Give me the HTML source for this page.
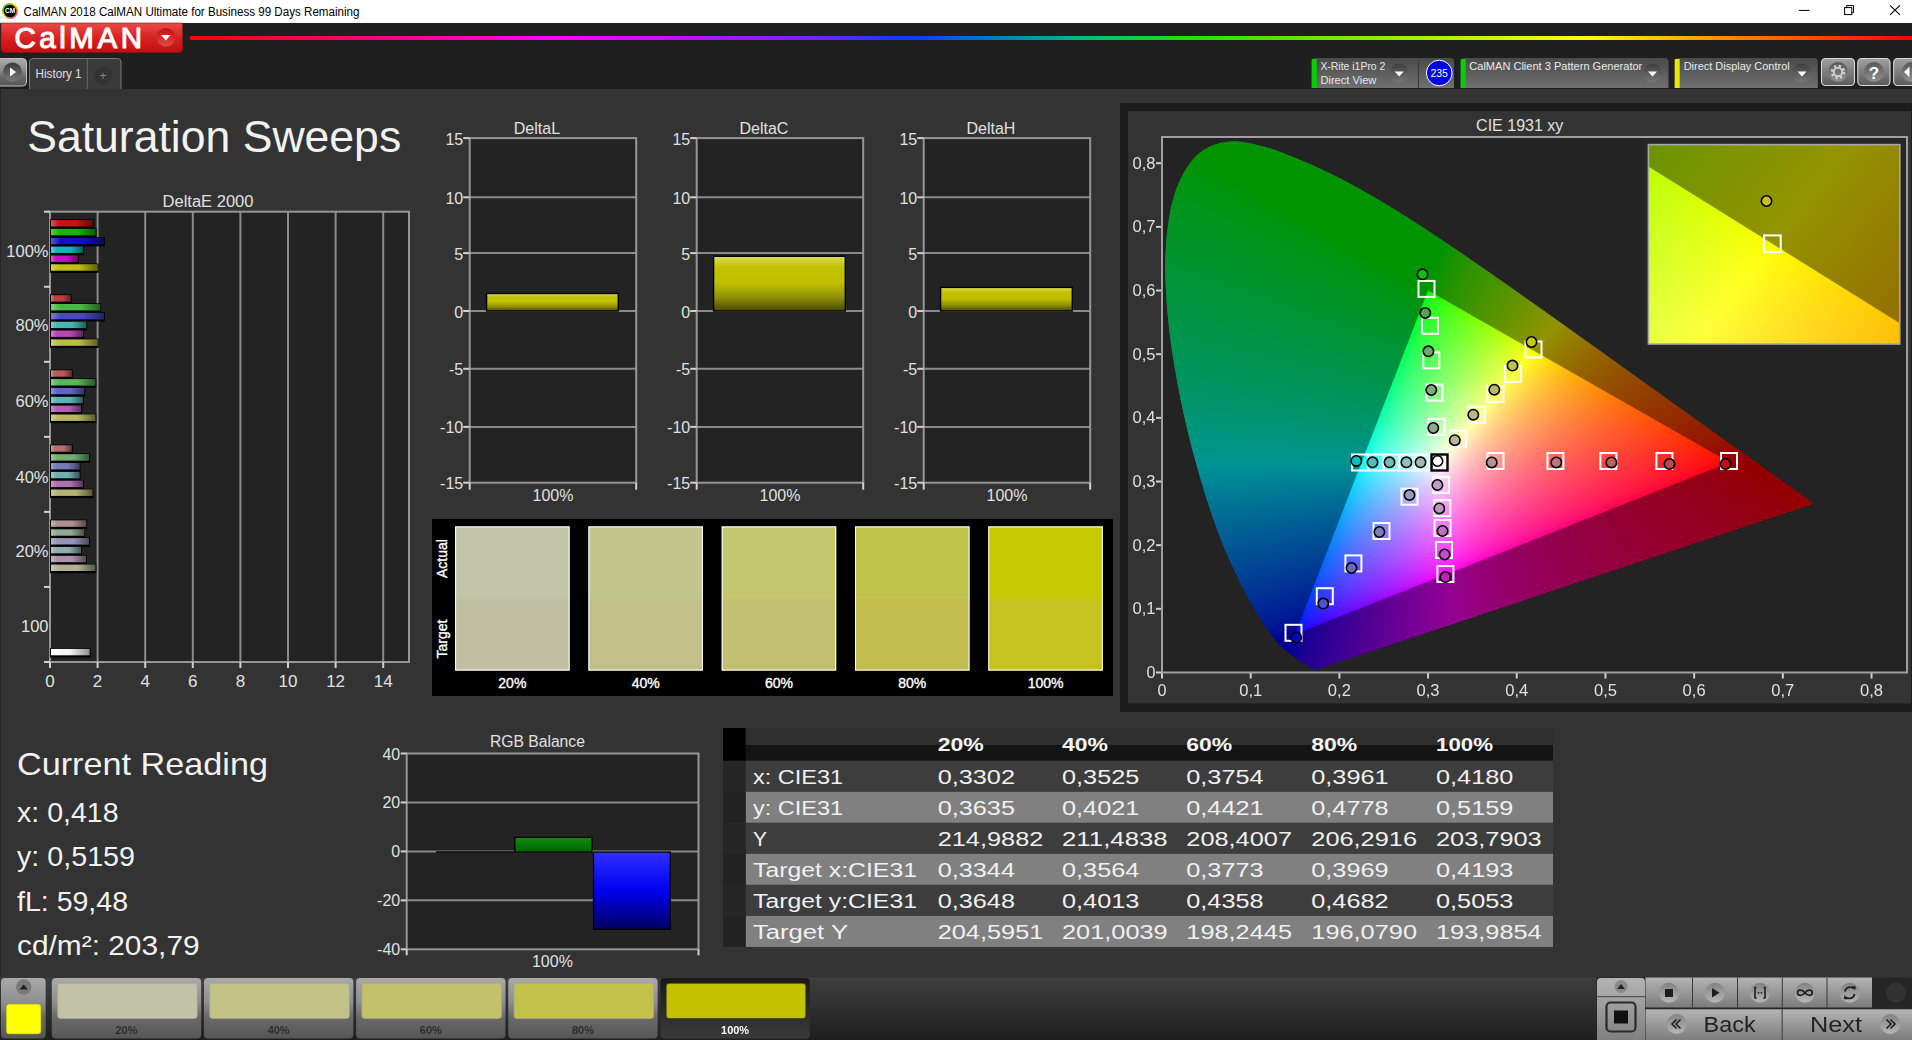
<!DOCTYPE html>
<html><head><meta charset="utf-8"><title>CalMAN</title>
<style>
html,body{margin:0;padding:0;width:1912px;height:1040px;overflow:hidden;background:#333;font-family:"Liberation Sans",sans-serif}
svg,canvas{position:absolute;display:block}
text{font-family:"Liberation Sans",sans-serif}
</style></head><body>
<svg width="1912" height="1040" style="left:0;top:0"><defs>
<linearGradient id="gLogo" x1="0" y1="0" x2="0" y2="1"><stop offset="0" stop-color="#e84a4a"/><stop offset="0.5" stop-color="#d82222"/><stop offset="1" stop-color="#c40c0c"/></linearGradient>
<linearGradient id="gLogoBtn" x1="0" y1="0" x2="0" y2="1"><stop offset="0" stop-color="#c01010"/><stop offset="1" stop-color="#e04848"/></linearGradient>
<linearGradient id="gRain" x1="0" y1="0" x2="1" y2="0">
 <stop offset="0" stop-color="#ff0000"/><stop offset="0.215" stop-color="#ff00ff"/><stop offset="0.36" stop-color="#7a20ff"/><stop offset="0.42" stop-color="#0040ff"/>
 <stop offset="0.52" stop-color="#00c080"/><stop offset="0.58" stop-color="#20e000"/><stop offset="0.81" stop-color="#ffff00"/><stop offset="0.9" stop-color="#ff8000"/><stop offset="1" stop-color="#ff0000"/></linearGradient>
<linearGradient id="gWid" x1="0" y1="0" x2="0" y2="1"><stop offset="0" stop-color="#4a4a4a"/><stop offset="1" stop-color="#707070"/></linearGradient>
<linearGradient id="gBtnLt" x1="0" y1="0" x2="0" y2="1"><stop offset="0" stop-color="#a0a0a0"/><stop offset="1" stop-color="#5a5a5a"/></linearGradient><linearGradient id="gCirc" x1="0" y1="0" x2="0" y2="1"><stop offset="0" stop-color="#585858"/><stop offset="1" stop-color="#909090"/></linearGradient><linearGradient id="gBtnDk" x1="0" y1="0" x2="0" y2="1"><stop offset="0" stop-color="#777"/><stop offset="1" stop-color="#444"/></linearGradient>
<linearGradient id="gDrop" x1="0" y1="0" x2="0" y2="1"><stop offset="0" stop-color="#3a3a3a"/><stop offset="1" stop-color="#7a7a7a"/></linearGradient>
<linearGradient id="gTile" x1="0" y1="0" x2="0" y2="1"><stop offset="0" stop-color="#aaaaaa"/><stop offset="0.4" stop-color="#8e8e8e"/><stop offset="0.65" stop-color="#6a6a6a"/><stop offset="1" stop-color="#565656"/></linearGradient>
<linearGradient id="gTileSel" x1="0" y1="0" x2="0" y2="1"><stop offset="0" stop-color="#1a1a1a"/><stop offset="1" stop-color="#3a3a3a"/></linearGradient>
<linearGradient id="gBar" x1="0" y1="0" x2="0" y2="1"><stop offset="0" stop-color="#3e3e3e"/><stop offset="1" stop-color="#1e1e1e"/></linearGradient>
<linearGradient id="gCtl" x1="0" y1="0" x2="0" y2="1"><stop offset="0" stop-color="#b4b4b4"/><stop offset="1" stop-color="#7c7c7c"/></linearGradient>
<linearGradient id="gCtlC" x1="0" y1="0" x2="0" y2="1"><stop offset="0" stop-color="#7a7a7a"/><stop offset="1" stop-color="#c0c0c0"/></linearGradient>
<linearGradient id="gYel" x1="0" y1="0" x2="0" y2="1"><stop offset="0" stop-color="#dcdc5a"/><stop offset="0.2" stop-color="#c2c200"/><stop offset="0.48" stop-color="#c0c000"/><stop offset="0.75" stop-color="#909008"/><stop offset="1" stop-color="#4a4800"/></linearGradient>
<linearGradient id="gGrn" x1="0" y1="0" x2="0" y2="1"><stop offset="0" stop-color="#109010"/><stop offset="1" stop-color="#006000"/></linearGradient>
<linearGradient id="gBlu" x1="0" y1="0" x2="0" y2="1"><stop offset="0" stop-color="#3030ff"/><stop offset="0.5" stop-color="#0000f0"/><stop offset="1" stop-color="#000060"/></linearGradient>
<linearGradient id="gIco" x1="0" y1="0" x2="1" y2="1"><stop offset="0" stop-color="#00d000"/><stop offset="0.5" stop-color="#ffd000"/><stop offset="1" stop-color="#d000d0"/></linearGradient><linearGradient id="hb" x1="0" y1="0" x2="1" y2="0"><stop offset="0" stop-color="#fff" stop-opacity="0.3"/><stop offset="0.18" stop-color="#fff" stop-opacity="0"/><stop offset="0.6" stop-color="#000" stop-opacity="0"/><stop offset="1" stop-color="#000" stop-opacity="0.5"/></linearGradient><linearGradient id="gWhite" x1="0" y1="0" x2="1" y2="0"><stop offset="0" stop-color="#ffffff"/><stop offset="0.5" stop-color="#f0f0f0"/><stop offset="1" stop-color="#909090"/></linearGradient><linearGradient id="fiU" x1="0" y1="0" x2="1" y2="1"><stop offset="0" stop-color="#609800"/><stop offset="0.5" stop-color="#9a9600"/><stop offset="1" stop-color="#9a7000"/></linearGradient><linearGradient id="fiL" x1="0" y1="0" x2="1" y2="1"><stop offset="0" stop-color="#b8ff00"/><stop offset="0.5" stop-color="#ffff10"/><stop offset="1" stop-color="#ffb400"/></linearGradient><clipPath id="cpH"><polygon points="1316.4,669.3 1316.4,669.3 1316.4,669.3 1316.4,669.3 1316.3,669.3 1316.3,669.3 1316.2,669.3 1316.2,669.4 1316.1,669.4 1316.1,669.4 1316.1,669.4 1316.0,669.4 1316.0,669.4 1315.9,669.4 1315.8,669.4 1315.8,669.4 1315.7,669.4 1315.6,669.4 1315.6,669.4 1315.5,669.4 1315.4,669.4 1315.4,669.4 1315.3,669.4 1315.2,669.4 1315.1,669.4 1315.0,669.4 1314.9,669.5 1314.8,669.5 1314.6,669.4 1314.5,669.4 1314.4,669.4 1314.2,669.3 1314.0,669.3 1313.8,669.2 1313.6,669.1 1313.3,668.9 1313.0,668.8 1312.8,668.7 1312.5,668.5 1312.2,668.3 1311.8,668.1 1311.4,667.9 1311.0,667.6 1310.5,667.3 1310.0,667.0 1309.5,666.7 1309.0,666.3 1308.4,666.0 1307.8,665.6 1307.1,665.1 1306.5,664.7 1305.7,664.2 1304.9,663.7 1304.0,663.2 1303.0,662.6 1302.0,661.9 1300.9,661.2 1299.7,660.5 1298.5,659.8 1297.3,659.0 1295.9,658.0 1294.5,657.1 1293.0,656.0 1291.4,654.9 1289.7,653.6 1288.0,652.2 1286.2,650.8 1284.3,649.1 1282.2,647.1 1279.9,644.8 1277.5,642.2 1274.8,639.2 1272.1,635.7 1269.1,631.8 1266.0,627.6 1262.7,622.8 1259.2,617.2 1255.5,611.0 1251.5,604.2 1247.4,596.6 1243.0,588.0 1238.2,578.6 1233.2,568.3 1228.1,557.1 1222.9,544.7 1217.8,531.3 1212.6,516.7 1207.4,501.2 1202.3,484.7 1197.2,467.1 1192.1,448.5 1187.3,429.2 1182.8,409.8 1178.8,390.0 1175.1,369.7 1171.8,349.5 1169.3,329.8 1167.3,310.5 1166.0,291.5 1165.3,273.1 1165.5,255.7 1166.5,239.0 1168.3,223.1 1170.9,208.3 1174.3,194.9 1178.7,183.0 1184.0,172.3 1190.0,163.1 1196.5,155.6 1203.6,149.9 1211.4,145.9 1219.6,143.3 1227.9,141.7 1236.5,141.4 1245.3,142.4 1254.3,144.3 1263.3,146.5 1272.3,149.1 1281.3,152.3 1290.4,155.9 1299.2,159.5 1307.8,163.1 1316.4,166.9 1324.8,170.9 1333.1,174.9 1341.3,179.1 1349.5,183.4 1357.6,187.8 1365.6,192.3 1373.7,196.9 1381.7,201.7 1389.7,206.5 1397.7,211.4 1405.7,216.4 1413.6,221.5 1421.6,226.6 1429.5,231.8 1437.4,237.0 1445.3,242.3 1453.2,247.7 1461.2,253.0 1469.1,258.5 1477.0,263.9 1485.0,269.4 1492.9,274.9 1500.8,280.5 1508.7,286.0 1516.6,291.6 1524.5,297.2 1532.4,302.7 1540.2,308.3 1548.1,313.8 1555.9,319.4 1563.6,324.9 1571.4,330.4 1579.0,335.9 1586.6,341.3 1594.2,346.7 1601.7,352.1 1609.2,357.5 1616.5,362.7 1623.8,367.9 1631.0,373.1 1638.2,378.2 1645.2,383.2 1652.1,388.2 1658.9,393.0 1665.6,397.8 1672.1,402.5 1678.5,407.0 1684.8,411.5 1690.9,415.9 1696.7,420.1 1702.3,424.1 1707.8,428.0 1713.0,431.7 1718.1,435.4 1723.0,438.9 1727.8,442.3 1732.5,445.6 1736.9,448.8 1741.1,451.8 1745.1,454.6 1748.9,457.3 1752.5,459.9 1755.9,462.3 1759.2,464.7 1762.3,466.9 1765.2,469.0 1767.9,471.0 1770.5,472.8 1773.0,474.6 1775.3,476.2 1777.5,477.8 1779.6,479.3 1781.5,480.6 1783.4,482.0 1785.1,483.2 1786.8,484.4 1788.3,485.5 1789.8,486.6 1791.3,487.7 1792.7,488.6 1794.0,489.6 1795.2,490.5 1796.4,491.4 1797.6,492.2 1798.7,492.9 1799.7,493.7 1800.7,494.4 1801.6,495.0 1802.4,495.6 1803.2,496.2 1804.0,496.7 1804.7,497.2 1805.3,497.6 1805.9,498.1 1806.5,498.5 1807.0,498.9 1807.5,499.2 1807.9,499.5 1808.4,499.8 1808.7,500.1 1809.1,500.4 1809.4,500.6 1809.7,500.8 1810.0,501.0 1810.2,501.2 1810.4,501.3 1810.6,501.5 1810.8,501.6 1811.0,501.7 1811.2,501.9 1811.5,502.1 1811.8,502.3 1812.2,502.6 1812.5,502.8 1812.7,503.0 1813.0,503.1 1813.2,503.3 1813.3,503.4 1813.5,503.5 1813.5,503.6 1813.6,503.6 1813.6,503.6"/></clipPath><clipPath id="cpT"><polygon points="1729.6,462.4 1428.1,290.5 1295.0,634.3"/></clipPath><filter id="fb" x="-5%" y="-5%" width="110%" height="110%"><feGaussianBlur stdDeviation="7"/></filter></defs>
<rect x="0" y="0" width="1912" height="23" fill="#ffffff"/>
<circle cx="10" cy="11" r="8" fill="url(#gIco)"/><circle cx="10" cy="11" r="6.3" fill="#000"/>
<text x="10" y="13.3" font-size="6.5" fill="#fff" text-anchor="middle" font-weight="bold">CM</text>
<text x="23.5" y="15.7" font-size="12" fill="#000" textLength="336" lengthAdjust="spacingAndGlyphs">CalMAN 2018 CalMAN Ultimate for Business 99 Days Remaining</text>
<line x1="1799" y1="10.4" x2="1809.5" y2="10.4" stroke="#000" stroke-width="1"/>
<rect x="1844.6" y="7.6" width="7.2" height="7" fill="none" stroke="#000" stroke-width="1"/><path d="M1846.6 7.6 V5.6 H1853.6 V12.6 H1851.8" fill="none" stroke="#000" stroke-width="1"/>
<path d="M1890 5.3 L1900 14.8 M1900 5.3 L1890 14.8" stroke="#000" stroke-width="1.1"/>
<rect x="0" y="23" width="1912" height="66" fill="#1f1f1f"/>
<path d="M1 23 H182.5 V48.6 Q182.5 52.6 178.5 52.6 H5 Q1 52.6 1 48.6 Z" fill="url(#gLogo)" stroke="#7a2020" stroke-width="0.6"/>
<text x="14.5" y="48" font-size="29.5" fill="#ffffff" textLength="127.5" lengthAdjust="spacing" stroke="#ffffff" stroke-width="1.1">CalMAN</text>
<circle cx="165.8" cy="37.3" r="9.4" fill="url(#gLogoBtn)"/><path d="M161 35 L170.6 35 L165.8 40.6 Z" fill="#fff"/>
<rect x="190" y="36" width="1722" height="4" fill="url(#gRain)"/>
<rect x="-3" y="58.5" width="29.5" height="27.5" rx="4" fill="url(#gTile)" stroke="#c0c0c0" stroke-width="1"/>
<circle cx="12.5" cy="72" r="9.5" fill="url(#gDrop)"/><path d="M10 67.5 L16 72 L10 76.5 Z" fill="#fff"/>
<path d="M29.5 89 V62 Q29.5 58.5 33 58.5 H117.5 Q121 58.5 121 62 V89" fill="#3a3a3a" stroke="#7a7a7a" stroke-width="1"/>
<line x1="87.3" y1="58.5" x2="87.3" y2="89" stroke="#6a6a6a" stroke-width="1"/>
<text x="35.6" y="77.5" font-size="12" fill="#e0e0e0" textLength="46" lengthAdjust="spacingAndGlyphs">History 1</text>
<circle cx="103" cy="75.5" r="9" fill="#333"/>
<text x="103" y="79.5" font-size="12" fill="#888" text-anchor="middle">+</text>
<path d="M1311.7 88 V62 Q1311.7 58 1315.7 58 H1450 Q1454 58 1454 62 V88 Z" fill="url(#gWid)"/>
<rect x="1311.7" y="59" width="5" height="29" fill="#00d200"/>
<text x="1320.4" y="69.7" font-size="11" fill="#e8e8e8" textLength="65" lengthAdjust="spacingAndGlyphs">X-Rite i1Pro 2</text>
<text x="1320.4" y="83.5" font-size="11" fill="#e8e8e8" textLength="56" lengthAdjust="spacingAndGlyphs">Direct View</text>
<circle cx="1399.2" cy="73" r="9.5" fill="url(#gDrop)" opacity="0.8"/><path d="M1394.7 71.5 L1403.7 71.5 L1399.2 76.5 Z" fill="#fff"/>
<line x1="1418.5" y1="61" x2="1418.5" y2="88" stroke="#3a3a3a" stroke-width="1.2"/>
<circle cx="1439.2" cy="73" r="12.8" fill="#0000f0" stroke="#ffffff" stroke-width="1"/>
<text x="1439.2" y="77" font-size="10.5" fill="#fff" text-anchor="middle">235</text>
<path d="M1460.7 88 V62 Q1460.7 58 1464.7 58 H1664.5 Q1668.5 58 1668.5 62 V88 Z" fill="url(#gWid)"/>
<rect x="1460.7" y="59" width="5" height="29" fill="#00d200"/>
<text x="1469.3" y="69.7" font-size="11" fill="#e8e8e8" textLength="173" lengthAdjust="spacingAndGlyphs">CalMAN Client 3 Pattern Generator</text>
<circle cx="1652.5" cy="73" r="9.5" fill="url(#gDrop)" opacity="0.8"/><path d="M1648.0 71.5 L1657.0 71.5 L1652.5 76.5 Z" fill="#fff"/>
<path d="M1674.7 88 V62 Q1674.7 58 1678.7 58 H1813.8 Q1817.8 58 1817.8 62 V88 Z" fill="url(#gWid)"/>
<rect x="1674.7" y="59" width="5" height="29" fill="#e6e600"/>
<text x="1683.7" y="69.7" font-size="11" fill="#e8e8e8" textLength="106" lengthAdjust="spacingAndGlyphs">Direct Display Control</text>
<circle cx="1802" cy="73" r="9.5" fill="url(#gDrop)" opacity="0.8"/><path d="M1797.5 71.5 L1806.5 71.5 L1802 76.5 Z" fill="#fff"/>
<rect x="1821.5" y="58.5" width="33" height="27" rx="4" fill="url(#gBtnLt)" stroke="#d8d8d8" stroke-width="1.1"/>
<circle cx="1838.0" cy="72" r="10" fill="url(#gCirc)"/>
<rect x="1857.8" y="58.5" width="32.200000000000045" height="27" rx="4" fill="url(#gBtnLt)" stroke="#d8d8d8" stroke-width="1.1"/>
<circle cx="1873.9" cy="72" r="10" fill="url(#gCirc)"/>
<rect x="1893.7" y="58.5" width="35.799999999999955" height="27" rx="4" fill="url(#gBtnLt)" stroke="#d8d8d8" stroke-width="1.1"/>
<circle cx="1911.6" cy="72" r="10" fill="url(#gCirc)"/>
<circle cx="1838" cy="72" r="6" fill="none" stroke="#cfcfcf" stroke-width="2.6" stroke-dasharray="2.4 2.3"/><circle cx="1838" cy="72" r="4.2" fill="none" stroke="#cfcfcf" stroke-width="2"/>
<text x="1873.9" y="78.5" font-size="17" fill="#ffffff" text-anchor="middle" font-weight="bold">?</text>
<path d="M1909.5 66.8 L1904 72 L1909.5 77.2 Z" fill="#fff"/>
<rect x="0" y="89" width="1912" height="888" fill="#333333"/>
<rect x="0" y="89" width="1" height="888" fill="#262626"/>
<text x="27.2" y="152.3" font-size="44" fill="#f2f2f2" textLength="374" lengthAdjust="spacingAndGlyphs">Saturation Sweeps</text>
<text x="208" y="206.8" font-size="16" fill="#e0e0e0" text-anchor="middle" textLength="91" lengthAdjust="spacingAndGlyphs">DeltaE 2000</text>
<rect x="50" y="211.7" width="359" height="450.3" fill="#232323"/>
<line x1="97.6" y1="211.7" x2="97.6" y2="662" stroke="#8a8a8a" stroke-width="2"/>
<line x1="145.2" y1="211.7" x2="145.2" y2="662" stroke="#8a8a8a" stroke-width="2"/>
<line x1="192.8" y1="211.7" x2="192.8" y2="662" stroke="#8a8a8a" stroke-width="2"/>
<line x1="240.4" y1="211.7" x2="240.4" y2="662" stroke="#8a8a8a" stroke-width="2"/>
<line x1="288.0" y1="211.7" x2="288.0" y2="662" stroke="#8a8a8a" stroke-width="2"/>
<line x1="335.6" y1="211.7" x2="335.6" y2="662" stroke="#8a8a8a" stroke-width="2"/>
<line x1="383.2" y1="211.7" x2="383.2" y2="662" stroke="#8a8a8a" stroke-width="2"/>
<rect x="50" y="211.7" width="359" height="450.3" fill="none" stroke="#969696" stroke-width="2"/>
<line x1="44" y1="211.7" x2="50" y2="211.7" stroke="#d0d0d0" stroke-width="2"/>
<line x1="44" y1="286.75" x2="50" y2="286.75" stroke="#d0d0d0" stroke-width="2"/>
<line x1="44" y1="361.79999999999995" x2="50" y2="361.79999999999995" stroke="#d0d0d0" stroke-width="2"/>
<line x1="44" y1="436.84999999999997" x2="50" y2="436.84999999999997" stroke="#d0d0d0" stroke-width="2"/>
<line x1="44" y1="511.9" x2="50" y2="511.9" stroke="#d0d0d0" stroke-width="2"/>
<line x1="44" y1="586.95" x2="50" y2="586.95" stroke="#d0d0d0" stroke-width="2"/>
<line x1="44" y1="662.0" x2="50" y2="662.0" stroke="#d0d0d0" stroke-width="2"/>
<line x1="50.0" y1="662" x2="50.0" y2="668" stroke="#d0d0d0" stroke-width="2"/>
<text x="50.0" y="687" font-size="17" fill="#e0e0e0" text-anchor="middle">0</text>
<line x1="97.6" y1="662" x2="97.6" y2="668" stroke="#d0d0d0" stroke-width="2"/>
<text x="97.6" y="687" font-size="17" fill="#e0e0e0" text-anchor="middle">2</text>
<line x1="145.2" y1="662" x2="145.2" y2="668" stroke="#d0d0d0" stroke-width="2"/>
<text x="145.2" y="687" font-size="17" fill="#e0e0e0" text-anchor="middle">4</text>
<line x1="192.8" y1="662" x2="192.8" y2="668" stroke="#d0d0d0" stroke-width="2"/>
<text x="192.8" y="687" font-size="17" fill="#e0e0e0" text-anchor="middle">6</text>
<line x1="240.4" y1="662" x2="240.4" y2="668" stroke="#d0d0d0" stroke-width="2"/>
<text x="240.4" y="687" font-size="17" fill="#e0e0e0" text-anchor="middle">8</text>
<line x1="288.0" y1="662" x2="288.0" y2="668" stroke="#d0d0d0" stroke-width="2"/>
<text x="288.0" y="687" font-size="17" fill="#e0e0e0" text-anchor="middle">10</text>
<line x1="335.6" y1="662" x2="335.6" y2="668" stroke="#d0d0d0" stroke-width="2"/>
<text x="335.6" y="687" font-size="17" fill="#e0e0e0" text-anchor="middle">12</text>
<line x1="383.2" y1="662" x2="383.2" y2="668" stroke="#d0d0d0" stroke-width="2"/>
<text x="383.2" y="687" font-size="17" fill="#e0e0e0" text-anchor="middle">14</text>
<text x="48.5" y="257" font-size="16.5" fill="#e0e0e0" text-anchor="end">100%</text>
<text x="48.5" y="331" font-size="16.5" fill="#e0e0e0" text-anchor="end">80%</text>
<text x="48.5" y="406.5" font-size="16.5" fill="#e0e0e0" text-anchor="end">60%</text>
<text x="48.5" y="483" font-size="16.5" fill="#e0e0e0" text-anchor="end">40%</text>
<text x="48.5" y="557" font-size="16.5" fill="#e0e0e0" text-anchor="end">20%</text>
<text x="48.5" y="632" font-size="16.5" fill="#e0e0e0" text-anchor="end">100</text>
<rect x="50" y="219.3" width="43.7" height="9.4" fill="#000"/>
<rect x="51" y="220.1" width="41.7" height="6.4" fill="#c81414"/>
<rect x="51" y="220.1" width="41.7" height="6.4" fill="url(#hb)"/>
<rect x="50" y="228.1" width="46.5" height="9.4" fill="#000"/>
<rect x="51" y="228.9" width="44.5" height="6.4" fill="#14b414"/>
<rect x="51" y="228.9" width="44.5" height="6.4" fill="url(#hb)"/>
<rect x="50" y="237.0" width="54.8" height="9.4" fill="#000"/>
<rect x="51" y="237.8" width="52.8" height="6.4" fill="#1010c0"/>
<rect x="51" y="237.8" width="52.8" height="6.4" fill="url(#hb)"/>
<rect x="50" y="245.8" width="34.0" height="9.4" fill="#000"/>
<rect x="51" y="246.6" width="32.0" height="6.4" fill="#14b4b4"/>
<rect x="51" y="246.6" width="32.0" height="6.4" fill="url(#hb)"/>
<rect x="50" y="254.7" width="28.9" height="9.4" fill="#000"/>
<rect x="51" y="255.5" width="26.9" height="6.4" fill="#c014c0"/>
<rect x="51" y="255.5" width="26.9" height="6.4" fill="url(#hb)"/>
<rect x="50" y="263.5" width="48.6" height="9.4" fill="#000"/>
<rect x="51" y="264.3" width="46.6" height="6.4" fill="#c0c014"/>
<rect x="51" y="264.3" width="46.6" height="6.4" fill="url(#hb)"/>
<rect x="50" y="294.4" width="21.6" height="9.4" fill="#000"/>
<rect x="51" y="295.2" width="19.6" height="6.4" fill="#c04040"/>
<rect x="51" y="295.2" width="19.6" height="6.4" fill="url(#hb)"/>
<rect x="50" y="303.2" width="51.2" height="9.4" fill="#000"/>
<rect x="51" y="304.0" width="49.2" height="6.4" fill="#48b848"/>
<rect x="51" y="304.0" width="49.2" height="6.4" fill="url(#hb)"/>
<rect x="50" y="312.1" width="54.8" height="9.4" fill="#000"/>
<rect x="51" y="312.9" width="52.8" height="6.4" fill="#4848c0"/>
<rect x="51" y="312.9" width="52.8" height="6.4" fill="url(#hb)"/>
<rect x="50" y="320.9" width="37.2" height="9.4" fill="#000"/>
<rect x="51" y="321.7" width="35.2" height="6.4" fill="#48b4b4"/>
<rect x="51" y="321.7" width="35.2" height="6.4" fill="url(#hb)"/>
<rect x="50" y="329.7" width="34.0" height="9.4" fill="#000"/>
<rect x="51" y="330.5" width="32.0" height="6.4" fill="#b848b8"/>
<rect x="51" y="330.5" width="32.0" height="6.4" fill="url(#hb)"/>
<rect x="50" y="338.6" width="48.6" height="9.4" fill="#000"/>
<rect x="51" y="339.4" width="46.6" height="6.4" fill="#bcbc48"/>
<rect x="51" y="339.4" width="46.6" height="6.4" fill="url(#hb)"/>
<rect x="50" y="369.5" width="22.7" height="9.4" fill="#000"/>
<rect x="51" y="370.3" width="20.7" height="6.4" fill="#bc5a5a"/>
<rect x="51" y="370.3" width="20.7" height="6.4" fill="url(#hb)"/>
<rect x="50" y="378.3" width="46.3" height="9.4" fill="#000"/>
<rect x="51" y="379.1" width="44.3" height="6.4" fill="#5ab45a"/>
<rect x="51" y="379.1" width="44.3" height="6.4" fill="url(#hb)"/>
<rect x="50" y="387.1" width="35.2" height="9.4" fill="#000"/>
<rect x="51" y="387.9" width="33.2" height="6.4" fill="#6464c4"/>
<rect x="51" y="387.9" width="33.2" height="6.4" fill="url(#hb)"/>
<rect x="50" y="396.0" width="33.8" height="9.4" fill="#000"/>
<rect x="51" y="396.8" width="31.8" height="6.4" fill="#5ab4b4"/>
<rect x="51" y="396.8" width="31.8" height="6.4" fill="url(#hb)"/>
<rect x="50" y="404.8" width="32.1" height="9.4" fill="#000"/>
<rect x="51" y="405.6" width="30.1" height="6.4" fill="#b85ab8"/>
<rect x="51" y="405.6" width="30.1" height="6.4" fill="url(#hb)"/>
<rect x="50" y="413.7" width="46.3" height="9.4" fill="#000"/>
<rect x="51" y="414.5" width="44.3" height="6.4" fill="#b8b85a"/>
<rect x="51" y="414.5" width="44.3" height="6.4" fill="url(#hb)"/>
<rect x="50" y="444.5" width="22.7" height="9.4" fill="#000"/>
<rect x="51" y="445.3" width="20.7" height="6.4" fill="#b47070"/>
<rect x="51" y="445.3" width="20.7" height="6.4" fill="url(#hb)"/>
<rect x="50" y="453.4" width="39.9" height="9.4" fill="#000"/>
<rect x="51" y="454.2" width="37.9" height="6.4" fill="#70ae70"/>
<rect x="51" y="454.2" width="37.9" height="6.4" fill="url(#hb)"/>
<rect x="50" y="462.2" width="30.5" height="9.4" fill="#000"/>
<rect x="51" y="463.0" width="28.5" height="6.4" fill="#7878bc"/>
<rect x="51" y="463.0" width="28.5" height="6.4" fill="url(#hb)"/>
<rect x="50" y="471.1" width="30.5" height="9.4" fill="#000"/>
<rect x="51" y="471.9" width="28.5" height="6.4" fill="#70b0b0"/>
<rect x="51" y="471.9" width="28.5" height="6.4" fill="url(#hb)"/>
<rect x="50" y="479.9" width="33.8" height="9.4" fill="#000"/>
<rect x="51" y="480.7" width="31.8" height="6.4" fill="#b070b0"/>
<rect x="51" y="480.7" width="31.8" height="6.4" fill="url(#hb)"/>
<rect x="50" y="488.7" width="43.3" height="9.4" fill="#000"/>
<rect x="51" y="489.5" width="41.3" height="6.4" fill="#b4b470"/>
<rect x="51" y="489.5" width="41.3" height="6.4" fill="url(#hb)"/>
<rect x="50" y="519.6" width="37.2" height="9.4" fill="#000"/>
<rect x="51" y="520.4" width="35.2" height="6.4" fill="#b09090"/>
<rect x="51" y="520.4" width="35.2" height="6.4" fill="url(#hb)"/>
<rect x="50" y="528.5" width="35.2" height="9.4" fill="#000"/>
<rect x="51" y="529.3" width="33.2" height="6.4" fill="#90aa90"/>
<rect x="51" y="529.3" width="33.2" height="6.4" fill="url(#hb)"/>
<rect x="50" y="537.3" width="39.9" height="9.4" fill="#000"/>
<rect x="51" y="538.1" width="37.9" height="6.4" fill="#9494b4"/>
<rect x="51" y="538.1" width="37.9" height="6.4" fill="url(#hb)"/>
<rect x="50" y="546.1" width="32.1" height="9.4" fill="#000"/>
<rect x="51" y="546.9" width="30.1" height="6.4" fill="#90acac"/>
<rect x="51" y="546.9" width="30.1" height="6.4" fill="url(#hb)"/>
<rect x="50" y="555.0" width="36.9" height="9.4" fill="#000"/>
<rect x="51" y="555.8" width="34.9" height="6.4" fill="#ac90ac"/>
<rect x="51" y="555.8" width="34.9" height="6.4" fill="url(#hb)"/>
<rect x="50" y="563.8" width="46.3" height="9.4" fill="#000"/>
<rect x="51" y="564.6" width="44.3" height="6.4" fill="#b0b090"/>
<rect x="51" y="564.6" width="44.3" height="6.4" fill="url(#hb)"/>
<rect x="50" y="648.1" width="40.6" height="9.4" fill="#000"/><rect x="51" y="648.9" width="38.6" height="6.4" fill="url(#gWhite)"/>
<rect x="469.7" y="138.1" width="166.50000000000006" height="344.6" fill="#232323"/>
<line x1="469.7" y1="197.3" x2="636.2" y2="197.3" stroke="#8a8a8a" stroke-width="2"/>
<line x1="469.7" y1="253.1" x2="636.2" y2="253.1" stroke="#8a8a8a" stroke-width="2"/>
<line x1="469.7" y1="311.0" x2="636.2" y2="311.0" stroke="#8a8a8a" stroke-width="2"/>
<line x1="469.7" y1="368.8" x2="636.2" y2="368.8" stroke="#8a8a8a" stroke-width="2"/>
<line x1="469.7" y1="426.9" x2="636.2" y2="426.9" stroke="#8a8a8a" stroke-width="2"/>
<rect x="469.7" y="138.1" width="166.50000000000006" height="344.6" fill="none" stroke="#969696" stroke-width="2"/>
<line x1="463.2" y1="138.1" x2="469.7" y2="138.1" stroke="#d0d0d0" stroke-width="2"/>
<text x="463.2" y="144.6" font-size="16" fill="#e0e0e0" text-anchor="end">15</text>
<line x1="463.2" y1="197.3" x2="469.7" y2="197.3" stroke="#d0d0d0" stroke-width="2"/>
<text x="463.2" y="203.8" font-size="16" fill="#e0e0e0" text-anchor="end">10</text>
<line x1="463.2" y1="253.1" x2="469.7" y2="253.1" stroke="#d0d0d0" stroke-width="2"/>
<text x="463.2" y="259.6" font-size="16" fill="#e0e0e0" text-anchor="end">5</text>
<line x1="463.2" y1="311.0" x2="469.7" y2="311.0" stroke="#d0d0d0" stroke-width="2"/>
<text x="463.2" y="317.5" font-size="16" fill="#e0e0e0" text-anchor="end">0</text>
<line x1="463.2" y1="368.8" x2="469.7" y2="368.8" stroke="#d0d0d0" stroke-width="2"/>
<text x="463.2" y="375.3" font-size="16" fill="#e0e0e0" text-anchor="end">-5</text>
<line x1="463.2" y1="426.9" x2="469.7" y2="426.9" stroke="#d0d0d0" stroke-width="2"/>
<text x="463.2" y="433.4" font-size="16" fill="#e0e0e0" text-anchor="end">-10</text>
<line x1="463.2" y1="482.7" x2="469.7" y2="482.7" stroke="#d0d0d0" stroke-width="2"/>
<text x="463.2" y="489.2" font-size="16" fill="#e0e0e0" text-anchor="end">-15</text>
<line x1="469.7" y1="482.7" x2="469.7" y2="489.7" stroke="#d0d0d0" stroke-width="2"/>
<line x1="636.2" y1="482.7" x2="636.2" y2="489.7" stroke="#d0d0d0" stroke-width="2"/>
<text x="536.95" y="134.3" font-size="16" fill="#e0e0e0" text-anchor="middle">DeltaL</text>
<text x="552.95" y="501" font-size="16" fill="#e0e0e0" text-anchor="middle">100%</text>
<rect x="486.59999999999997" y="293.5" width="131.7" height="17.5" fill="url(#gYel)" stroke="#000" stroke-width="1.4"/>
<rect x="696.7" y="138.1" width="166.5" height="344.6" fill="#232323"/>
<line x1="696.7" y1="197.3" x2="863.2" y2="197.3" stroke="#8a8a8a" stroke-width="2"/>
<line x1="696.7" y1="253.1" x2="863.2" y2="253.1" stroke="#8a8a8a" stroke-width="2"/>
<line x1="696.7" y1="311.0" x2="863.2" y2="311.0" stroke="#8a8a8a" stroke-width="2"/>
<line x1="696.7" y1="368.8" x2="863.2" y2="368.8" stroke="#8a8a8a" stroke-width="2"/>
<line x1="696.7" y1="426.9" x2="863.2" y2="426.9" stroke="#8a8a8a" stroke-width="2"/>
<rect x="696.7" y="138.1" width="166.5" height="344.6" fill="none" stroke="#969696" stroke-width="2"/>
<line x1="690.2" y1="138.1" x2="696.7" y2="138.1" stroke="#d0d0d0" stroke-width="2"/>
<text x="690.2" y="144.6" font-size="16" fill="#e0e0e0" text-anchor="end">15</text>
<line x1="690.2" y1="197.3" x2="696.7" y2="197.3" stroke="#d0d0d0" stroke-width="2"/>
<text x="690.2" y="203.8" font-size="16" fill="#e0e0e0" text-anchor="end">10</text>
<line x1="690.2" y1="253.1" x2="696.7" y2="253.1" stroke="#d0d0d0" stroke-width="2"/>
<text x="690.2" y="259.6" font-size="16" fill="#e0e0e0" text-anchor="end">5</text>
<line x1="690.2" y1="311.0" x2="696.7" y2="311.0" stroke="#d0d0d0" stroke-width="2"/>
<text x="690.2" y="317.5" font-size="16" fill="#e0e0e0" text-anchor="end">0</text>
<line x1="690.2" y1="368.8" x2="696.7" y2="368.8" stroke="#d0d0d0" stroke-width="2"/>
<text x="690.2" y="375.3" font-size="16" fill="#e0e0e0" text-anchor="end">-5</text>
<line x1="690.2" y1="426.9" x2="696.7" y2="426.9" stroke="#d0d0d0" stroke-width="2"/>
<text x="690.2" y="433.4" font-size="16" fill="#e0e0e0" text-anchor="end">-10</text>
<line x1="690.2" y1="482.7" x2="696.7" y2="482.7" stroke="#d0d0d0" stroke-width="2"/>
<text x="690.2" y="489.2" font-size="16" fill="#e0e0e0" text-anchor="end">-15</text>
<line x1="696.7" y1="482.7" x2="696.7" y2="489.7" stroke="#d0d0d0" stroke-width="2"/>
<line x1="863.2" y1="482.7" x2="863.2" y2="489.7" stroke="#d0d0d0" stroke-width="2"/>
<text x="763.95" y="134.3" font-size="16" fill="#e0e0e0" text-anchor="middle">DeltaC</text>
<text x="779.95" y="501" font-size="16" fill="#e0e0e0" text-anchor="middle">100%</text>
<rect x="713.6" y="256.3" width="131.7" height="54.69999999999999" fill="url(#gYel)" stroke="#000" stroke-width="1.4"/>
<rect x="923.7" y="138.1" width="166.5" height="344.6" fill="#232323"/>
<line x1="923.7" y1="197.3" x2="1090.2" y2="197.3" stroke="#8a8a8a" stroke-width="2"/>
<line x1="923.7" y1="253.1" x2="1090.2" y2="253.1" stroke="#8a8a8a" stroke-width="2"/>
<line x1="923.7" y1="311.0" x2="1090.2" y2="311.0" stroke="#8a8a8a" stroke-width="2"/>
<line x1="923.7" y1="368.8" x2="1090.2" y2="368.8" stroke="#8a8a8a" stroke-width="2"/>
<line x1="923.7" y1="426.9" x2="1090.2" y2="426.9" stroke="#8a8a8a" stroke-width="2"/>
<rect x="923.7" y="138.1" width="166.5" height="344.6" fill="none" stroke="#969696" stroke-width="2"/>
<line x1="917.2" y1="138.1" x2="923.7" y2="138.1" stroke="#d0d0d0" stroke-width="2"/>
<text x="917.2" y="144.6" font-size="16" fill="#e0e0e0" text-anchor="end">15</text>
<line x1="917.2" y1="197.3" x2="923.7" y2="197.3" stroke="#d0d0d0" stroke-width="2"/>
<text x="917.2" y="203.8" font-size="16" fill="#e0e0e0" text-anchor="end">10</text>
<line x1="917.2" y1="253.1" x2="923.7" y2="253.1" stroke="#d0d0d0" stroke-width="2"/>
<text x="917.2" y="259.6" font-size="16" fill="#e0e0e0" text-anchor="end">5</text>
<line x1="917.2" y1="311.0" x2="923.7" y2="311.0" stroke="#d0d0d0" stroke-width="2"/>
<text x="917.2" y="317.5" font-size="16" fill="#e0e0e0" text-anchor="end">0</text>
<line x1="917.2" y1="368.8" x2="923.7" y2="368.8" stroke="#d0d0d0" stroke-width="2"/>
<text x="917.2" y="375.3" font-size="16" fill="#e0e0e0" text-anchor="end">-5</text>
<line x1="917.2" y1="426.9" x2="923.7" y2="426.9" stroke="#d0d0d0" stroke-width="2"/>
<text x="917.2" y="433.4" font-size="16" fill="#e0e0e0" text-anchor="end">-10</text>
<line x1="917.2" y1="482.7" x2="923.7" y2="482.7" stroke="#d0d0d0" stroke-width="2"/>
<text x="917.2" y="489.2" font-size="16" fill="#e0e0e0" text-anchor="end">-15</text>
<line x1="923.7" y1="482.7" x2="923.7" y2="489.7" stroke="#d0d0d0" stroke-width="2"/>
<line x1="1090.2" y1="482.7" x2="1090.2" y2="489.7" stroke="#d0d0d0" stroke-width="2"/>
<text x="990.95" y="134.3" font-size="16" fill="#e0e0e0" text-anchor="middle">DeltaH</text>
<text x="1006.95" y="501" font-size="16" fill="#e0e0e0" text-anchor="middle">100%</text>
<rect x="940.6" y="287.4" width="131.7" height="23.600000000000023" fill="url(#gYel)" stroke="#000" stroke-width="1.4"/>
<rect x="432" y="519" width="681" height="177" fill="#000000"/>
<rect x="455.1" y="526.4" width="114.5" height="72.6" fill="#c2c4a8"/>
<rect x="455.1" y="599" width="114.5" height="71.6" fill="#c0bfa2"/>
<rect x="455.6" y="526.9" width="113.5" height="143.2" fill="none" stroke="#ffffff" stroke-width="1"/>
<text x="512.35" y="687.5" font-size="14" fill="#ffffff" text-anchor="middle" stroke="#fff" stroke-width="0.35">20%</text>
<rect x="588.4000000000001" y="526.4" width="114.5" height="72.6" fill="#c2c58c"/>
<rect x="588.4000000000001" y="599" width="114.5" height="71.6" fill="#c2c088"/>
<rect x="588.9000000000001" y="526.9" width="113.5" height="143.2" fill="none" stroke="#ffffff" stroke-width="1"/>
<text x="645.6500000000001" y="687.5" font-size="14" fill="#ffffff" text-anchor="middle" stroke="#fff" stroke-width="0.35">40%</text>
<rect x="721.7" y="526.4" width="114.5" height="72.6" fill="#c3c76e"/>
<rect x="721.7" y="599" width="114.5" height="71.6" fill="#c3c070"/>
<rect x="722.2" y="526.9" width="113.5" height="143.2" fill="none" stroke="#ffffff" stroke-width="1"/>
<text x="778.95" y="687.5" font-size="14" fill="#ffffff" text-anchor="middle" stroke="#fff" stroke-width="0.35">60%</text>
<rect x="855.0" y="526.4" width="114.5" height="72.6" fill="#c0c44a"/>
<rect x="855.0" y="599" width="114.5" height="71.6" fill="#c2bd4c"/>
<rect x="855.5" y="526.9" width="113.5" height="143.2" fill="none" stroke="#ffffff" stroke-width="1"/>
<text x="912.25" y="687.5" font-size="14" fill="#ffffff" text-anchor="middle" stroke="#fff" stroke-width="0.35">80%</text>
<rect x="988.3000000000001" y="526.4" width="114.5" height="72.6" fill="#c6c800"/>
<rect x="988.3000000000001" y="599" width="114.5" height="71.6" fill="#c6c220"/>
<rect x="988.8000000000001" y="526.9" width="113.5" height="143.2" fill="none" stroke="#ffffff" stroke-width="1"/>
<text x="1045.5500000000002" y="687.5" font-size="14" fill="#ffffff" text-anchor="middle" stroke="#fff" stroke-width="0.35">100%</text>
<text x="0" y="0" font-size="14" fill="#ffffff" text-anchor="middle" transform="translate(446.8 558.6) rotate(-90)" stroke="#fff" stroke-width="0.35">Actual</text>
<text x="0" y="0" font-size="14" fill="#ffffff" text-anchor="middle" transform="translate(446.8 639) rotate(-90)" stroke="#fff" stroke-width="0.35">Target</text>
<rect x="1120" y="103" width="792" height="609" fill="#1c1c1c"/>
<rect x="1128" y="111" width="783" height="592.5" fill="#333333"/>
<text x="1519.7" y="131" font-size="16" fill="#e0e0e0" text-anchor="middle">CIE 1931 xy</text>
<rect x="1162" y="137" width="745" height="535.5" fill="#232323"/>
<text x="17" y="775.3" font-size="32" fill="#f2f2f2" textLength="251" lengthAdjust="spacingAndGlyphs">Current Reading</text>
<text x="17" y="821.6" font-size="28" fill="#f2f2f2" textLength="101.6" lengthAdjust="spacingAndGlyphs">x: 0,418</text>
<text x="17" y="865.7" font-size="28" fill="#f2f2f2" textLength="118" lengthAdjust="spacingAndGlyphs">y: 0,5159</text>
<text x="17" y="910.9" font-size="28" fill="#f2f2f2" textLength="111" lengthAdjust="spacingAndGlyphs">fL: 59,48</text>
<text x="17" y="955" font-size="28" fill="#f2f2f2" textLength="182.6" lengthAdjust="spacingAndGlyphs">cd/m²: 203,79</text>
<text x="537.4" y="747" font-size="16" fill="#e0e0e0" text-anchor="middle" textLength="95" lengthAdjust="spacingAndGlyphs">RGB Balance</text>
<rect x="406.7" y="753.5" width="291.8" height="195.79999999999995" fill="#232323"/>
<line x1="406.7" y1="802.45" x2="698.5" y2="802.45" stroke="#8a8a8a" stroke-width="2"/>
<line x1="406.7" y1="851.4" x2="698.5" y2="851.4" stroke="#8a8a8a" stroke-width="2"/>
<line x1="406.7" y1="900.35" x2="698.5" y2="900.35" stroke="#8a8a8a" stroke-width="2"/>
<rect x="406.7" y="753.5" width="291.8" height="195.79999999999995" fill="none" stroke="#969696" stroke-width="2"/>
<line x1="400.7" y1="753.5" x2="406.7" y2="753.5" stroke="#d0d0d0" stroke-width="2"/>
<text x="400.2" y="759.5" font-size="16" fill="#e0e0e0" text-anchor="end">40</text>
<line x1="400.7" y1="802.45" x2="406.7" y2="802.45" stroke="#d0d0d0" stroke-width="2"/>
<text x="400.2" y="808.45" font-size="16" fill="#e0e0e0" text-anchor="end">20</text>
<line x1="400.7" y1="851.4" x2="406.7" y2="851.4" stroke="#d0d0d0" stroke-width="2"/>
<text x="400.2" y="857.4" font-size="16" fill="#e0e0e0" text-anchor="end">0</text>
<line x1="400.7" y1="900.35" x2="406.7" y2="900.35" stroke="#d0d0d0" stroke-width="2"/>
<text x="400.2" y="906.35" font-size="16" fill="#e0e0e0" text-anchor="end">-20</text>
<line x1="400.7" y1="949.3" x2="406.7" y2="949.3" stroke="#d0d0d0" stroke-width="2"/>
<text x="400.2" y="955.3" font-size="16" fill="#e0e0e0" text-anchor="end">-40</text>
<line x1="406.7" y1="949.3" x2="406.7" y2="955.3" stroke="#d0d0d0" stroke-width="2"/>
<line x1="698.5" y1="949.3" x2="698.5" y2="955.3" stroke="#d0d0d0" stroke-width="2"/>
<text x="552.4" y="967.4" font-size="16" fill="#e0e0e0" text-anchor="middle">100%</text>
<line x1="436" y1="852.1" x2="514" y2="852.1" stroke="#000" stroke-width="1.5"/>
<rect x="514.8" y="837.4" width="77.2" height="14.7" fill="url(#gGrn)" stroke="#000" stroke-width="1.3"/>
<rect x="593.5" y="852.1" width="76.8" height="77.2" fill="url(#gBlu)" stroke="#000" stroke-width="1.3"/>
<rect x="723" y="728" width="830" height="17" fill="#2f2f2f"/>
<rect x="723" y="745" width="830" height="15.8" fill="#141414"/>
<rect x="723" y="728" width="22.7" height="32.8" fill="#000000"/>
<text x="937.7" y="751" font-size="18" fill="#f4f4f4" font-weight="bold" textLength="46" lengthAdjust="spacingAndGlyphs">20%</text>
<text x="1062" y="751" font-size="18" fill="#f4f4f4" font-weight="bold" textLength="46" lengthAdjust="spacingAndGlyphs">40%</text>
<text x="1186.3" y="751" font-size="18" fill="#f4f4f4" font-weight="bold" textLength="46" lengthAdjust="spacingAndGlyphs">60%</text>
<text x="1311.3" y="751" font-size="18" fill="#f4f4f4" font-weight="bold" textLength="46" lengthAdjust="spacingAndGlyphs">80%</text>
<text x="1436" y="751" font-size="18" fill="#f4f4f4" font-weight="bold" textLength="57" lengthAdjust="spacingAndGlyphs">100%</text>
<rect x="745.7" y="760.8" width="807.3" height="31.02" fill="#3d3d3d"/>
<rect x="723" y="760.8" width="22.7" height="31.02" fill="#262626"/>
<text x="753" y="783.5" font-size="20" fill="#f0f0f0" textLength="90" lengthAdjust="spacingAndGlyphs">x: CIE31</text>
<text x="937.7" y="783.5" font-size="20" fill="#f0f0f0" textLength="77.3" lengthAdjust="spacingAndGlyphs">0,3302</text>
<text x="1062" y="783.5" font-size="20" fill="#f0f0f0" textLength="77.3" lengthAdjust="spacingAndGlyphs">0,3525</text>
<text x="1186.3" y="783.5" font-size="20" fill="#f0f0f0" textLength="77.3" lengthAdjust="spacingAndGlyphs">0,3754</text>
<text x="1311.3" y="783.5" font-size="20" fill="#f0f0f0" textLength="77.3" lengthAdjust="spacingAndGlyphs">0,3961</text>
<text x="1436" y="783.5" font-size="20" fill="#f0f0f0" textLength="77.3" lengthAdjust="spacingAndGlyphs">0,4180</text>
<rect x="745.7" y="791.8199999999999" width="807.3" height="31.02" fill="#808080"/>
<rect x="723" y="791.8199999999999" width="22.7" height="31.02" fill="#222222"/>
<text x="753" y="814.52" font-size="20" fill="#f0f0f0" textLength="90" lengthAdjust="spacingAndGlyphs">y: CIE31</text>
<text x="937.7" y="814.52" font-size="20" fill="#f0f0f0" textLength="77.3" lengthAdjust="spacingAndGlyphs">0,3635</text>
<text x="1062" y="814.52" font-size="20" fill="#f0f0f0" textLength="77.3" lengthAdjust="spacingAndGlyphs">0,4021</text>
<text x="1186.3" y="814.52" font-size="20" fill="#f0f0f0" textLength="77.3" lengthAdjust="spacingAndGlyphs">0,4421</text>
<text x="1311.3" y="814.52" font-size="20" fill="#f0f0f0" textLength="77.3" lengthAdjust="spacingAndGlyphs">0,4778</text>
<text x="1436" y="814.52" font-size="20" fill="#f0f0f0" textLength="77.3" lengthAdjust="spacingAndGlyphs">0,5159</text>
<rect x="745.7" y="822.8399999999999" width="807.3" height="31.02" fill="#3d3d3d"/>
<rect x="723" y="822.8399999999999" width="22.7" height="31.02" fill="#262626"/>
<text x="753" y="845.54" font-size="20" fill="#f0f0f0" textLength="14" lengthAdjust="spacingAndGlyphs">Y</text>
<text x="937.7" y="845.54" font-size="20" fill="#f0f0f0" textLength="105.7" lengthAdjust="spacingAndGlyphs">214,9882</text>
<text x="1062" y="845.54" font-size="20" fill="#f0f0f0" textLength="105.7" lengthAdjust="spacingAndGlyphs">211,4838</text>
<text x="1186.3" y="845.54" font-size="20" fill="#f0f0f0" textLength="105.7" lengthAdjust="spacingAndGlyphs">208,4007</text>
<text x="1311.3" y="845.54" font-size="20" fill="#f0f0f0" textLength="105.7" lengthAdjust="spacingAndGlyphs">206,2916</text>
<text x="1436" y="845.54" font-size="20" fill="#f0f0f0" textLength="105.7" lengthAdjust="spacingAndGlyphs">203,7903</text>
<rect x="745.7" y="853.8599999999999" width="807.3" height="31.02" fill="#808080"/>
<rect x="723" y="853.8599999999999" width="22.7" height="31.02" fill="#222222"/>
<text x="753" y="876.56" font-size="20" fill="#f0f0f0" textLength="164" lengthAdjust="spacingAndGlyphs">Target x:CIE31</text>
<text x="937.7" y="876.56" font-size="20" fill="#f0f0f0" textLength="77.3" lengthAdjust="spacingAndGlyphs">0,3344</text>
<text x="1062" y="876.56" font-size="20" fill="#f0f0f0" textLength="77.3" lengthAdjust="spacingAndGlyphs">0,3564</text>
<text x="1186.3" y="876.56" font-size="20" fill="#f0f0f0" textLength="77.3" lengthAdjust="spacingAndGlyphs">0,3773</text>
<text x="1311.3" y="876.56" font-size="20" fill="#f0f0f0" textLength="77.3" lengthAdjust="spacingAndGlyphs">0,3969</text>
<text x="1436" y="876.56" font-size="20" fill="#f0f0f0" textLength="77.3" lengthAdjust="spacingAndGlyphs">0,4193</text>
<rect x="745.7" y="884.88" width="807.3" height="31.02" fill="#3d3d3d"/>
<rect x="723" y="884.88" width="22.7" height="31.02" fill="#262626"/>
<text x="753" y="907.58" font-size="20" fill="#f0f0f0" textLength="164" lengthAdjust="spacingAndGlyphs">Target y:CIE31</text>
<text x="937.7" y="907.58" font-size="20" fill="#f0f0f0" textLength="77.3" lengthAdjust="spacingAndGlyphs">0,3648</text>
<text x="1062" y="907.58" font-size="20" fill="#f0f0f0" textLength="77.3" lengthAdjust="spacingAndGlyphs">0,4013</text>
<text x="1186.3" y="907.58" font-size="20" fill="#f0f0f0" textLength="77.3" lengthAdjust="spacingAndGlyphs">0,4358</text>
<text x="1311.3" y="907.58" font-size="20" fill="#f0f0f0" textLength="77.3" lengthAdjust="spacingAndGlyphs">0,4682</text>
<text x="1436" y="907.58" font-size="20" fill="#f0f0f0" textLength="77.3" lengthAdjust="spacingAndGlyphs">0,5053</text>
<rect x="745.7" y="915.9" width="807.3" height="31.02" fill="#808080"/>
<rect x="723" y="915.9" width="22.7" height="31.02" fill="#222222"/>
<text x="753" y="938.6" font-size="20" fill="#f0f0f0" textLength="95" lengthAdjust="spacingAndGlyphs">Target Y</text>
<text x="937.7" y="938.6" font-size="20" fill="#f0f0f0" textLength="105.7" lengthAdjust="spacingAndGlyphs">204,5951</text>
<text x="1062" y="938.6" font-size="20" fill="#f0f0f0" textLength="105.7" lengthAdjust="spacingAndGlyphs">201,0039</text>
<text x="1186.3" y="938.6" font-size="20" fill="#f0f0f0" textLength="105.7" lengthAdjust="spacingAndGlyphs">198,2445</text>
<text x="1311.3" y="938.6" font-size="20" fill="#f0f0f0" textLength="105.7" lengthAdjust="spacingAndGlyphs">196,0790</text>
<text x="1436" y="938.6" font-size="20" fill="#f0f0f0" textLength="105.7" lengthAdjust="spacingAndGlyphs">193,9854</text>
<rect x="1649" y="145" width="251" height="199" fill="url(#fiU)"/><polygon points="1649,165.4 1900,322.4 1900,344 1649,344" fill="url(#fiL)"/>
<g clip-path="url(#cpH)"><g filter="url(#fb)"><rect x="1150" y="130" width="15" height="15" fill="#009301"/><rect x="1164" y="130" width="15" height="15" fill="#009300"/><rect x="1178" y="130" width="15" height="15" fill="#009300"/><rect x="1192" y="130" width="15" height="15" fill="#009300"/><rect x="1206" y="130" width="15" height="15" fill="#009300"/><rect x="1220" y="130" width="15" height="15" fill="#009300"/><rect x="1234" y="130" width="15" height="15" fill="#009300"/><rect x="1248" y="130" width="15" height="15" fill="#009300"/><rect x="1262" y="130" width="15" height="15" fill="#009300"/><rect x="1276" y="130" width="15" height="15" fill="#009300"/><rect x="1290" y="130" width="15" height="15" fill="#009300"/><rect x="1304" y="130" width="15" height="15" fill="#009300"/><rect x="1318" y="130" width="15" height="15" fill="#009300"/><rect x="1332" y="130" width="15" height="15" fill="#009300"/><rect x="1346" y="130" width="15" height="15" fill="#009300"/><rect x="1360" y="130" width="15" height="15" fill="#009300"/><rect x="1374" y="130" width="15" height="15" fill="#009300"/><rect x="1388" y="130" width="15" height="15" fill="#009300"/><rect x="1402" y="130" width="15" height="15" fill="#009300"/><rect x="1416" y="130" width="15" height="15" fill="#009300"/><rect x="1430" y="130" width="15" height="15" fill="#009300"/><rect x="1444" y="130" width="15" height="15" fill="#009300"/><rect x="1458" y="130" width="15" height="15" fill="#009300"/><rect x="1472" y="130" width="15" height="15" fill="#009300"/><rect x="1486" y="130" width="15" height="15" fill="#0a9300"/><rect x="1500" y="130" width="15" height="15" fill="#189300"/><rect x="1514" y="130" width="15" height="15" fill="#249300"/><rect x="1528" y="130" width="15" height="15" fill="#2d9300"/><rect x="1542" y="130" width="15" height="15" fill="#379300"/><rect x="1556" y="130" width="15" height="15" fill="#3f9300"/><rect x="1570" y="130" width="15" height="15" fill="#479300"/><rect x="1584" y="130" width="15" height="15" fill="#509300"/><rect x="1598" y="130" width="15" height="15" fill="#579300"/><rect x="1612" y="130" width="15" height="15" fill="#5f9300"/><rect x="1626" y="130" width="15" height="15" fill="#679300"/><rect x="1640" y="130" width="15" height="15" fill="#6f9300"/><rect x="1654" y="130" width="15" height="15" fill="#769300"/><rect x="1668" y="130" width="15" height="15" fill="#7e9300"/><rect x="1682" y="130" width="15" height="15" fill="#869300"/><rect x="1696" y="130" width="15" height="15" fill="#8d9300"/><rect x="1710" y="130" width="15" height="15" fill="#939200"/><rect x="1724" y="130" width="15" height="15" fill="#938b00"/><rect x="1738" y="130" width="15" height="15" fill="#938400"/><rect x="1752" y="130" width="15" height="15" fill="#937e00"/><rect x="1766" y="130" width="15" height="15" fill="#937800"/><rect x="1780" y="130" width="15" height="15" fill="#937300"/><rect x="1794" y="130" width="15" height="15" fill="#936e00"/><rect x="1808" y="130" width="15" height="15" fill="#936a00"/><rect x="1822" y="130" width="15" height="15" fill="#936500"/><rect x="1150" y="144" width="15" height="15" fill="#00930a"/><rect x="1164" y="144" width="15" height="15" fill="#009306"/><rect x="1178" y="144" width="15" height="15" fill="#009300"/><rect x="1192" y="144" width="15" height="15" fill="#009300"/><rect x="1206" y="144" width="15" height="15" fill="#009300"/><rect x="1220" y="144" width="15" height="15" fill="#009300"/><rect x="1234" y="144" width="15" height="15" fill="#009300"/><rect x="1248" y="144" width="15" height="15" fill="#009300"/><rect x="1262" y="144" width="15" height="15" fill="#009300"/><rect x="1276" y="144" width="15" height="15" fill="#009300"/><rect x="1290" y="144" width="15" height="15" fill="#009300"/><rect x="1304" y="144" width="15" height="15" fill="#009300"/><rect x="1318" y="144" width="15" height="15" fill="#009300"/><rect x="1332" y="144" width="15" height="15" fill="#009300"/><rect x="1346" y="144" width="15" height="15" fill="#009300"/><rect x="1360" y="144" width="15" height="15" fill="#009300"/><rect x="1374" y="144" width="15" height="15" fill="#009300"/><rect x="1388" y="144" width="15" height="15" fill="#009300"/><rect x="1402" y="144" width="15" height="15" fill="#009300"/><rect x="1416" y="144" width="15" height="15" fill="#009300"/><rect x="1430" y="144" width="15" height="15" fill="#009300"/><rect x="1444" y="144" width="15" height="15" fill="#009300"/><rect x="1458" y="144" width="15" height="15" fill="#009300"/><rect x="1472" y="144" width="15" height="15" fill="#009300"/><rect x="1486" y="144" width="15" height="15" fill="#119300"/><rect x="1500" y="144" width="15" height="15" fill="#1d9300"/><rect x="1514" y="144" width="15" height="15" fill="#289300"/><rect x="1528" y="144" width="15" height="15" fill="#329300"/><rect x="1542" y="144" width="15" height="15" fill="#3b9300"/><rect x="1556" y="144" width="15" height="15" fill="#449300"/><rect x="1570" y="144" width="15" height="15" fill="#4c9300"/><rect x="1584" y="144" width="15" height="15" fill="#549300"/><rect x="1598" y="144" width="15" height="15" fill="#5c9300"/><rect x="1612" y="144" width="15" height="15" fill="#649300"/><rect x="1626" y="144" width="15" height="15" fill="#6c9300"/><rect x="1640" y="144" width="15" height="15" fill="#749300"/><rect x="1654" y="144" width="15" height="15" fill="#7c9300"/><rect x="1668" y="144" width="15" height="15" fill="#849300"/><rect x="1682" y="144" width="15" height="15" fill="#8c9300"/><rect x="1696" y="144" width="15" height="15" fill="#939300"/><rect x="1710" y="144" width="15" height="15" fill="#938b00"/><rect x="1724" y="144" width="15" height="15" fill="#938500"/><rect x="1738" y="144" width="15" height="15" fill="#937e00"/><rect x="1752" y="144" width="15" height="15" fill="#937900"/><rect x="1766" y="144" width="15" height="15" fill="#937300"/><rect x="1780" y="144" width="15" height="15" fill="#936e00"/><rect x="1794" y="144" width="15" height="15" fill="#936a00"/><rect x="1808" y="144" width="15" height="15" fill="#936500"/><rect x="1822" y="144" width="15" height="15" fill="#936100"/><rect x="1150" y="158" width="15" height="15" fill="#009310"/><rect x="1164" y="158" width="15" height="15" fill="#00930d"/><rect x="1178" y="158" width="15" height="15" fill="#009309"/><rect x="1192" y="158" width="15" height="15" fill="#009305"/><rect x="1206" y="158" width="15" height="15" fill="#009300"/><rect x="1220" y="158" width="15" height="15" fill="#009300"/><rect x="1234" y="158" width="15" height="15" fill="#009300"/><rect x="1248" y="158" width="15" height="15" fill="#009300"/><rect x="1262" y="158" width="15" height="15" fill="#009300"/><rect x="1276" y="158" width="15" height="15" fill="#009300"/><rect x="1290" y="158" width="15" height="15" fill="#009300"/><rect x="1304" y="158" width="15" height="15" fill="#009300"/><rect x="1318" y="158" width="15" height="15" fill="#009300"/><rect x="1332" y="158" width="15" height="15" fill="#009300"/><rect x="1346" y="158" width="15" height="15" fill="#009300"/><rect x="1360" y="158" width="15" height="15" fill="#009300"/><rect x="1374" y="158" width="15" height="15" fill="#009300"/><rect x="1388" y="158" width="15" height="15" fill="#009300"/><rect x="1402" y="158" width="15" height="15" fill="#009300"/><rect x="1416" y="158" width="15" height="15" fill="#009300"/><rect x="1430" y="158" width="15" height="15" fill="#009300"/><rect x="1444" y="158" width="15" height="15" fill="#009300"/><rect x="1458" y="158" width="15" height="15" fill="#009300"/><rect x="1472" y="158" width="15" height="15" fill="#069300"/><rect x="1486" y="158" width="15" height="15" fill="#169300"/><rect x="1500" y="158" width="15" height="15" fill="#239300"/><rect x="1514" y="158" width="15" height="15" fill="#2d9300"/><rect x="1528" y="158" width="15" height="15" fill="#379300"/><rect x="1542" y="158" width="15" height="15" fill="#409300"/><rect x="1556" y="158" width="15" height="15" fill="#499300"/><rect x="1570" y="158" width="15" height="15" fill="#519300"/><rect x="1584" y="158" width="15" height="15" fill="#5a9300"/><rect x="1598" y="158" width="15" height="15" fill="#629300"/><rect x="1612" y="158" width="15" height="15" fill="#6a9300"/><rect x="1626" y="158" width="15" height="15" fill="#729300"/><rect x="1640" y="158" width="15" height="15" fill="#7a9300"/><rect x="1654" y="158" width="15" height="15" fill="#829300"/><rect x="1668" y="158" width="15" height="15" fill="#8a9300"/><rect x="1682" y="158" width="15" height="15" fill="#939300"/><rect x="1696" y="158" width="15" height="15" fill="#938c00"/><rect x="1710" y="158" width="15" height="15" fill="#938500"/><rect x="1724" y="158" width="15" height="15" fill="#937f00"/><rect x="1738" y="158" width="15" height="15" fill="#937900"/><rect x="1752" y="158" width="15" height="15" fill="#937300"/><rect x="1766" y="158" width="15" height="15" fill="#936e00"/><rect x="1780" y="158" width="15" height="15" fill="#936900"/><rect x="1794" y="158" width="15" height="15" fill="#936500"/><rect x="1808" y="158" width="15" height="15" fill="#936100"/><rect x="1822" y="158" width="15" height="15" fill="#935d00"/><rect x="1150" y="172" width="15" height="15" fill="#009316"/><rect x="1164" y="172" width="15" height="15" fill="#009313"/><rect x="1178" y="172" width="15" height="15" fill="#009310"/><rect x="1192" y="172" width="15" height="15" fill="#00930d"/><rect x="1206" y="172" width="15" height="15" fill="#009309"/><rect x="1220" y="172" width="15" height="15" fill="#009303"/><rect x="1234" y="172" width="15" height="15" fill="#009300"/><rect x="1248" y="172" width="15" height="15" fill="#009300"/><rect x="1262" y="172" width="15" height="15" fill="#009300"/><rect x="1276" y="172" width="15" height="15" fill="#009300"/><rect x="1290" y="172" width="15" height="15" fill="#009300"/><rect x="1304" y="172" width="15" height="15" fill="#009300"/><rect x="1318" y="172" width="15" height="15" fill="#009300"/><rect x="1332" y="172" width="15" height="15" fill="#009300"/><rect x="1346" y="172" width="15" height="15" fill="#009300"/><rect x="1360" y="172" width="15" height="15" fill="#009300"/><rect x="1374" y="172" width="15" height="15" fill="#009300"/><rect x="1388" y="172" width="15" height="15" fill="#009300"/><rect x="1402" y="172" width="15" height="15" fill="#009300"/><rect x="1416" y="172" width="15" height="15" fill="#009300"/><rect x="1430" y="172" width="15" height="15" fill="#009300"/><rect x="1444" y="172" width="15" height="15" fill="#009300"/><rect x="1458" y="172" width="15" height="15" fill="#009300"/><rect x="1472" y="172" width="15" height="15" fill="#0e9300"/><rect x="1486" y="172" width="15" height="15" fill="#1c9300"/><rect x="1500" y="172" width="15" height="15" fill="#289300"/><rect x="1514" y="172" width="15" height="15" fill="#329300"/><rect x="1528" y="172" width="15" height="15" fill="#3c9300"/><rect x="1542" y="172" width="15" height="15" fill="#459300"/><rect x="1556" y="172" width="15" height="15" fill="#4e9300"/><rect x="1570" y="172" width="15" height="15" fill="#569300"/><rect x="1584" y="172" width="15" height="15" fill="#5f9300"/><rect x="1598" y="172" width="15" height="15" fill="#679300"/><rect x="1612" y="172" width="15" height="15" fill="#709300"/><rect x="1626" y="172" width="15" height="15" fill="#789300"/><rect x="1640" y="172" width="15" height="15" fill="#809300"/><rect x="1654" y="172" width="15" height="15" fill="#899300"/><rect x="1668" y="172" width="15" height="15" fill="#919300"/><rect x="1682" y="172" width="15" height="15" fill="#938d00"/><rect x="1696" y="172" width="15" height="15" fill="#938600"/><rect x="1710" y="172" width="15" height="15" fill="#937f00"/><rect x="1724" y="172" width="15" height="15" fill="#937900"/><rect x="1738" y="172" width="15" height="15" fill="#937300"/><rect x="1752" y="172" width="15" height="15" fill="#936e00"/><rect x="1766" y="172" width="15" height="15" fill="#936900"/><rect x="1780" y="172" width="15" height="15" fill="#936500"/><rect x="1794" y="172" width="15" height="15" fill="#936000"/><rect x="1808" y="172" width="15" height="15" fill="#935c00"/><rect x="1822" y="172" width="15" height="15" fill="#935800"/><rect x="1150" y="186" width="15" height="15" fill="#00931b"/><rect x="1164" y="186" width="15" height="15" fill="#009318"/><rect x="1178" y="186" width="15" height="15" fill="#009316"/><rect x="1192" y="186" width="15" height="15" fill="#009313"/><rect x="1206" y="186" width="15" height="15" fill="#009310"/><rect x="1220" y="186" width="15" height="15" fill="#00930c"/><rect x="1234" y="186" width="15" height="15" fill="#009308"/><rect x="1248" y="186" width="15" height="15" fill="#009302"/><rect x="1262" y="186" width="15" height="15" fill="#009300"/><rect x="1276" y="186" width="15" height="15" fill="#009300"/><rect x="1290" y="186" width="15" height="15" fill="#009300"/><rect x="1304" y="186" width="15" height="15" fill="#009300"/><rect x="1318" y="186" width="15" height="15" fill="#009300"/><rect x="1332" y="186" width="15" height="15" fill="#009300"/><rect x="1346" y="186" width="15" height="15" fill="#009300"/><rect x="1360" y="186" width="15" height="15" fill="#009300"/><rect x="1374" y="186" width="15" height="15" fill="#009300"/><rect x="1388" y="186" width="15" height="15" fill="#009300"/><rect x="1402" y="186" width="15" height="15" fill="#009300"/><rect x="1416" y="186" width="15" height="15" fill="#009300"/><rect x="1430" y="186" width="15" height="15" fill="#009300"/><rect x="1444" y="186" width="15" height="15" fill="#009300"/><rect x="1458" y="186" width="15" height="15" fill="#009300"/><rect x="1472" y="186" width="15" height="15" fill="#149300"/><rect x="1486" y="186" width="15" height="15" fill="#219300"/><rect x="1500" y="186" width="15" height="15" fill="#2d9300"/><rect x="1514" y="186" width="15" height="15" fill="#379300"/><rect x="1528" y="186" width="15" height="15" fill="#419300"/><rect x="1542" y="186" width="15" height="15" fill="#4a9300"/><rect x="1556" y="186" width="15" height="15" fill="#539300"/><rect x="1570" y="186" width="15" height="15" fill="#5c9300"/><rect x="1584" y="186" width="15" height="15" fill="#659300"/><rect x="1598" y="186" width="15" height="15" fill="#6d9300"/><rect x="1612" y="186" width="15" height="15" fill="#769300"/><rect x="1626" y="186" width="15" height="15" fill="#7e9300"/><rect x="1640" y="186" width="15" height="15" fill="#879300"/><rect x="1654" y="186" width="15" height="15" fill="#909300"/><rect x="1668" y="186" width="15" height="15" fill="#938f00"/><rect x="1682" y="186" width="15" height="15" fill="#938700"/><rect x="1696" y="186" width="15" height="15" fill="#938000"/><rect x="1710" y="186" width="15" height="15" fill="#937900"/><rect x="1724" y="186" width="15" height="15" fill="#937300"/><rect x="1738" y="186" width="15" height="15" fill="#936e00"/><rect x="1752" y="186" width="15" height="15" fill="#936900"/><rect x="1766" y="186" width="15" height="15" fill="#936400"/><rect x="1780" y="186" width="15" height="15" fill="#936000"/><rect x="1794" y="186" width="15" height="15" fill="#935c00"/><rect x="1808" y="186" width="15" height="15" fill="#935800"/><rect x="1822" y="186" width="15" height="15" fill="#935400"/><rect x="1150" y="200" width="15" height="15" fill="#009320"/><rect x="1164" y="200" width="15" height="15" fill="#00931d"/><rect x="1178" y="200" width="15" height="15" fill="#00931b"/><rect x="1192" y="200" width="15" height="15" fill="#009318"/><rect x="1206" y="200" width="15" height="15" fill="#009316"/><rect x="1220" y="200" width="15" height="15" fill="#009313"/><rect x="1234" y="200" width="15" height="15" fill="#00930f"/><rect x="1248" y="200" width="15" height="15" fill="#00930c"/><rect x="1262" y="200" width="15" height="15" fill="#009307"/><rect x="1276" y="200" width="15" height="15" fill="#009300"/><rect x="1290" y="200" width="15" height="15" fill="#009300"/><rect x="1304" y="200" width="15" height="15" fill="#009300"/><rect x="1318" y="200" width="15" height="15" fill="#009300"/><rect x="1332" y="200" width="15" height="15" fill="#009300"/><rect x="1346" y="200" width="15" height="15" fill="#009300"/><rect x="1360" y="200" width="15" height="15" fill="#009300"/><rect x="1374" y="200" width="15" height="15" fill="#009300"/><rect x="1388" y="200" width="15" height="15" fill="#009300"/><rect x="1402" y="200" width="15" height="15" fill="#009300"/><rect x="1416" y="200" width="15" height="15" fill="#009300"/><rect x="1430" y="200" width="15" height="15" fill="#009300"/><rect x="1444" y="200" width="15" height="15" fill="#009300"/><rect x="1458" y="200" width="15" height="15" fill="#0a9300"/><rect x="1472" y="200" width="15" height="15" fill="#1a9300"/><rect x="1486" y="200" width="15" height="15" fill="#279300"/><rect x="1500" y="200" width="15" height="15" fill="#329300"/><rect x="1514" y="200" width="15" height="15" fill="#3c9300"/><rect x="1528" y="200" width="15" height="15" fill="#469300"/><rect x="1542" y="200" width="15" height="15" fill="#4f9300"/><rect x="1556" y="200" width="15" height="15" fill="#599300"/><rect x="1570" y="200" width="15" height="15" fill="#629300"/><rect x="1584" y="200" width="15" height="15" fill="#6b9300"/><rect x="1598" y="200" width="15" height="15" fill="#739300"/><rect x="1612" y="200" width="15" height="15" fill="#7c9300"/><rect x="1626" y="200" width="15" height="15" fill="#859300"/><rect x="1640" y="200" width="15" height="15" fill="#8e9300"/><rect x="1654" y="200" width="15" height="15" fill="#939000"/><rect x="1668" y="200" width="15" height="15" fill="#938800"/><rect x="1682" y="200" width="15" height="15" fill="#938000"/><rect x="1696" y="200" width="15" height="15" fill="#937a00"/><rect x="1710" y="200" width="15" height="15" fill="#937300"/><rect x="1724" y="200" width="15" height="15" fill="#936e00"/><rect x="1738" y="200" width="15" height="15" fill="#936900"/><rect x="1752" y="200" width="15" height="15" fill="#936400"/><rect x="1766" y="200" width="15" height="15" fill="#935f00"/><rect x="1780" y="200" width="15" height="15" fill="#935b00"/><rect x="1794" y="200" width="15" height="15" fill="#935700"/><rect x="1808" y="200" width="15" height="15" fill="#935300"/><rect x="1822" y="200" width="15" height="15" fill="#935000"/><rect x="1150" y="214" width="15" height="15" fill="#009324"/><rect x="1164" y="214" width="15" height="15" fill="#009322"/><rect x="1178" y="214" width="15" height="15" fill="#009320"/><rect x="1192" y="214" width="15" height="15" fill="#00931e"/><rect x="1206" y="214" width="15" height="15" fill="#00931b"/><rect x="1220" y="214" width="15" height="15" fill="#009319"/><rect x="1234" y="214" width="15" height="15" fill="#009316"/><rect x="1248" y="214" width="15" height="15" fill="#009313"/><rect x="1262" y="214" width="15" height="15" fill="#00930f"/><rect x="1276" y="214" width="15" height="15" fill="#00930b"/><rect x="1290" y="214" width="15" height="15" fill="#009306"/><rect x="1304" y="214" width="15" height="15" fill="#009300"/><rect x="1318" y="214" width="15" height="15" fill="#009300"/><rect x="1332" y="214" width="15" height="15" fill="#009300"/><rect x="1346" y="214" width="15" height="15" fill="#009300"/><rect x="1360" y="214" width="15" height="15" fill="#009300"/><rect x="1374" y="214" width="15" height="15" fill="#009300"/><rect x="1388" y="214" width="15" height="15" fill="#009300"/><rect x="1402" y="214" width="15" height="15" fill="#009300"/><rect x="1416" y="214" width="15" height="15" fill="#009300"/><rect x="1430" y="214" width="15" height="15" fill="#009300"/><rect x="1444" y="214" width="15" height="15" fill="#009300"/><rect x="1458" y="214" width="15" height="15" fill="#119300"/><rect x="1472" y="214" width="15" height="15" fill="#209300"/><rect x="1486" y="214" width="15" height="15" fill="#2c9300"/><rect x="1500" y="214" width="15" height="15" fill="#379300"/><rect x="1514" y="214" width="15" height="15" fill="#429300"/><rect x="1528" y="214" width="15" height="15" fill="#4b9300"/><rect x="1542" y="214" width="15" height="15" fill="#559300"/><rect x="1556" y="214" width="15" height="15" fill="#5e9300"/><rect x="1570" y="214" width="15" height="15" fill="#689300"/><rect x="1584" y="214" width="15" height="15" fill="#719300"/><rect x="1598" y="214" width="15" height="15" fill="#7a9300"/><rect x="1612" y="214" width="15" height="15" fill="#839300"/><rect x="1626" y="214" width="15" height="15" fill="#8d9300"/><rect x="1640" y="214" width="15" height="15" fill="#939100"/><rect x="1654" y="214" width="15" height="15" fill="#938800"/><rect x="1668" y="214" width="15" height="15" fill="#938100"/><rect x="1682" y="214" width="15" height="15" fill="#937a00"/><rect x="1696" y="214" width="15" height="15" fill="#937300"/><rect x="1710" y="214" width="15" height="15" fill="#936e00"/><rect x="1724" y="214" width="15" height="15" fill="#936800"/><rect x="1738" y="214" width="15" height="15" fill="#936300"/><rect x="1752" y="214" width="15" height="15" fill="#935f00"/><rect x="1766" y="214" width="15" height="15" fill="#935a00"/><rect x="1780" y="214" width="15" height="15" fill="#935600"/><rect x="1794" y="214" width="15" height="15" fill="#935300"/><rect x="1808" y="214" width="15" height="15" fill="#934f00"/><rect x="1822" y="214" width="15" height="15" fill="#934c00"/><rect x="1150" y="228" width="15" height="15" fill="#009329"/><rect x="1164" y="228" width="15" height="15" fill="#009327"/><rect x="1178" y="228" width="15" height="15" fill="#009325"/><rect x="1192" y="228" width="15" height="15" fill="#009323"/><rect x="1206" y="228" width="15" height="15" fill="#009321"/><rect x="1220" y="228" width="15" height="15" fill="#00931e"/><rect x="1234" y="228" width="15" height="15" fill="#00931c"/><rect x="1248" y="228" width="15" height="15" fill="#009319"/><rect x="1262" y="228" width="15" height="15" fill="#009316"/><rect x="1276" y="228" width="15" height="15" fill="#009313"/><rect x="1290" y="228" width="15" height="15" fill="#00930f"/><rect x="1304" y="228" width="15" height="15" fill="#00930a"/><rect x="1318" y="228" width="15" height="15" fill="#009304"/><rect x="1332" y="228" width="15" height="15" fill="#009300"/><rect x="1346" y="228" width="15" height="15" fill="#009300"/><rect x="1360" y="228" width="15" height="15" fill="#009300"/><rect x="1374" y="228" width="15" height="15" fill="#009300"/><rect x="1388" y="228" width="15" height="15" fill="#009300"/><rect x="1402" y="228" width="15" height="15" fill="#009300"/><rect x="1416" y="228" width="15" height="15" fill="#009300"/><rect x="1430" y="228" width="15" height="15" fill="#009300"/><rect x="1444" y="228" width="15" height="15" fill="#059300"/><rect x="1458" y="228" width="15" height="15" fill="#189300"/><rect x="1472" y="228" width="15" height="15" fill="#269300"/><rect x="1486" y="228" width="15" height="15" fill="#329300"/><rect x="1500" y="228" width="15" height="15" fill="#3d9300"/><rect x="1514" y="228" width="15" height="15" fill="#479300"/><rect x="1528" y="228" width="15" height="15" fill="#519300"/><rect x="1542" y="228" width="15" height="15" fill="#5b9300"/><rect x="1556" y="228" width="15" height="15" fill="#659300"/><rect x="1570" y="228" width="15" height="15" fill="#6e9300"/><rect x="1584" y="228" width="15" height="15" fill="#789300"/><rect x="1598" y="228" width="15" height="15" fill="#819300"/><rect x="1612" y="228" width="15" height="15" fill="#8b9300"/><rect x="1626" y="228" width="15" height="15" fill="#939200"/><rect x="1640" y="228" width="15" height="15" fill="#938900"/><rect x="1654" y="228" width="15" height="15" fill="#938100"/><rect x="1668" y="228" width="15" height="15" fill="#937a00"/><rect x="1682" y="228" width="15" height="15" fill="#937400"/><rect x="1696" y="228" width="15" height="15" fill="#936e00"/><rect x="1710" y="228" width="15" height="15" fill="#936800"/><rect x="1724" y="228" width="15" height="15" fill="#936300"/><rect x="1738" y="228" width="15" height="15" fill="#935e00"/><rect x="1752" y="228" width="15" height="15" fill="#935a00"/><rect x="1766" y="228" width="15" height="15" fill="#935600"/><rect x="1780" y="228" width="15" height="15" fill="#935200"/><rect x="1794" y="228" width="15" height="15" fill="#934e00"/><rect x="1808" y="228" width="15" height="15" fill="#934b00"/><rect x="1822" y="228" width="15" height="15" fill="#934700"/><rect x="1150" y="242" width="15" height="15" fill="#00932e"/><rect x="1164" y="242" width="15" height="15" fill="#00932c"/><rect x="1178" y="242" width="15" height="15" fill="#00932a"/><rect x="1192" y="242" width="15" height="15" fill="#009328"/><rect x="1206" y="242" width="15" height="15" fill="#009326"/><rect x="1220" y="242" width="15" height="15" fill="#009324"/><rect x="1234" y="242" width="15" height="15" fill="#009321"/><rect x="1248" y="242" width="15" height="15" fill="#00931f"/><rect x="1262" y="242" width="15" height="15" fill="#00931c"/><rect x="1276" y="242" width="15" height="15" fill="#009319"/><rect x="1290" y="242" width="15" height="15" fill="#009316"/><rect x="1304" y="242" width="15" height="15" fill="#009312"/><rect x="1318" y="242" width="15" height="15" fill="#00930e"/><rect x="1332" y="242" width="15" height="15" fill="#009309"/><rect x="1346" y="242" width="15" height="15" fill="#009302"/><rect x="1360" y="242" width="15" height="15" fill="#009300"/><rect x="1374" y="242" width="15" height="15" fill="#009300"/><rect x="1388" y="242" width="15" height="15" fill="#009300"/><rect x="1402" y="242" width="15" height="15" fill="#009300"/><rect x="1416" y="242" width="15" height="15" fill="#009300"/><rect x="1430" y="242" width="15" height="15" fill="#009300"/><rect x="1444" y="242" width="15" height="15" fill="#0e9300"/><rect x="1458" y="242" width="15" height="15" fill="#1e9300"/><rect x="1472" y="242" width="15" height="15" fill="#2c9300"/><rect x="1486" y="242" width="15" height="15" fill="#379300"/><rect x="1500" y="242" width="15" height="15" fill="#439300"/><rect x="1514" y="242" width="15" height="15" fill="#4d9300"/><rect x="1528" y="242" width="15" height="15" fill="#579300"/><rect x="1542" y="242" width="15" height="15" fill="#619300"/><rect x="1556" y="242" width="15" height="15" fill="#6b9300"/><rect x="1570" y="242" width="15" height="15" fill="#759300"/><rect x="1584" y="242" width="15" height="15" fill="#7f9300"/><rect x="1598" y="242" width="15" height="15" fill="#899300"/><rect x="1612" y="242" width="15" height="15" fill="#939300"/><rect x="1626" y="242" width="15" height="15" fill="#938a00"/><rect x="1640" y="242" width="15" height="15" fill="#938200"/><rect x="1654" y="242" width="15" height="15" fill="#937a00"/><rect x="1668" y="242" width="15" height="15" fill="#937400"/><rect x="1682" y="242" width="15" height="15" fill="#936d00"/><rect x="1696" y="242" width="15" height="15" fill="#936800"/><rect x="1710" y="242" width="15" height="15" fill="#936200"/><rect x="1724" y="242" width="15" height="15" fill="#935e00"/><rect x="1738" y="242" width="15" height="15" fill="#935900"/><rect x="1752" y="242" width="15" height="15" fill="#935500"/><rect x="1766" y="242" width="15" height="15" fill="#935100"/><rect x="1780" y="242" width="15" height="15" fill="#934d00"/><rect x="1794" y="242" width="15" height="15" fill="#934a00"/><rect x="1808" y="242" width="15" height="15" fill="#934600"/><rect x="1822" y="242" width="15" height="15" fill="#934300"/><rect x="1150" y="256" width="15" height="15" fill="#009333"/><rect x="1164" y="256" width="15" height="15" fill="#009331"/><rect x="1178" y="256" width="15" height="15" fill="#00932f"/><rect x="1192" y="256" width="15" height="15" fill="#00932d"/><rect x="1206" y="256" width="15" height="15" fill="#00932b"/><rect x="1220" y="256" width="15" height="15" fill="#009329"/><rect x="1234" y="256" width="15" height="15" fill="#009327"/><rect x="1248" y="256" width="15" height="15" fill="#009325"/><rect x="1262" y="256" width="15" height="15" fill="#009322"/><rect x="1276" y="256" width="15" height="15" fill="#009320"/><rect x="1290" y="256" width="15" height="15" fill="#00931d"/><rect x="1304" y="256" width="15" height="15" fill="#00931a"/><rect x="1318" y="256" width="15" height="15" fill="#009316"/><rect x="1332" y="256" width="15" height="15" fill="#009312"/><rect x="1346" y="256" width="15" height="15" fill="#00930e"/><rect x="1360" y="256" width="15" height="15" fill="#009308"/><rect x="1374" y="256" width="15" height="15" fill="#009300"/><rect x="1388" y="256" width="15" height="15" fill="#009300"/><rect x="1402" y="256" width="15" height="15" fill="#009300"/><rect x="1416" y="256" width="15" height="15" fill="#009300"/><rect x="1430" y="256" width="15" height="15" fill="#009300"/><rect x="1444" y="256" width="15" height="15" fill="#169300"/><rect x="1458" y="256" width="15" height="15" fill="#259300"/><rect x="1472" y="256" width="15" height="15" fill="#329300"/><rect x="1486" y="256" width="15" height="15" fill="#3d9300"/><rect x="1500" y="256" width="15" height="15" fill="#499300"/><rect x="1514" y="256" width="15" height="15" fill="#539300"/><rect x="1528" y="256" width="15" height="15" fill="#5e9300"/><rect x="1542" y="256" width="15" height="15" fill="#689300"/><rect x="1556" y="256" width="15" height="15" fill="#729300"/><rect x="1570" y="256" width="15" height="15" fill="#7d9300"/><rect x="1584" y="256" width="15" height="15" fill="#879300"/><rect x="1598" y="256" width="15" height="15" fill="#919300"/><rect x="1612" y="256" width="15" height="15" fill="#938c00"/><rect x="1626" y="256" width="15" height="15" fill="#938300"/><rect x="1640" y="256" width="15" height="15" fill="#937b00"/><rect x="1654" y="256" width="15" height="15" fill="#937400"/><rect x="1668" y="256" width="15" height="15" fill="#936d00"/><rect x="1682" y="256" width="15" height="15" fill="#936700"/><rect x="1696" y="256" width="15" height="15" fill="#936200"/><rect x="1710" y="256" width="15" height="15" fill="#935d00"/><rect x="1724" y="256" width="15" height="15" fill="#935800"/><rect x="1738" y="256" width="15" height="15" fill="#935400"/><rect x="1752" y="256" width="15" height="15" fill="#935000"/><rect x="1766" y="256" width="15" height="15" fill="#934c00"/><rect x="1780" y="256" width="15" height="15" fill="#934900"/><rect x="1794" y="256" width="15" height="15" fill="#934500"/><rect x="1808" y="256" width="15" height="15" fill="#934200"/><rect x="1822" y="256" width="15" height="15" fill="#933f00"/><rect x="1150" y="270" width="15" height="15" fill="#009338"/><rect x="1164" y="270" width="15" height="15" fill="#009336"/><rect x="1178" y="270" width="15" height="15" fill="#009334"/><rect x="1192" y="270" width="15" height="15" fill="#009333"/><rect x="1206" y="270" width="15" height="15" fill="#009331"/><rect x="1220" y="270" width="15" height="15" fill="#00932f"/><rect x="1234" y="270" width="15" height="15" fill="#00932d"/><rect x="1248" y="270" width="15" height="15" fill="#00932b"/><rect x="1262" y="270" width="15" height="15" fill="#009328"/><rect x="1276" y="270" width="15" height="15" fill="#009326"/><rect x="1290" y="270" width="15" height="15" fill="#009323"/><rect x="1304" y="270" width="15" height="15" fill="#009320"/><rect x="1318" y="270" width="15" height="15" fill="#00931d"/><rect x="1332" y="270" width="15" height="15" fill="#00931a"/><rect x="1346" y="270" width="15" height="15" fill="#009316"/><rect x="1360" y="270" width="15" height="15" fill="#009312"/><rect x="1374" y="270" width="15" height="15" fill="#00930d"/><rect x="1388" y="270" width="15" height="15" fill="#009307"/><rect x="1402" y="270" width="15" height="15" fill="#009300"/><rect x="1416" y="270" width="15" height="15" fill="#009300"/><rect x="1430" y="270" width="15" height="15" fill="#0a9300"/><rect x="1444" y="270" width="15" height="15" fill="#1d9300"/><rect x="1458" y="270" width="15" height="15" fill="#2b9300"/><rect x="1472" y="270" width="15" height="15" fill="#389300"/><rect x="1486" y="270" width="15" height="15" fill="#449300"/><rect x="1500" y="270" width="15" height="15" fill="#4f9300"/><rect x="1514" y="270" width="15" height="15" fill="#5a9300"/><rect x="1528" y="270" width="15" height="15" fill="#659300"/><rect x="1542" y="270" width="15" height="15" fill="#6f9300"/><rect x="1556" y="270" width="15" height="15" fill="#7a9300"/><rect x="1570" y="270" width="15" height="15" fill="#859300"/><rect x="1584" y="270" width="15" height="15" fill="#8f9300"/><rect x="1598" y="270" width="15" height="15" fill="#938d00"/><rect x="1612" y="270" width="15" height="15" fill="#938400"/><rect x="1626" y="270" width="15" height="15" fill="#937b00"/><rect x="1640" y="270" width="15" height="15" fill="#937400"/><rect x="1654" y="270" width="15" height="15" fill="#936d00"/><rect x="1668" y="270" width="15" height="15" fill="#936700"/><rect x="1682" y="270" width="15" height="15" fill="#936100"/><rect x="1696" y="270" width="15" height="15" fill="#935c00"/><rect x="1710" y="270" width="15" height="15" fill="#935700"/><rect x="1724" y="270" width="15" height="15" fill="#935300"/><rect x="1738" y="270" width="15" height="15" fill="#934f00"/><rect x="1752" y="270" width="15" height="15" fill="#934b00"/><rect x="1766" y="270" width="15" height="15" fill="#934700"/><rect x="1780" y="270" width="15" height="15" fill="#934400"/><rect x="1794" y="270" width="15" height="15" fill="#934100"/><rect x="1808" y="270" width="15" height="15" fill="#933e00"/><rect x="1822" y="270" width="15" height="15" fill="#933b00"/><rect x="1150" y="284" width="15" height="15" fill="#00933d"/><rect x="1164" y="284" width="15" height="15" fill="#00933b"/><rect x="1178" y="284" width="15" height="15" fill="#00933a"/><rect x="1192" y="284" width="15" height="15" fill="#009338"/><rect x="1206" y="284" width="15" height="15" fill="#009336"/><rect x="1220" y="284" width="15" height="15" fill="#009334"/><rect x="1234" y="284" width="15" height="15" fill="#009332"/><rect x="1248" y="284" width="15" height="15" fill="#009330"/><rect x="1262" y="284" width="15" height="15" fill="#00932e"/><rect x="1276" y="284" width="15" height="15" fill="#00932c"/><rect x="1290" y="284" width="15" height="15" fill="#009329"/><rect x="1304" y="284" width="15" height="15" fill="#009327"/><rect x="1318" y="284" width="15" height="15" fill="#009324"/><rect x="1332" y="284" width="15" height="15" fill="#009321"/><rect x="1346" y="284" width="15" height="15" fill="#00931e"/><rect x="1360" y="284" width="15" height="15" fill="#00931a"/><rect x="1374" y="284" width="15" height="15" fill="#009316"/><rect x="1388" y="284" width="15" height="15" fill="#009312"/><rect x="1402" y="284" width="15" height="15" fill="#00930d"/><rect x="1416" y="284" width="15" height="15" fill="#009305"/><rect x="1430" y="284" width="15" height="15" fill="#139300"/><rect x="1444" y="284" width="15" height="15" fill="#239300"/><rect x="1458" y="284" width="15" height="15" fill="#329300"/><rect x="1472" y="284" width="15" height="15" fill="#3e9300"/><rect x="1486" y="284" width="15" height="15" fill="#4a9300"/><rect x="1500" y="284" width="15" height="15" fill="#569300"/><rect x="1514" y="284" width="15" height="15" fill="#619300"/><rect x="1528" y="284" width="15" height="15" fill="#6c9300"/><rect x="1542" y="284" width="15" height="15" fill="#779300"/><rect x="1556" y="284" width="15" height="15" fill="#829300"/><rect x="1570" y="284" width="15" height="15" fill="#8e9300"/><rect x="1584" y="284" width="15" height="15" fill="#938e00"/><rect x="1598" y="284" width="15" height="15" fill="#938400"/><rect x="1612" y="284" width="15" height="15" fill="#937c00"/><rect x="1626" y="284" width="15" height="15" fill="#937400"/><rect x="1640" y="284" width="15" height="15" fill="#936d00"/><rect x="1654" y="284" width="15" height="15" fill="#936700"/><rect x="1668" y="284" width="15" height="15" fill="#936100"/><rect x="1682" y="284" width="15" height="15" fill="#935c00"/><rect x="1696" y="284" width="15" height="15" fill="#935700"/><rect x="1710" y="284" width="15" height="15" fill="#935200"/><rect x="1724" y="284" width="15" height="15" fill="#934e00"/><rect x="1738" y="284" width="15" height="15" fill="#934a00"/><rect x="1752" y="284" width="15" height="15" fill="#934600"/><rect x="1766" y="284" width="15" height="15" fill="#934300"/><rect x="1780" y="284" width="15" height="15" fill="#933f00"/><rect x="1794" y="284" width="15" height="15" fill="#933c00"/><rect x="1808" y="284" width="15" height="15" fill="#933900"/><rect x="1822" y="284" width="15" height="15" fill="#933600"/><rect x="1150" y="298" width="15" height="15" fill="#009342"/><rect x="1164" y="298" width="15" height="15" fill="#009341"/><rect x="1178" y="298" width="15" height="15" fill="#00933f"/><rect x="1192" y="298" width="15" height="15" fill="#00933e"/><rect x="1206" y="298" width="15" height="15" fill="#00933c"/><rect x="1220" y="298" width="15" height="15" fill="#00933a"/><rect x="1234" y="298" width="15" height="15" fill="#009338"/><rect x="1248" y="298" width="15" height="15" fill="#009336"/><rect x="1262" y="298" width="15" height="15" fill="#009334"/><rect x="1276" y="298" width="15" height="15" fill="#009332"/><rect x="1290" y="298" width="15" height="15" fill="#009330"/><rect x="1304" y="298" width="15" height="15" fill="#00932d"/><rect x="1318" y="298" width="15" height="15" fill="#00932b"/><rect x="1332" y="298" width="15" height="15" fill="#009328"/><rect x="1346" y="298" width="15" height="15" fill="#009325"/><rect x="1360" y="298" width="15" height="15" fill="#009322"/><rect x="1374" y="298" width="15" height="15" fill="#00931f"/><rect x="1388" y="298" width="15" height="15" fill="#00931b"/><rect x="1402" y="298" width="15" height="15" fill="#009316"/><rect x="1416" y="298" width="15" height="15" fill="#029312"/><rect x="1430" y="298" width="15" height="15" fill="#1a930c"/><rect x="1444" y="298" width="15" height="15" fill="#2a9303"/><rect x="1458" y="298" width="15" height="15" fill="#389300"/><rect x="1472" y="298" width="15" height="15" fill="#459300"/><rect x="1486" y="298" width="15" height="15" fill="#519300"/><rect x="1500" y="298" width="15" height="15" fill="#5d9300"/><rect x="1514" y="298" width="15" height="15" fill="#699300"/><rect x="1528" y="298" width="15" height="15" fill="#749300"/><rect x="1542" y="298" width="15" height="15" fill="#809300"/><rect x="1556" y="298" width="15" height="15" fill="#8b9300"/><rect x="1570" y="298" width="15" height="15" fill="#939000"/><rect x="1584" y="298" width="15" height="15" fill="#938500"/><rect x="1598" y="298" width="15" height="15" fill="#937c00"/><rect x="1612" y="298" width="15" height="15" fill="#937400"/><rect x="1626" y="298" width="15" height="15" fill="#936d00"/><rect x="1640" y="298" width="15" height="15" fill="#936600"/><rect x="1654" y="298" width="15" height="15" fill="#936000"/><rect x="1668" y="298" width="15" height="15" fill="#935b00"/><rect x="1682" y="298" width="15" height="15" fill="#935600"/><rect x="1696" y="298" width="15" height="15" fill="#935100"/><rect x="1710" y="298" width="15" height="15" fill="#934d00"/><rect x="1724" y="298" width="15" height="15" fill="#934900"/><rect x="1738" y="298" width="15" height="15" fill="#934500"/><rect x="1752" y="298" width="15" height="15" fill="#934100"/><rect x="1766" y="298" width="15" height="15" fill="#933e00"/><rect x="1780" y="298" width="15" height="15" fill="#933b00"/><rect x="1794" y="298" width="15" height="15" fill="#933800"/><rect x="1808" y="298" width="15" height="15" fill="#933500"/><rect x="1822" y="298" width="15" height="15" fill="#933200"/><rect x="1150" y="312" width="15" height="15" fill="#009348"/><rect x="1164" y="312" width="15" height="15" fill="#009346"/><rect x="1178" y="312" width="15" height="15" fill="#009345"/><rect x="1192" y="312" width="15" height="15" fill="#009343"/><rect x="1206" y="312" width="15" height="15" fill="#009342"/><rect x="1220" y="312" width="15" height="15" fill="#009340"/><rect x="1234" y="312" width="15" height="15" fill="#00933e"/><rect x="1248" y="312" width="15" height="15" fill="#00933c"/><rect x="1262" y="312" width="15" height="15" fill="#00933a"/><rect x="1276" y="312" width="15" height="15" fill="#009338"/><rect x="1290" y="312" width="15" height="15" fill="#009336"/><rect x="1304" y="312" width="15" height="15" fill="#009334"/><rect x="1318" y="312" width="15" height="15" fill="#009332"/><rect x="1332" y="312" width="15" height="15" fill="#00932f"/><rect x="1346" y="312" width="15" height="15" fill="#00932c"/><rect x="1360" y="312" width="15" height="15" fill="#00932a"/><rect x="1374" y="312" width="15" height="15" fill="#009326"/><rect x="1388" y="312" width="15" height="15" fill="#009323"/><rect x="1402" y="312" width="15" height="15" fill="#00931f"/><rect x="1416" y="312" width="15" height="15" fill="#0f931b"/><rect x="1430" y="312" width="15" height="15" fill="#229317"/><rect x="1444" y="312" width="15" height="15" fill="#319311"/><rect x="1458" y="312" width="15" height="15" fill="#3f930b"/><rect x="1472" y="312" width="15" height="15" fill="#4c9300"/><rect x="1486" y="312" width="15" height="15" fill="#599300"/><rect x="1500" y="312" width="15" height="15" fill="#659300"/><rect x="1514" y="312" width="15" height="15" fill="#719300"/><rect x="1528" y="312" width="15" height="15" fill="#7d9300"/><rect x="1542" y="312" width="15" height="15" fill="#899300"/><rect x="1556" y="312" width="15" height="15" fill="#939100"/><rect x="1570" y="312" width="15" height="15" fill="#938600"/><rect x="1584" y="312" width="15" height="15" fill="#937d00"/><rect x="1598" y="312" width="15" height="15" fill="#937400"/><rect x="1612" y="312" width="15" height="15" fill="#936d00"/><rect x="1626" y="312" width="15" height="15" fill="#936600"/><rect x="1640" y="312" width="15" height="15" fill="#936000"/><rect x="1654" y="312" width="15" height="15" fill="#935a00"/><rect x="1668" y="312" width="15" height="15" fill="#935500"/><rect x="1682" y="312" width="15" height="15" fill="#935000"/><rect x="1696" y="312" width="15" height="15" fill="#934b00"/><rect x="1710" y="312" width="15" height="15" fill="#934700"/><rect x="1724" y="312" width="15" height="15" fill="#934300"/><rect x="1738" y="312" width="15" height="15" fill="#934000"/><rect x="1752" y="312" width="15" height="15" fill="#933c00"/><rect x="1766" y="312" width="15" height="15" fill="#933900"/><rect x="1780" y="312" width="15" height="15" fill="#933600"/><rect x="1794" y="312" width="15" height="15" fill="#933300"/><rect x="1808" y="312" width="15" height="15" fill="#933000"/><rect x="1822" y="312" width="15" height="15" fill="#932d00"/><rect x="1150" y="326" width="15" height="15" fill="#00934d"/><rect x="1164" y="326" width="15" height="15" fill="#00934c"/><rect x="1178" y="326" width="15" height="15" fill="#00934a"/><rect x="1192" y="326" width="15" height="15" fill="#009349"/><rect x="1206" y="326" width="15" height="15" fill="#009348"/><rect x="1220" y="326" width="15" height="15" fill="#009346"/><rect x="1234" y="326" width="15" height="15" fill="#009344"/><rect x="1248" y="326" width="15" height="15" fill="#009343"/><rect x="1262" y="326" width="15" height="15" fill="#009341"/><rect x="1276" y="326" width="15" height="15" fill="#00933f"/><rect x="1290" y="326" width="15" height="15" fill="#00933d"/><rect x="1304" y="326" width="15" height="15" fill="#00933b"/><rect x="1318" y="326" width="15" height="15" fill="#009339"/><rect x="1332" y="326" width="15" height="15" fill="#009336"/><rect x="1346" y="326" width="15" height="15" fill="#009334"/><rect x="1360" y="326" width="15" height="15" fill="#009331"/><rect x="1374" y="326" width="15" height="15" fill="#00932e"/><rect x="1388" y="326" width="15" height="15" fill="#00932b"/><rect x="1402" y="326" width="15" height="15" fill="#009328"/><rect x="1416" y="326" width="15" height="15" fill="#189324"/><rect x="1430" y="326" width="15" height="15" fill="#2a9320"/><rect x="1444" y="326" width="15" height="15" fill="#39931c"/><rect x="1458" y="326" width="15" height="15" fill="#479317"/><rect x="1472" y="326" width="15" height="15" fill="#549311"/><rect x="1486" y="326" width="15" height="15" fill="#619309"/><rect x="1500" y="326" width="15" height="15" fill="#6e9300"/><rect x="1514" y="326" width="15" height="15" fill="#7a9300"/><rect x="1528" y="326" width="15" height="15" fill="#879300"/><rect x="1542" y="326" width="15" height="15" fill="#939300"/><rect x="1556" y="326" width="15" height="15" fill="#938800"/><rect x="1570" y="326" width="15" height="15" fill="#937d00"/><rect x="1584" y="326" width="15" height="15" fill="#937400"/><rect x="1598" y="326" width="15" height="15" fill="#936c00"/><rect x="1612" y="326" width="15" height="15" fill="#936500"/><rect x="1626" y="326" width="15" height="15" fill="#935f00"/><rect x="1640" y="326" width="15" height="15" fill="#935900"/><rect x="1654" y="326" width="15" height="15" fill="#935400"/><rect x="1668" y="326" width="15" height="15" fill="#934f00"/><rect x="1682" y="326" width="15" height="15" fill="#934a00"/><rect x="1696" y="326" width="15" height="15" fill="#934600"/><rect x="1710" y="326" width="15" height="15" fill="#934200"/><rect x="1724" y="326" width="15" height="15" fill="#933e00"/><rect x="1738" y="326" width="15" height="15" fill="#933b00"/><rect x="1752" y="326" width="15" height="15" fill="#933700"/><rect x="1766" y="326" width="15" height="15" fill="#933400"/><rect x="1780" y="326" width="15" height="15" fill="#933100"/><rect x="1794" y="326" width="15" height="15" fill="#932e00"/><rect x="1808" y="326" width="15" height="15" fill="#932b00"/><rect x="1822" y="326" width="15" height="15" fill="#932900"/><rect x="1150" y="340" width="15" height="15" fill="#009353"/><rect x="1164" y="340" width="15" height="15" fill="#009352"/><rect x="1178" y="340" width="15" height="15" fill="#009350"/><rect x="1192" y="340" width="15" height="15" fill="#00934f"/><rect x="1206" y="340" width="15" height="15" fill="#00934e"/><rect x="1220" y="340" width="15" height="15" fill="#00934c"/><rect x="1234" y="340" width="15" height="15" fill="#00934b"/><rect x="1248" y="340" width="15" height="15" fill="#009349"/><rect x="1262" y="340" width="15" height="15" fill="#009348"/><rect x="1276" y="340" width="15" height="15" fill="#009346"/><rect x="1290" y="340" width="15" height="15" fill="#009344"/><rect x="1304" y="340" width="15" height="15" fill="#009342"/><rect x="1318" y="340" width="15" height="15" fill="#009340"/><rect x="1332" y="340" width="15" height="15" fill="#00933e"/><rect x="1346" y="340" width="15" height="15" fill="#00933b"/><rect x="1360" y="340" width="15" height="15" fill="#009339"/><rect x="1374" y="340" width="15" height="15" fill="#009336"/><rect x="1388" y="340" width="15" height="15" fill="#009334"/><rect x="1402" y="340" width="15" height="15" fill="#099331"/><rect x="1416" y="340" width="15" height="15" fill="#20932d"/><rect x="1430" y="340" width="15" height="15" fill="#31932a"/><rect x="1444" y="340" width="15" height="15" fill="#409326"/><rect x="1458" y="340" width="15" height="15" fill="#4f9322"/><rect x="1472" y="340" width="15" height="15" fill="#5c931d"/><rect x="1486" y="340" width="15" height="15" fill="#6a9317"/><rect x="1500" y="340" width="15" height="15" fill="#779310"/><rect x="1514" y="340" width="15" height="15" fill="#849307"/><rect x="1528" y="340" width="15" height="15" fill="#919300"/><rect x="1542" y="340" width="15" height="15" fill="#938900"/><rect x="1556" y="340" width="15" height="15" fill="#937e00"/><rect x="1570" y="340" width="15" height="15" fill="#937500"/><rect x="1584" y="340" width="15" height="15" fill="#936c00"/><rect x="1598" y="340" width="15" height="15" fill="#936500"/><rect x="1612" y="340" width="15" height="15" fill="#935e00"/><rect x="1626" y="340" width="15" height="15" fill="#935800"/><rect x="1640" y="340" width="15" height="15" fill="#935300"/><rect x="1654" y="340" width="15" height="15" fill="#934d00"/><rect x="1668" y="340" width="15" height="15" fill="#934900"/><rect x="1682" y="340" width="15" height="15" fill="#934400"/><rect x="1696" y="340" width="15" height="15" fill="#934000"/><rect x="1710" y="340" width="15" height="15" fill="#933d00"/><rect x="1724" y="340" width="15" height="15" fill="#933900"/><rect x="1738" y="340" width="15" height="15" fill="#933600"/><rect x="1752" y="340" width="15" height="15" fill="#933200"/><rect x="1766" y="340" width="15" height="15" fill="#932f00"/><rect x="1780" y="340" width="15" height="15" fill="#932c00"/><rect x="1794" y="340" width="15" height="15" fill="#932900"/><rect x="1808" y="340" width="15" height="15" fill="#932700"/><rect x="1822" y="340" width="15" height="15" fill="#932400"/><rect x="1150" y="354" width="15" height="15" fill="#009359"/><rect x="1164" y="354" width="15" height="15" fill="#009358"/><rect x="1178" y="354" width="15" height="15" fill="#009357"/><rect x="1192" y="354" width="15" height="15" fill="#009356"/><rect x="1206" y="354" width="15" height="15" fill="#009354"/><rect x="1220" y="354" width="15" height="15" fill="#009353"/><rect x="1234" y="354" width="15" height="15" fill="#009352"/><rect x="1248" y="354" width="15" height="15" fill="#009350"/><rect x="1262" y="354" width="15" height="15" fill="#00934f"/><rect x="1276" y="354" width="15" height="15" fill="#00934d"/><rect x="1290" y="354" width="15" height="15" fill="#00934b"/><rect x="1304" y="354" width="15" height="15" fill="#009349"/><rect x="1318" y="354" width="15" height="15" fill="#009348"/><rect x="1332" y="354" width="15" height="15" fill="#009346"/><rect x="1346" y="354" width="15" height="15" fill="#009343"/><rect x="1360" y="354" width="15" height="15" fill="#009341"/><rect x="1374" y="354" width="15" height="15" fill="#00933f"/><rect x="1388" y="354" width="15" height="15" fill="#00933c"/><rect x="1402" y="354" width="15" height="15" fill="#149339"/><rect x="1416" y="354" width="15" height="15" fill="#289336"/><rect x="1430" y="354" width="15" height="15" fill="#399333"/><rect x="1444" y="354" width="15" height="15" fill="#499330"/><rect x="1458" y="354" width="15" height="15" fill="#57932c"/><rect x="1472" y="354" width="15" height="15" fill="#659328"/><rect x="1486" y="354" width="15" height="15" fill="#739323"/><rect x="1500" y="354" width="15" height="15" fill="#81931e"/><rect x="1514" y="354" width="15" height="15" fill="#8f9318"/><rect x="1528" y="354" width="15" height="15" fill="#938a0f"/><rect x="1542" y="354" width="15" height="15" fill="#937f04"/><rect x="1556" y="354" width="15" height="15" fill="#937500"/><rect x="1570" y="354" width="15" height="15" fill="#936c00"/><rect x="1584" y="354" width="15" height="15" fill="#936400"/><rect x="1598" y="354" width="15" height="15" fill="#935d00"/><rect x="1612" y="354" width="15" height="15" fill="#935700"/><rect x="1626" y="354" width="15" height="15" fill="#935100"/><rect x="1640" y="354" width="15" height="15" fill="#934c00"/><rect x="1654" y="354" width="15" height="15" fill="#934700"/><rect x="1668" y="354" width="15" height="15" fill="#934300"/><rect x="1682" y="354" width="15" height="15" fill="#933f00"/><rect x="1696" y="354" width="15" height="15" fill="#933b00"/><rect x="1710" y="354" width="15" height="15" fill="#933700"/><rect x="1724" y="354" width="15" height="15" fill="#933400"/><rect x="1738" y="354" width="15" height="15" fill="#933000"/><rect x="1752" y="354" width="15" height="15" fill="#932d00"/><rect x="1766" y="354" width="15" height="15" fill="#932a00"/><rect x="1780" y="354" width="15" height="15" fill="#932700"/><rect x="1794" y="354" width="15" height="15" fill="#932400"/><rect x="1808" y="354" width="15" height="15" fill="#932200"/><rect x="1822" y="354" width="15" height="15" fill="#931f00"/><rect x="1150" y="368" width="15" height="15" fill="#009360"/><rect x="1164" y="368" width="15" height="15" fill="#00935f"/><rect x="1178" y="368" width="15" height="15" fill="#00935d"/><rect x="1192" y="368" width="15" height="15" fill="#00935c"/><rect x="1206" y="368" width="15" height="15" fill="#00935b"/><rect x="1220" y="368" width="15" height="15" fill="#00935a"/><rect x="1234" y="368" width="15" height="15" fill="#009359"/><rect x="1248" y="368" width="15" height="15" fill="#009357"/><rect x="1262" y="368" width="15" height="15" fill="#009356"/><rect x="1276" y="368" width="15" height="15" fill="#009354"/><rect x="1290" y="368" width="15" height="15" fill="#009353"/><rect x="1304" y="368" width="15" height="15" fill="#009351"/><rect x="1318" y="368" width="15" height="15" fill="#009350"/><rect x="1332" y="368" width="15" height="15" fill="#00934e"/><rect x="1346" y="368" width="15" height="15" fill="#00934c"/><rect x="1360" y="368" width="15" height="15" fill="#00934a"/><rect x="1374" y="368" width="15" height="15" fill="#009347"/><rect x="1388" y="368" width="15" height="15" fill="#009345"/><rect x="1402" y="368" width="15" height="15" fill="#1e9343"/><rect x="1416" y="368" width="15" height="15" fill="#319340"/><rect x="1430" y="368" width="15" height="15" fill="#42933d"/><rect x="1444" y="368" width="15" height="15" fill="#51933a"/><rect x="1458" y="368" width="15" height="15" fill="#609337"/><rect x="1472" y="368" width="15" height="15" fill="#6f9333"/><rect x="1486" y="368" width="15" height="15" fill="#7e932f"/><rect x="1500" y="368" width="15" height="15" fill="#8c932a"/><rect x="1514" y="368" width="15" height="15" fill="#938c23"/><rect x="1528" y="368" width="15" height="15" fill="#937f1b"/><rect x="1542" y="368" width="15" height="15" fill="#937513"/><rect x="1556" y="368" width="15" height="15" fill="#936c0b"/><rect x="1570" y="368" width="15" height="15" fill="#936400"/><rect x="1584" y="368" width="15" height="15" fill="#935c00"/><rect x="1598" y="368" width="15" height="15" fill="#935600"/><rect x="1612" y="368" width="15" height="15" fill="#935000"/><rect x="1626" y="368" width="15" height="15" fill="#934b00"/><rect x="1640" y="368" width="15" height="15" fill="#934600"/><rect x="1654" y="368" width="15" height="15" fill="#934100"/><rect x="1668" y="368" width="15" height="15" fill="#933d00"/><rect x="1682" y="368" width="15" height="15" fill="#933900"/><rect x="1696" y="368" width="15" height="15" fill="#933500"/><rect x="1710" y="368" width="15" height="15" fill="#933100"/><rect x="1724" y="368" width="15" height="15" fill="#932e00"/><rect x="1738" y="368" width="15" height="15" fill="#932b00"/><rect x="1752" y="368" width="15" height="15" fill="#932800"/><rect x="1766" y="368" width="15" height="15" fill="#932500"/><rect x="1780" y="368" width="15" height="15" fill="#932200"/><rect x="1794" y="368" width="15" height="15" fill="#931f00"/><rect x="1808" y="368" width="15" height="15" fill="#931d00"/><rect x="1822" y="368" width="15" height="15" fill="#931a00"/><rect x="1150" y="382" width="15" height="15" fill="#009366"/><rect x="1164" y="382" width="15" height="15" fill="#009365"/><rect x="1178" y="382" width="15" height="15" fill="#009364"/><rect x="1192" y="382" width="15" height="15" fill="#009363"/><rect x="1206" y="382" width="15" height="15" fill="#009362"/><rect x="1220" y="382" width="15" height="15" fill="#009361"/><rect x="1234" y="382" width="15" height="15" fill="#009360"/><rect x="1248" y="382" width="15" height="15" fill="#00935f"/><rect x="1262" y="382" width="15" height="15" fill="#00935e"/><rect x="1276" y="382" width="15" height="15" fill="#00935c"/><rect x="1290" y="382" width="15" height="15" fill="#00935b"/><rect x="1304" y="382" width="15" height="15" fill="#00935a"/><rect x="1318" y="382" width="15" height="15" fill="#009358"/><rect x="1332" y="382" width="15" height="15" fill="#009356"/><rect x="1346" y="382" width="15" height="15" fill="#009355"/><rect x="1360" y="382" width="15" height="15" fill="#009353"/><rect x="1374" y="382" width="15" height="15" fill="#009351"/><rect x="1388" y="382" width="15" height="15" fill="#10934f"/><rect x="1402" y="382" width="15" height="15" fill="#27934c"/><rect x="1416" y="382" width="15" height="15" fill="#3a934a"/><rect x="1430" y="382" width="15" height="15" fill="#4b9347"/><rect x="1444" y="382" width="15" height="15" fill="#5b9345"/><rect x="1458" y="382" width="15" height="15" fill="#6b9342"/><rect x="1472" y="382" width="15" height="15" fill="#7a933e"/><rect x="1486" y="382" width="15" height="15" fill="#8a933b"/><rect x="1500" y="382" width="15" height="15" fill="#938e35"/><rect x="1514" y="382" width="15" height="15" fill="#93802c"/><rect x="1528" y="382" width="15" height="15" fill="#937524"/><rect x="1542" y="382" width="15" height="15" fill="#936b1d"/><rect x="1556" y="382" width="15" height="15" fill="#936316"/><rect x="1570" y="382" width="15" height="15" fill="#935b0f"/><rect x="1584" y="382" width="15" height="15" fill="#935508"/><rect x="1598" y="382" width="15" height="15" fill="#934e00"/><rect x="1612" y="382" width="15" height="15" fill="#934900"/><rect x="1626" y="382" width="15" height="15" fill="#934400"/><rect x="1640" y="382" width="15" height="15" fill="#933f00"/><rect x="1654" y="382" width="15" height="15" fill="#933b00"/><rect x="1668" y="382" width="15" height="15" fill="#933700"/><rect x="1682" y="382" width="15" height="15" fill="#933300"/><rect x="1696" y="382" width="15" height="15" fill="#932f00"/><rect x="1710" y="382" width="15" height="15" fill="#932c00"/><rect x="1724" y="382" width="15" height="15" fill="#932900"/><rect x="1738" y="382" width="15" height="15" fill="#932500"/><rect x="1752" y="382" width="15" height="15" fill="#932200"/><rect x="1766" y="382" width="15" height="15" fill="#931f00"/><rect x="1780" y="382" width="15" height="15" fill="#931d00"/><rect x="1794" y="382" width="15" height="15" fill="#931a00"/><rect x="1808" y="382" width="15" height="15" fill="#931700"/><rect x="1822" y="382" width="15" height="15" fill="#931400"/><rect x="1150" y="396" width="15" height="15" fill="#00936e"/><rect x="1164" y="396" width="15" height="15" fill="#00936d"/><rect x="1178" y="396" width="15" height="15" fill="#00936c"/><rect x="1192" y="396" width="15" height="15" fill="#00936b"/><rect x="1206" y="396" width="15" height="15" fill="#00936a"/><rect x="1220" y="396" width="15" height="15" fill="#009369"/><rect x="1234" y="396" width="15" height="15" fill="#009368"/><rect x="1248" y="396" width="15" height="15" fill="#009367"/><rect x="1262" y="396" width="15" height="15" fill="#009366"/><rect x="1276" y="396" width="15" height="15" fill="#009365"/><rect x="1290" y="396" width="15" height="15" fill="#009364"/><rect x="1304" y="396" width="15" height="15" fill="#009362"/><rect x="1318" y="396" width="15" height="15" fill="#009361"/><rect x="1332" y="396" width="15" height="15" fill="#009360"/><rect x="1346" y="396" width="15" height="15" fill="#00935e"/><rect x="1360" y="396" width="15" height="15" fill="#00935d"/><rect x="1374" y="396" width="15" height="15" fill="#00935b"/><rect x="1388" y="396" width="15" height="15" fill="#1b9359"/><rect x="1402" y="396" width="15" height="15" fill="#319357"/><rect x="1416" y="396" width="15" height="15" fill="#439355"/><rect x="1430" y="396" width="15" height="15" fill="#559353"/><rect x="1444" y="396" width="15" height="15" fill="#669350"/><rect x="1458" y="396" width="15" height="15" fill="#76934d"/><rect x="1472" y="396" width="15" height="15" fill="#86934b"/><rect x="1486" y="396" width="15" height="15" fill="#939046"/><rect x="1500" y="396" width="15" height="15" fill="#93813c"/><rect x="1514" y="396" width="15" height="15" fill="#937533"/><rect x="1528" y="396" width="15" height="15" fill="#936b2b"/><rect x="1542" y="396" width="15" height="15" fill="#936224"/><rect x="1556" y="396" width="15" height="15" fill="#935a1e"/><rect x="1570" y="396" width="15" height="15" fill="#935318"/><rect x="1584" y="396" width="15" height="15" fill="#934d12"/><rect x="1598" y="396" width="15" height="15" fill="#93470c"/><rect x="1612" y="396" width="15" height="15" fill="#934205"/><rect x="1626" y="396" width="15" height="15" fill="#933d00"/><rect x="1640" y="396" width="15" height="15" fill="#933900"/><rect x="1654" y="396" width="15" height="15" fill="#933400"/><rect x="1668" y="396" width="15" height="15" fill="#933100"/><rect x="1682" y="396" width="15" height="15" fill="#932d00"/><rect x="1696" y="396" width="15" height="15" fill="#932900"/><rect x="1710" y="396" width="15" height="15" fill="#932600"/><rect x="1724" y="396" width="15" height="15" fill="#932300"/><rect x="1738" y="396" width="15" height="15" fill="#932000"/><rect x="1752" y="396" width="15" height="15" fill="#931d00"/><rect x="1766" y="396" width="15" height="15" fill="#931a00"/><rect x="1780" y="396" width="15" height="15" fill="#931700"/><rect x="1794" y="396" width="15" height="15" fill="#931400"/><rect x="1808" y="396" width="15" height="15" fill="#931100"/><rect x="1822" y="396" width="15" height="15" fill="#930e00"/><rect x="1150" y="410" width="15" height="15" fill="#009375"/><rect x="1164" y="410" width="15" height="15" fill="#009375"/><rect x="1178" y="410" width="15" height="15" fill="#009374"/><rect x="1192" y="410" width="15" height="15" fill="#009373"/><rect x="1206" y="410" width="15" height="15" fill="#009372"/><rect x="1220" y="410" width="15" height="15" fill="#009372"/><rect x="1234" y="410" width="15" height="15" fill="#009371"/><rect x="1248" y="410" width="15" height="15" fill="#009370"/><rect x="1262" y="410" width="15" height="15" fill="#00936f"/><rect x="1276" y="410" width="15" height="15" fill="#00936e"/><rect x="1290" y="410" width="15" height="15" fill="#00936d"/><rect x="1304" y="410" width="15" height="15" fill="#00936c"/><rect x="1318" y="410" width="15" height="15" fill="#00936b"/><rect x="1332" y="410" width="15" height="15" fill="#00936a"/><rect x="1346" y="410" width="15" height="15" fill="#009369"/><rect x="1360" y="410" width="15" height="15" fill="#009367"/><rect x="1374" y="410" width="15" height="15" fill="#089366"/><rect x="1388" y="410" width="15" height="15" fill="#269364"/><rect x="1402" y="410" width="15" height="15" fill="#3b9363"/><rect x="1416" y="410" width="15" height="15" fill="#4e9361"/><rect x="1430" y="410" width="15" height="15" fill="#60935f"/><rect x="1444" y="410" width="15" height="15" fill="#71935d"/><rect x="1458" y="410" width="15" height="15" fill="#83935b"/><rect x="1472" y="410" width="15" height="15" fill="#939257"/><rect x="1486" y="410" width="15" height="15" fill="#93834c"/><rect x="1500" y="410" width="15" height="15" fill="#937642"/><rect x="1514" y="410" width="15" height="15" fill="#936b39"/><rect x="1528" y="410" width="15" height="15" fill="#936132"/><rect x="1542" y="410" width="15" height="15" fill="#93592b"/><rect x="1556" y="410" width="15" height="15" fill="#935225"/><rect x="1570" y="410" width="15" height="15" fill="#934b1f"/><rect x="1584" y="410" width="15" height="15" fill="#93451a"/><rect x="1598" y="410" width="15" height="15" fill="#934014"/><rect x="1612" y="410" width="15" height="15" fill="#933b0f"/><rect x="1626" y="410" width="15" height="15" fill="#93360a"/><rect x="1640" y="410" width="15" height="15" fill="#933203"/><rect x="1654" y="410" width="15" height="15" fill="#932e00"/><rect x="1668" y="410" width="15" height="15" fill="#932a00"/><rect x="1682" y="410" width="15" height="15" fill="#932700"/><rect x="1696" y="410" width="15" height="15" fill="#932300"/><rect x="1710" y="410" width="15" height="15" fill="#932000"/><rect x="1724" y="410" width="15" height="15" fill="#931d00"/><rect x="1738" y="410" width="15" height="15" fill="#931900"/><rect x="1752" y="410" width="15" height="15" fill="#931600"/><rect x="1766" y="410" width="15" height="15" fill="#931300"/><rect x="1780" y="410" width="15" height="15" fill="#931000"/><rect x="1794" y="410" width="15" height="15" fill="#930d00"/><rect x="1808" y="410" width="15" height="15" fill="#930a00"/><rect x="1822" y="410" width="15" height="15" fill="#930600"/><rect x="1150" y="424" width="15" height="15" fill="#00937d"/><rect x="1164" y="424" width="15" height="15" fill="#00937d"/><rect x="1178" y="424" width="15" height="15" fill="#00937d"/><rect x="1192" y="424" width="15" height="15" fill="#00937c"/><rect x="1206" y="424" width="15" height="15" fill="#00937b"/><rect x="1220" y="424" width="15" height="15" fill="#00937b"/><rect x="1234" y="424" width="15" height="15" fill="#00937a"/><rect x="1248" y="424" width="15" height="15" fill="#00937a"/><rect x="1262" y="424" width="15" height="15" fill="#009379"/><rect x="1276" y="424" width="15" height="15" fill="#009378"/><rect x="1290" y="424" width="15" height="15" fill="#009377"/><rect x="1304" y="424" width="15" height="15" fill="#009377"/><rect x="1318" y="424" width="15" height="15" fill="#009376"/><rect x="1332" y="424" width="15" height="15" fill="#009375"/><rect x="1346" y="424" width="15" height="15" fill="#009374"/><rect x="1360" y="424" width="15" height="15" fill="#009373"/><rect x="1374" y="424" width="15" height="15" fill="#179372"/><rect x="1388" y="424" width="15" height="15" fill="#309371"/><rect x="1402" y="424" width="15" height="15" fill="#46936f"/><rect x="1416" y="424" width="15" height="15" fill="#59936e"/><rect x="1430" y="424" width="15" height="15" fill="#6c936c"/><rect x="1444" y="424" width="15" height="15" fill="#7f936b"/><rect x="1458" y="424" width="15" height="15" fill="#929369"/><rect x="1472" y="424" width="15" height="15" fill="#93845c"/><rect x="1486" y="424" width="15" height="15" fill="#937651"/><rect x="1500" y="424" width="15" height="15" fill="#936a47"/><rect x="1514" y="424" width="15" height="15" fill="#93603f"/><rect x="1528" y="424" width="15" height="15" fill="#935837"/><rect x="1542" y="424" width="15" height="15" fill="#935031"/><rect x="1556" y="424" width="15" height="15" fill="#93492b"/><rect x="1570" y="424" width="15" height="15" fill="#934325"/><rect x="1584" y="424" width="15" height="15" fill="#933d20"/><rect x="1598" y="424" width="15" height="15" fill="#93381b"/><rect x="1612" y="424" width="15" height="15" fill="#933416"/><rect x="1626" y="424" width="15" height="15" fill="#932f12"/><rect x="1640" y="424" width="15" height="15" fill="#932b0d"/><rect x="1654" y="424" width="15" height="15" fill="#932708"/><rect x="1668" y="424" width="15" height="15" fill="#932400"/><rect x="1682" y="424" width="15" height="15" fill="#932000"/><rect x="1696" y="424" width="15" height="15" fill="#931d00"/><rect x="1710" y="424" width="15" height="15" fill="#931900"/><rect x="1724" y="424" width="15" height="15" fill="#931600"/><rect x="1738" y="424" width="15" height="15" fill="#931300"/><rect x="1752" y="424" width="15" height="15" fill="#930f00"/><rect x="1766" y="424" width="15" height="15" fill="#930c00"/><rect x="1780" y="424" width="15" height="15" fill="#930800"/><rect x="1794" y="424" width="15" height="15" fill="#930400"/><rect x="1808" y="424" width="15" height="15" fill="#930000"/><rect x="1822" y="424" width="15" height="15" fill="#930000"/><rect x="1150" y="438" width="15" height="15" fill="#009386"/><rect x="1164" y="438" width="15" height="15" fill="#009386"/><rect x="1178" y="438" width="15" height="15" fill="#009386"/><rect x="1192" y="438" width="15" height="15" fill="#009385"/><rect x="1206" y="438" width="15" height="15" fill="#009385"/><rect x="1220" y="438" width="15" height="15" fill="#009385"/><rect x="1234" y="438" width="15" height="15" fill="#009384"/><rect x="1248" y="438" width="15" height="15" fill="#009384"/><rect x="1262" y="438" width="15" height="15" fill="#009384"/><rect x="1276" y="438" width="15" height="15" fill="#009383"/><rect x="1290" y="438" width="15" height="15" fill="#009383"/><rect x="1304" y="438" width="15" height="15" fill="#009382"/><rect x="1318" y="438" width="15" height="15" fill="#009382"/><rect x="1332" y="438" width="15" height="15" fill="#009381"/><rect x="1346" y="438" width="15" height="15" fill="#009381"/><rect x="1360" y="438" width="15" height="15" fill="#009380"/><rect x="1374" y="438" width="15" height="15" fill="#23937f"/><rect x="1388" y="438" width="15" height="15" fill="#3c937e"/><rect x="1402" y="438" width="15" height="15" fill="#52937e"/><rect x="1416" y="438" width="15" height="15" fill="#66937d"/><rect x="1430" y="438" width="15" height="15" fill="#7a937c"/><rect x="1444" y="438" width="15" height="15" fill="#8e937b"/><rect x="1458" y="438" width="15" height="15" fill="#93866e"/><rect x="1472" y="438" width="15" height="15" fill="#937661"/><rect x="1486" y="438" width="15" height="15" fill="#936a55"/><rect x="1500" y="438" width="15" height="15" fill="#935f4c"/><rect x="1514" y="438" width="15" height="15" fill="#935644"/><rect x="1528" y="438" width="15" height="15" fill="#934e3c"/><rect x="1542" y="438" width="15" height="15" fill="#934736"/><rect x="1556" y="438" width="15" height="15" fill="#934130"/><rect x="1570" y="438" width="15" height="15" fill="#933b2a"/><rect x="1584" y="438" width="15" height="15" fill="#933625"/><rect x="1598" y="438" width="15" height="15" fill="#933121"/><rect x="1612" y="438" width="15" height="15" fill="#932c1c"/><rect x="1626" y="438" width="15" height="15" fill="#932818"/><rect x="1640" y="438" width="15" height="15" fill="#932414"/><rect x="1654" y="438" width="15" height="15" fill="#93200f"/><rect x="1668" y="438" width="15" height="15" fill="#931d0b"/><rect x="1682" y="438" width="15" height="15" fill="#931906"/><rect x="1696" y="438" width="15" height="15" fill="#931500"/><rect x="1710" y="438" width="15" height="15" fill="#931200"/><rect x="1724" y="438" width="15" height="15" fill="#930e00"/><rect x="1738" y="438" width="15" height="15" fill="#930b00"/><rect x="1752" y="438" width="15" height="15" fill="#930600"/><rect x="1766" y="438" width="15" height="15" fill="#930000"/><rect x="1780" y="438" width="15" height="15" fill="#930000"/><rect x="1794" y="438" width="15" height="15" fill="#930000"/><rect x="1808" y="438" width="15" height="15" fill="#930000"/><rect x="1822" y="438" width="15" height="15" fill="#930000"/><rect x="1150" y="452" width="15" height="15" fill="#009390"/><rect x="1164" y="452" width="15" height="15" fill="#009390"/><rect x="1178" y="452" width="15" height="15" fill="#009390"/><rect x="1192" y="452" width="15" height="15" fill="#009390"/><rect x="1206" y="452" width="15" height="15" fill="#009390"/><rect x="1220" y="452" width="15" height="15" fill="#009390"/><rect x="1234" y="452" width="15" height="15" fill="#009390"/><rect x="1248" y="452" width="15" height="15" fill="#009390"/><rect x="1262" y="452" width="15" height="15" fill="#00938f"/><rect x="1276" y="452" width="15" height="15" fill="#00938f"/><rect x="1290" y="452" width="15" height="15" fill="#00938f"/><rect x="1304" y="452" width="15" height="15" fill="#00938f"/><rect x="1318" y="452" width="15" height="15" fill="#00938f"/><rect x="1332" y="452" width="15" height="15" fill="#00938f"/><rect x="1346" y="452" width="15" height="15" fill="#00938f"/><rect x="1360" y="452" width="15" height="15" fill="#11938f"/><rect x="1374" y="452" width="15" height="15" fill="#30938e"/><rect x="1388" y="452" width="15" height="15" fill="#48938e"/><rect x="1402" y="452" width="15" height="15" fill="#5f938e"/><rect x="1416" y="452" width="15" height="15" fill="#75938e"/><rect x="1430" y="452" width="15" height="15" fill="#8a938e"/><rect x="1444" y="452" width="15" height="15" fill="#938782"/><rect x="1458" y="452" width="15" height="15" fill="#937772"/><rect x="1472" y="452" width="15" height="15" fill="#936964"/><rect x="1486" y="452" width="15" height="15" fill="#935e59"/><rect x="1500" y="452" width="15" height="15" fill="#935450"/><rect x="1514" y="452" width="15" height="15" fill="#934c48"/><rect x="1528" y="452" width="15" height="15" fill="#934541"/><rect x="1542" y="452" width="15" height="15" fill="#933e3a"/><rect x="1556" y="452" width="15" height="15" fill="#933835"/><rect x="1570" y="452" width="15" height="15" fill="#93332f"/><rect x="1584" y="452" width="15" height="15" fill="#932e2a"/><rect x="1598" y="452" width="15" height="15" fill="#932926"/><rect x="1612" y="452" width="15" height="15" fill="#932521"/><rect x="1626" y="452" width="15" height="15" fill="#93211d"/><rect x="1640" y="452" width="15" height="15" fill="#931d19"/><rect x="1654" y="452" width="15" height="15" fill="#931915"/><rect x="1668" y="452" width="15" height="15" fill="#931511"/><rect x="1682" y="452" width="15" height="15" fill="#93110d"/><rect x="1696" y="452" width="15" height="15" fill="#930d09"/><rect x="1710" y="452" width="15" height="15" fill="#930904"/><rect x="1724" y="452" width="15" height="15" fill="#930400"/><rect x="1738" y="452" width="15" height="15" fill="#930000"/><rect x="1752" y="452" width="15" height="15" fill="#930000"/><rect x="1766" y="452" width="15" height="15" fill="#930000"/><rect x="1780" y="452" width="15" height="15" fill="#930000"/><rect x="1794" y="452" width="15" height="15" fill="#930000"/><rect x="1808" y="452" width="15" height="15" fill="#930000"/><rect x="1822" y="452" width="15" height="15" fill="#930000"/><rect x="1150" y="466" width="15" height="15" fill="#008d93"/><rect x="1164" y="466" width="15" height="15" fill="#008c93"/><rect x="1178" y="466" width="15" height="15" fill="#008c93"/><rect x="1192" y="466" width="15" height="15" fill="#008c93"/><rect x="1206" y="466" width="15" height="15" fill="#008c93"/><rect x="1220" y="466" width="15" height="15" fill="#008c93"/><rect x="1234" y="466" width="15" height="15" fill="#008b93"/><rect x="1248" y="466" width="15" height="15" fill="#008b93"/><rect x="1262" y="466" width="15" height="15" fill="#008b93"/><rect x="1276" y="466" width="15" height="15" fill="#008a93"/><rect x="1290" y="466" width="15" height="15" fill="#008a93"/><rect x="1304" y="466" width="15" height="15" fill="#008a93"/><rect x="1318" y="466" width="15" height="15" fill="#008a93"/><rect x="1332" y="466" width="15" height="15" fill="#008993"/><rect x="1346" y="466" width="15" height="15" fill="#008993"/><rect x="1360" y="466" width="15" height="15" fill="#1e8893"/><rect x="1374" y="466" width="15" height="15" fill="#398893"/><rect x="1388" y="466" width="15" height="15" fill="#4f8793"/><rect x="1402" y="466" width="15" height="15" fill="#658793"/><rect x="1416" y="466" width="15" height="15" fill="#7a8693"/><rect x="1430" y="466" width="15" height="15" fill="#8f8693"/><rect x="1444" y="466" width="15" height="15" fill="#937784"/><rect x="1458" y="466" width="15" height="15" fill="#936875"/><rect x="1472" y="466" width="15" height="15" fill="#935c68"/><rect x="1486" y="466" width="15" height="15" fill="#93525d"/><rect x="1500" y="466" width="15" height="15" fill="#934a54"/><rect x="1514" y="466" width="15" height="15" fill="#93424c"/><rect x="1528" y="466" width="15" height="15" fill="#933b45"/><rect x="1542" y="466" width="15" height="15" fill="#93353f"/><rect x="1556" y="466" width="15" height="15" fill="#932f39"/><rect x="1570" y="466" width="15" height="15" fill="#932a34"/><rect x="1584" y="466" width="15" height="15" fill="#93252f"/><rect x="1598" y="466" width="15" height="15" fill="#93212a"/><rect x="1612" y="466" width="15" height="15" fill="#931c26"/><rect x="1626" y="466" width="15" height="15" fill="#931822"/><rect x="1640" y="466" width="15" height="15" fill="#93141e"/><rect x="1654" y="466" width="15" height="15" fill="#93101a"/><rect x="1668" y="466" width="15" height="15" fill="#930c17"/><rect x="1682" y="466" width="15" height="15" fill="#930713"/><rect x="1696" y="466" width="15" height="15" fill="#93000f"/><rect x="1710" y="466" width="15" height="15" fill="#93000c"/><rect x="1724" y="466" width="15" height="15" fill="#930007"/><rect x="1738" y="466" width="15" height="15" fill="#930002"/><rect x="1752" y="466" width="15" height="15" fill="#930000"/><rect x="1766" y="466" width="15" height="15" fill="#930000"/><rect x="1780" y="466" width="15" height="15" fill="#930000"/><rect x="1794" y="466" width="15" height="15" fill="#930000"/><rect x="1808" y="466" width="15" height="15" fill="#930000"/><rect x="1822" y="466" width="15" height="15" fill="#930000"/><rect x="1150" y="480" width="15" height="15" fill="#008393"/><rect x="1164" y="480" width="15" height="15" fill="#008293"/><rect x="1178" y="480" width="15" height="15" fill="#008293"/><rect x="1192" y="480" width="15" height="15" fill="#008293"/><rect x="1206" y="480" width="15" height="15" fill="#008193"/><rect x="1220" y="480" width="15" height="15" fill="#008193"/><rect x="1234" y="480" width="15" height="15" fill="#008093"/><rect x="1248" y="480" width="15" height="15" fill="#007f93"/><rect x="1262" y="480" width="15" height="15" fill="#007f93"/><rect x="1276" y="480" width="15" height="15" fill="#007e93"/><rect x="1290" y="480" width="15" height="15" fill="#007d93"/><rect x="1304" y="480" width="15" height="15" fill="#007d93"/><rect x="1318" y="480" width="15" height="15" fill="#007c93"/><rect x="1332" y="480" width="15" height="15" fill="#007b93"/><rect x="1346" y="480" width="15" height="15" fill="#067a93"/><rect x="1360" y="480" width="15" height="15" fill="#277993"/><rect x="1374" y="480" width="15" height="15" fill="#3e7893"/><rect x="1388" y="480" width="15" height="15" fill="#537793"/><rect x="1402" y="480" width="15" height="15" fill="#677693"/><rect x="1416" y="480" width="15" height="15" fill="#7a7593"/><rect x="1430" y="480" width="15" height="15" fill="#8e7393"/><rect x="1444" y="480" width="15" height="15" fill="#936886"/><rect x="1458" y="480" width="15" height="15" fill="#935b77"/><rect x="1472" y="480" width="15" height="15" fill="#93506b"/><rect x="1486" y="480" width="15" height="15" fill="#934761"/><rect x="1500" y="480" width="15" height="15" fill="#933f58"/><rect x="1514" y="480" width="15" height="15" fill="#933850"/><rect x="1528" y="480" width="15" height="15" fill="#933149"/><rect x="1542" y="480" width="15" height="15" fill="#932c42"/><rect x="1556" y="480" width="15" height="15" fill="#93263d"/><rect x="1570" y="480" width="15" height="15" fill="#932138"/><rect x="1584" y="480" width="15" height="15" fill="#931c33"/><rect x="1598" y="480" width="15" height="15" fill="#93182e"/><rect x="1612" y="480" width="15" height="15" fill="#93132a"/><rect x="1626" y="480" width="15" height="15" fill="#930f26"/><rect x="1640" y="480" width="15" height="15" fill="#930a22"/><rect x="1654" y="480" width="15" height="15" fill="#93041f"/><rect x="1668" y="480" width="15" height="15" fill="#93001b"/><rect x="1682" y="480" width="15" height="15" fill="#930018"/><rect x="1696" y="480" width="15" height="15" fill="#930014"/><rect x="1710" y="480" width="15" height="15" fill="#930011"/><rect x="1724" y="480" width="15" height="15" fill="#93000e"/><rect x="1738" y="480" width="15" height="15" fill="#93000a"/><rect x="1752" y="480" width="15" height="15" fill="#930006"/><rect x="1766" y="480" width="15" height="15" fill="#930000"/><rect x="1780" y="480" width="15" height="15" fill="#930000"/><rect x="1794" y="480" width="15" height="15" fill="#930000"/><rect x="1808" y="480" width="15" height="15" fill="#930000"/><rect x="1822" y="480" width="15" height="15" fill="#930000"/><rect x="1150" y="494" width="15" height="15" fill="#007993"/><rect x="1164" y="494" width="15" height="15" fill="#007993"/><rect x="1178" y="494" width="15" height="15" fill="#007893"/><rect x="1192" y="494" width="15" height="15" fill="#007793"/><rect x="1206" y="494" width="15" height="15" fill="#007793"/><rect x="1220" y="494" width="15" height="15" fill="#007693"/><rect x="1234" y="494" width="15" height="15" fill="#007593"/><rect x="1248" y="494" width="15" height="15" fill="#007493"/><rect x="1262" y="494" width="15" height="15" fill="#007393"/><rect x="1276" y="494" width="15" height="15" fill="#007293"/><rect x="1290" y="494" width="15" height="15" fill="#007193"/><rect x="1304" y="494" width="15" height="15" fill="#007093"/><rect x="1318" y="494" width="15" height="15" fill="#006f93"/><rect x="1332" y="494" width="15" height="15" fill="#006e93"/><rect x="1346" y="494" width="15" height="15" fill="#156d93"/><rect x="1360" y="494" width="15" height="15" fill="#2e6b93"/><rect x="1374" y="494" width="15" height="15" fill="#436a93"/><rect x="1388" y="494" width="15" height="15" fill="#566893"/><rect x="1402" y="494" width="15" height="15" fill="#696693"/><rect x="1416" y="494" width="15" height="15" fill="#7b6493"/><rect x="1430" y="494" width="15" height="15" fill="#8d6293"/><rect x="1444" y="494" width="15" height="15" fill="#935988"/><rect x="1458" y="494" width="15" height="15" fill="#934d7a"/><rect x="1472" y="494" width="15" height="15" fill="#93446e"/><rect x="1486" y="494" width="15" height="15" fill="#933b64"/><rect x="1500" y="494" width="15" height="15" fill="#93345b"/><rect x="1514" y="494" width="15" height="15" fill="#932d53"/><rect x="1528" y="494" width="15" height="15" fill="#93274c"/><rect x="1542" y="494" width="15" height="15" fill="#932246"/><rect x="1556" y="494" width="15" height="15" fill="#931c40"/><rect x="1570" y="494" width="15" height="15" fill="#93173b"/><rect x="1584" y="494" width="15" height="15" fill="#931236"/><rect x="1598" y="494" width="15" height="15" fill="#930d32"/><rect x="1612" y="494" width="15" height="15" fill="#93082e"/><rect x="1626" y="494" width="15" height="15" fill="#93002a"/><rect x="1640" y="494" width="15" height="15" fill="#930026"/><rect x="1654" y="494" width="15" height="15" fill="#930023"/><rect x="1668" y="494" width="15" height="15" fill="#93001f"/><rect x="1682" y="494" width="15" height="15" fill="#93001c"/><rect x="1696" y="494" width="15" height="15" fill="#930019"/><rect x="1710" y="494" width="15" height="15" fill="#930016"/><rect x="1724" y="494" width="15" height="15" fill="#930013"/><rect x="1738" y="494" width="15" height="15" fill="#93000f"/><rect x="1752" y="494" width="15" height="15" fill="#93000c"/><rect x="1766" y="494" width="15" height="15" fill="#930009"/><rect x="1780" y="494" width="15" height="15" fill="#930005"/><rect x="1794" y="494" width="15" height="15" fill="#930000"/><rect x="1808" y="494" width="15" height="15" fill="#930000"/><rect x="1822" y="494" width="15" height="15" fill="#930000"/><rect x="1150" y="508" width="15" height="15" fill="#007093"/><rect x="1164" y="508" width="15" height="15" fill="#007093"/><rect x="1178" y="508" width="15" height="15" fill="#006f93"/><rect x="1192" y="508" width="15" height="15" fill="#006e93"/><rect x="1206" y="508" width="15" height="15" fill="#006d93"/><rect x="1220" y="508" width="15" height="15" fill="#006c93"/><rect x="1234" y="508" width="15" height="15" fill="#006b93"/><rect x="1248" y="508" width="15" height="15" fill="#006a93"/><rect x="1262" y="508" width="15" height="15" fill="#006993"/><rect x="1276" y="508" width="15" height="15" fill="#006793"/><rect x="1290" y="508" width="15" height="15" fill="#006693"/><rect x="1304" y="508" width="15" height="15" fill="#006593"/><rect x="1318" y="508" width="15" height="15" fill="#006393"/><rect x="1332" y="508" width="15" height="15" fill="#006193"/><rect x="1346" y="508" width="15" height="15" fill="#1e6093"/><rect x="1360" y="508" width="15" height="15" fill="#345e93"/><rect x="1374" y="508" width="15" height="15" fill="#475c93"/><rect x="1388" y="508" width="15" height="15" fill="#595a93"/><rect x="1402" y="508" width="15" height="15" fill="#6a5793"/><rect x="1416" y="508" width="15" height="15" fill="#7b5593"/><rect x="1430" y="508" width="15" height="15" fill="#8c5293"/><rect x="1444" y="508" width="15" height="15" fill="#934a8a"/><rect x="1458" y="508" width="15" height="15" fill="#93407c"/><rect x="1472" y="508" width="15" height="15" fill="#933770"/><rect x="1486" y="508" width="15" height="15" fill="#932f66"/><rect x="1500" y="508" width="15" height="15" fill="#93295e"/><rect x="1514" y="508" width="15" height="15" fill="#932256"/><rect x="1528" y="508" width="15" height="15" fill="#931c4f"/><rect x="1542" y="508" width="15" height="15" fill="#931749"/><rect x="1556" y="508" width="15" height="15" fill="#931144"/><rect x="1570" y="508" width="15" height="15" fill="#930b3f"/><rect x="1584" y="508" width="15" height="15" fill="#93053a"/><rect x="1598" y="508" width="15" height="15" fill="#930035"/><rect x="1612" y="508" width="15" height="15" fill="#930031"/><rect x="1626" y="508" width="15" height="15" fill="#93002d"/><rect x="1640" y="508" width="15" height="15" fill="#93002a"/><rect x="1654" y="508" width="15" height="15" fill="#930026"/><rect x="1668" y="508" width="15" height="15" fill="#930023"/><rect x="1682" y="508" width="15" height="15" fill="#930020"/><rect x="1696" y="508" width="15" height="15" fill="#93001d"/><rect x="1710" y="508" width="15" height="15" fill="#93001a"/><rect x="1724" y="508" width="15" height="15" fill="#930017"/><rect x="1738" y="508" width="15" height="15" fill="#930014"/><rect x="1752" y="508" width="15" height="15" fill="#930011"/><rect x="1766" y="508" width="15" height="15" fill="#93000e"/><rect x="1780" y="508" width="15" height="15" fill="#93000b"/><rect x="1794" y="508" width="15" height="15" fill="#930007"/><rect x="1808" y="508" width="15" height="15" fill="#930003"/><rect x="1822" y="508" width="15" height="15" fill="#930000"/><rect x="1150" y="522" width="15" height="15" fill="#006893"/><rect x="1164" y="522" width="15" height="15" fill="#006793"/><rect x="1178" y="522" width="15" height="15" fill="#006693"/><rect x="1192" y="522" width="15" height="15" fill="#006593"/><rect x="1206" y="522" width="15" height="15" fill="#006393"/><rect x="1220" y="522" width="15" height="15" fill="#006293"/><rect x="1234" y="522" width="15" height="15" fill="#006193"/><rect x="1248" y="522" width="15" height="15" fill="#005f93"/><rect x="1262" y="522" width="15" height="15" fill="#005e93"/><rect x="1276" y="522" width="15" height="15" fill="#005c93"/><rect x="1290" y="522" width="15" height="15" fill="#005b93"/><rect x="1304" y="522" width="15" height="15" fill="#005993"/><rect x="1318" y="522" width="15" height="15" fill="#005793"/><rect x="1332" y="522" width="15" height="15" fill="#0c5593"/><rect x="1346" y="522" width="15" height="15" fill="#255393"/><rect x="1360" y="522" width="15" height="15" fill="#395193"/><rect x="1374" y="522" width="15" height="15" fill="#4b4f93"/><rect x="1388" y="522" width="15" height="15" fill="#5b4c93"/><rect x="1402" y="522" width="15" height="15" fill="#6c4993"/><rect x="1416" y="522" width="15" height="15" fill="#7c4693"/><rect x="1430" y="522" width="15" height="15" fill="#8c4393"/><rect x="1444" y="522" width="15" height="15" fill="#933c8b"/><rect x="1458" y="522" width="15" height="15" fill="#93327e"/><rect x="1472" y="522" width="15" height="15" fill="#932a73"/><rect x="1486" y="522" width="15" height="15" fill="#932369"/><rect x="1500" y="522" width="15" height="15" fill="#931c60"/><rect x="1514" y="522" width="15" height="15" fill="#931659"/><rect x="1528" y="522" width="15" height="15" fill="#931052"/><rect x="1542" y="522" width="15" height="15" fill="#93094c"/><rect x="1556" y="522" width="15" height="15" fill="#930047"/><rect x="1570" y="522" width="15" height="15" fill="#930042"/><rect x="1584" y="522" width="15" height="15" fill="#93003d"/><rect x="1598" y="522" width="15" height="15" fill="#930039"/><rect x="1612" y="522" width="15" height="15" fill="#930035"/><rect x="1626" y="522" width="15" height="15" fill="#930031"/><rect x="1640" y="522" width="15" height="15" fill="#93002d"/><rect x="1654" y="522" width="15" height="15" fill="#93002a"/><rect x="1668" y="522" width="15" height="15" fill="#930026"/><rect x="1682" y="522" width="15" height="15" fill="#930023"/><rect x="1696" y="522" width="15" height="15" fill="#930020"/><rect x="1710" y="522" width="15" height="15" fill="#93001d"/><rect x="1724" y="522" width="15" height="15" fill="#93001b"/><rect x="1738" y="522" width="15" height="15" fill="#930018"/><rect x="1752" y="522" width="15" height="15" fill="#930015"/><rect x="1766" y="522" width="15" height="15" fill="#930012"/><rect x="1780" y="522" width="15" height="15" fill="#93000f"/><rect x="1794" y="522" width="15" height="15" fill="#93000d"/><rect x="1808" y="522" width="15" height="15" fill="#93000a"/><rect x="1822" y="522" width="15" height="15" fill="#930006"/><rect x="1150" y="536" width="15" height="15" fill="#005f93"/><rect x="1164" y="536" width="15" height="15" fill="#005e93"/><rect x="1178" y="536" width="15" height="15" fill="#005d93"/><rect x="1192" y="536" width="15" height="15" fill="#005c93"/><rect x="1206" y="536" width="15" height="15" fill="#005a93"/><rect x="1220" y="536" width="15" height="15" fill="#005993"/><rect x="1234" y="536" width="15" height="15" fill="#005793"/><rect x="1248" y="536" width="15" height="15" fill="#005693"/><rect x="1262" y="536" width="15" height="15" fill="#005493"/><rect x="1276" y="536" width="15" height="15" fill="#005293"/><rect x="1290" y="536" width="15" height="15" fill="#005093"/><rect x="1304" y="536" width="15" height="15" fill="#004e93"/><rect x="1318" y="536" width="15" height="15" fill="#004c93"/><rect x="1332" y="536" width="15" height="15" fill="#164a93"/><rect x="1346" y="536" width="15" height="15" fill="#2c4793"/><rect x="1360" y="536" width="15" height="15" fill="#3d4493"/><rect x="1374" y="536" width="15" height="15" fill="#4e4293"/><rect x="1388" y="536" width="15" height="15" fill="#5e3e93"/><rect x="1402" y="536" width="15" height="15" fill="#6d3b93"/><rect x="1416" y="536" width="15" height="15" fill="#7c3793"/><rect x="1430" y="536" width="15" height="15" fill="#8b3393"/><rect x="1444" y="536" width="15" height="15" fill="#932d8d"/><rect x="1458" y="536" width="15" height="15" fill="#932480"/><rect x="1472" y="536" width="15" height="15" fill="#931c75"/><rect x="1486" y="536" width="15" height="15" fill="#93156b"/><rect x="1500" y="536" width="15" height="15" fill="#930d63"/><rect x="1514" y="536" width="15" height="15" fill="#93055c"/><rect x="1528" y="536" width="15" height="15" fill="#930055"/><rect x="1542" y="536" width="15" height="15" fill="#93004f"/><rect x="1556" y="536" width="15" height="15" fill="#93004a"/><rect x="1570" y="536" width="15" height="15" fill="#930045"/><rect x="1584" y="536" width="15" height="15" fill="#930040"/><rect x="1598" y="536" width="15" height="15" fill="#93003c"/><rect x="1612" y="536" width="15" height="15" fill="#930038"/><rect x="1626" y="536" width="15" height="15" fill="#930034"/><rect x="1640" y="536" width="15" height="15" fill="#930030"/><rect x="1654" y="536" width="15" height="15" fill="#93002d"/><rect x="1668" y="536" width="15" height="15" fill="#93002a"/><rect x="1682" y="536" width="15" height="15" fill="#930027"/><rect x="1696" y="536" width="15" height="15" fill="#930024"/><rect x="1710" y="536" width="15" height="15" fill="#930021"/><rect x="1724" y="536" width="15" height="15" fill="#93001e"/><rect x="1738" y="536" width="15" height="15" fill="#93001b"/><rect x="1752" y="536" width="15" height="15" fill="#930019"/><rect x="1766" y="536" width="15" height="15" fill="#930016"/><rect x="1780" y="536" width="15" height="15" fill="#930013"/><rect x="1794" y="536" width="15" height="15" fill="#930011"/><rect x="1808" y="536" width="15" height="15" fill="#93000e"/><rect x="1822" y="536" width="15" height="15" fill="#93000b"/><rect x="1150" y="550" width="15" height="15" fill="#005793"/><rect x="1164" y="550" width="15" height="15" fill="#005693"/><rect x="1178" y="550" width="15" height="15" fill="#005493"/><rect x="1192" y="550" width="15" height="15" fill="#005393"/><rect x="1206" y="550" width="15" height="15" fill="#005193"/><rect x="1220" y="550" width="15" height="15" fill="#004f93"/><rect x="1234" y="550" width="15" height="15" fill="#004e93"/><rect x="1248" y="550" width="15" height="15" fill="#004c93"/><rect x="1262" y="550" width="15" height="15" fill="#004a93"/><rect x="1276" y="550" width="15" height="15" fill="#004893"/><rect x="1290" y="550" width="15" height="15" fill="#004693"/><rect x="1304" y="550" width="15" height="15" fill="#004393"/><rect x="1318" y="550" width="15" height="15" fill="#004193"/><rect x="1332" y="550" width="15" height="15" fill="#1e3e93"/><rect x="1346" y="550" width="15" height="15" fill="#313b93"/><rect x="1360" y="550" width="15" height="15" fill="#413893"/><rect x="1374" y="550" width="15" height="15" fill="#513593"/><rect x="1388" y="550" width="15" height="15" fill="#5f3193"/><rect x="1402" y="550" width="15" height="15" fill="#6e2d93"/><rect x="1416" y="550" width="15" height="15" fill="#7c2893"/><rect x="1430" y="550" width="15" height="15" fill="#8b2393"/><rect x="1444" y="550" width="15" height="15" fill="#931c8e"/><rect x="1458" y="550" width="15" height="15" fill="#931381"/><rect x="1472" y="550" width="15" height="15" fill="#930a77"/><rect x="1486" y="550" width="15" height="15" fill="#93006e"/><rect x="1500" y="550" width="15" height="15" fill="#930065"/><rect x="1514" y="550" width="15" height="15" fill="#93005e"/><rect x="1528" y="550" width="15" height="15" fill="#930058"/><rect x="1542" y="550" width="15" height="15" fill="#930052"/><rect x="1556" y="550" width="15" height="15" fill="#93004c"/><rect x="1570" y="550" width="15" height="15" fill="#930047"/><rect x="1584" y="550" width="15" height="15" fill="#930043"/><rect x="1598" y="550" width="15" height="15" fill="#93003e"/><rect x="1612" y="550" width="15" height="15" fill="#93003a"/><rect x="1626" y="550" width="15" height="15" fill="#930037"/><rect x="1640" y="550" width="15" height="15" fill="#930033"/><rect x="1654" y="550" width="15" height="15" fill="#930030"/><rect x="1668" y="550" width="15" height="15" fill="#93002d"/><rect x="1682" y="550" width="15" height="15" fill="#93002a"/><rect x="1696" y="550" width="15" height="15" fill="#930027"/><rect x="1710" y="550" width="15" height="15" fill="#930024"/><rect x="1724" y="550" width="15" height="15" fill="#930021"/><rect x="1738" y="550" width="15" height="15" fill="#93001f"/><rect x="1752" y="550" width="15" height="15" fill="#93001c"/><rect x="1766" y="550" width="15" height="15" fill="#930019"/><rect x="1780" y="550" width="15" height="15" fill="#930017"/><rect x="1794" y="550" width="15" height="15" fill="#930014"/><rect x="1808" y="550" width="15" height="15" fill="#930012"/><rect x="1822" y="550" width="15" height="15" fill="#93000f"/><rect x="1150" y="564" width="15" height="15" fill="#004f93"/><rect x="1164" y="564" width="15" height="15" fill="#004d93"/><rect x="1178" y="564" width="15" height="15" fill="#004c93"/><rect x="1192" y="564" width="15" height="15" fill="#004a93"/><rect x="1206" y="564" width="15" height="15" fill="#004893"/><rect x="1220" y="564" width="15" height="15" fill="#004693"/><rect x="1234" y="564" width="15" height="15" fill="#004493"/><rect x="1248" y="564" width="15" height="15" fill="#004293"/><rect x="1262" y="564" width="15" height="15" fill="#004093"/><rect x="1276" y="564" width="15" height="15" fill="#003e93"/><rect x="1290" y="564" width="15" height="15" fill="#003b93"/><rect x="1304" y="564" width="15" height="15" fill="#003893"/><rect x="1318" y="564" width="15" height="15" fill="#0f3693"/><rect x="1332" y="564" width="15" height="15" fill="#243293"/><rect x="1346" y="564" width="15" height="15" fill="#352f93"/><rect x="1360" y="564" width="15" height="15" fill="#452b93"/><rect x="1374" y="564" width="15" height="15" fill="#532793"/><rect x="1388" y="564" width="15" height="15" fill="#612393"/><rect x="1402" y="564" width="15" height="15" fill="#6f1d93"/><rect x="1416" y="564" width="15" height="15" fill="#7d1793"/><rect x="1430" y="564" width="15" height="15" fill="#8a1093"/><rect x="1444" y="564" width="15" height="15" fill="#93068f"/><rect x="1458" y="564" width="15" height="15" fill="#930083"/><rect x="1472" y="564" width="15" height="15" fill="#930079"/><rect x="1486" y="564" width="15" height="15" fill="#930070"/><rect x="1500" y="564" width="15" height="15" fill="#930068"/><rect x="1514" y="564" width="15" height="15" fill="#930060"/><rect x="1528" y="564" width="15" height="15" fill="#93005a"/><rect x="1542" y="564" width="15" height="15" fill="#930054"/><rect x="1556" y="564" width="15" height="15" fill="#93004f"/><rect x="1570" y="564" width="15" height="15" fill="#93004a"/><rect x="1584" y="564" width="15" height="15" fill="#930045"/><rect x="1598" y="564" width="15" height="15" fill="#930041"/><rect x="1612" y="564" width="15" height="15" fill="#93003d"/><rect x="1626" y="564" width="15" height="15" fill="#930039"/><rect x="1640" y="564" width="15" height="15" fill="#930036"/><rect x="1654" y="564" width="15" height="15" fill="#930033"/><rect x="1668" y="564" width="15" height="15" fill="#93002f"/><rect x="1682" y="564" width="15" height="15" fill="#93002c"/><rect x="1696" y="564" width="15" height="15" fill="#93002a"/><rect x="1710" y="564" width="15" height="15" fill="#930027"/><rect x="1724" y="564" width="15" height="15" fill="#930024"/><rect x="1738" y="564" width="15" height="15" fill="#930022"/><rect x="1752" y="564" width="15" height="15" fill="#93001f"/><rect x="1766" y="564" width="15" height="15" fill="#93001d"/><rect x="1780" y="564" width="15" height="15" fill="#93001a"/><rect x="1794" y="564" width="15" height="15" fill="#930018"/><rect x="1808" y="564" width="15" height="15" fill="#930015"/><rect x="1822" y="564" width="15" height="15" fill="#930013"/><rect x="1150" y="578" width="15" height="15" fill="#004793"/><rect x="1164" y="578" width="15" height="15" fill="#004593"/><rect x="1178" y="578" width="15" height="15" fill="#004493"/><rect x="1192" y="578" width="15" height="15" fill="#004293"/><rect x="1206" y="578" width="15" height="15" fill="#004093"/><rect x="1220" y="578" width="15" height="15" fill="#003d93"/><rect x="1234" y="578" width="15" height="15" fill="#003b93"/><rect x="1248" y="578" width="15" height="15" fill="#003993"/><rect x="1262" y="578" width="15" height="15" fill="#003693"/><rect x="1276" y="578" width="15" height="15" fill="#003493"/><rect x="1290" y="578" width="15" height="15" fill="#003193"/><rect x="1304" y="578" width="15" height="15" fill="#002d93"/><rect x="1318" y="578" width="15" height="15" fill="#182a93"/><rect x="1332" y="578" width="15" height="15" fill="#2a2693"/><rect x="1346" y="578" width="15" height="15" fill="#392293"/><rect x="1360" y="578" width="15" height="15" fill="#481e93"/><rect x="1374" y="578" width="15" height="15" fill="#551893"/><rect x="1388" y="578" width="15" height="15" fill="#631293"/><rect x="1402" y="578" width="15" height="15" fill="#700a93"/><rect x="1416" y="578" width="15" height="15" fill="#7d0093"/><rect x="1430" y="578" width="15" height="15" fill="#8a0093"/><rect x="1444" y="578" width="15" height="15" fill="#930090"/><rect x="1458" y="578" width="15" height="15" fill="#930084"/><rect x="1472" y="578" width="15" height="15" fill="#93007a"/><rect x="1486" y="578" width="15" height="15" fill="#930071"/><rect x="1500" y="578" width="15" height="15" fill="#93006a"/><rect x="1514" y="578" width="15" height="15" fill="#930063"/><rect x="1528" y="578" width="15" height="15" fill="#93005c"/><rect x="1542" y="578" width="15" height="15" fill="#930057"/><rect x="1556" y="578" width="15" height="15" fill="#930051"/><rect x="1570" y="578" width="15" height="15" fill="#93004c"/><rect x="1584" y="578" width="15" height="15" fill="#930048"/><rect x="1598" y="578" width="15" height="15" fill="#930044"/><rect x="1612" y="578" width="15" height="15" fill="#930040"/><rect x="1626" y="578" width="15" height="15" fill="#93003c"/><rect x="1640" y="578" width="15" height="15" fill="#930039"/><rect x="1654" y="578" width="15" height="15" fill="#930035"/><rect x="1668" y="578" width="15" height="15" fill="#930032"/><rect x="1682" y="578" width="15" height="15" fill="#93002f"/><rect x="1696" y="578" width="15" height="15" fill="#93002c"/><rect x="1710" y="578" width="15" height="15" fill="#93002a"/><rect x="1724" y="578" width="15" height="15" fill="#930027"/><rect x="1738" y="578" width="15" height="15" fill="#930024"/><rect x="1752" y="578" width="15" height="15" fill="#930022"/><rect x="1766" y="578" width="15" height="15" fill="#93001f"/><rect x="1780" y="578" width="15" height="15" fill="#93001d"/><rect x="1794" y="578" width="15" height="15" fill="#93001b"/><rect x="1808" y="578" width="15" height="15" fill="#930018"/><rect x="1822" y="578" width="15" height="15" fill="#930016"/><rect x="1150" y="592" width="15" height="15" fill="#003f93"/><rect x="1164" y="592" width="15" height="15" fill="#003d93"/><rect x="1178" y="592" width="15" height="15" fill="#003b93"/><rect x="1192" y="592" width="15" height="15" fill="#003993"/><rect x="1206" y="592" width="15" height="15" fill="#003793"/><rect x="1220" y="592" width="15" height="15" fill="#003493"/><rect x="1234" y="592" width="15" height="15" fill="#003293"/><rect x="1248" y="592" width="15" height="15" fill="#002f93"/><rect x="1262" y="592" width="15" height="15" fill="#002c93"/><rect x="1276" y="592" width="15" height="15" fill="#002993"/><rect x="1290" y="592" width="15" height="15" fill="#002693"/><rect x="1304" y="592" width="15" height="15" fill="#082293"/><rect x="1318" y="592" width="15" height="15" fill="#1e1e93"/><rect x="1332" y="592" width="15" height="15" fill="#2f1993"/><rect x="1346" y="592" width="15" height="15" fill="#3d1493"/><rect x="1360" y="592" width="15" height="15" fill="#4b0d93"/><rect x="1374" y="592" width="15" height="15" fill="#570493"/><rect x="1388" y="592" width="15" height="15" fill="#640093"/><rect x="1402" y="592" width="15" height="15" fill="#710093"/><rect x="1416" y="592" width="15" height="15" fill="#7d0093"/><rect x="1430" y="592" width="15" height="15" fill="#890093"/><rect x="1444" y="592" width="15" height="15" fill="#930091"/><rect x="1458" y="592" width="15" height="15" fill="#930086"/><rect x="1472" y="592" width="15" height="15" fill="#93007c"/><rect x="1486" y="592" width="15" height="15" fill="#930073"/><rect x="1500" y="592" width="15" height="15" fill="#93006c"/><rect x="1514" y="592" width="15" height="15" fill="#930065"/><rect x="1528" y="592" width="15" height="15" fill="#93005e"/><rect x="1542" y="592" width="15" height="15" fill="#930059"/><rect x="1556" y="592" width="15" height="15" fill="#930053"/><rect x="1570" y="592" width="15" height="15" fill="#93004f"/><rect x="1584" y="592" width="15" height="15" fill="#93004a"/><rect x="1598" y="592" width="15" height="15" fill="#930046"/><rect x="1612" y="592" width="15" height="15" fill="#930042"/><rect x="1626" y="592" width="15" height="15" fill="#93003e"/><rect x="1640" y="592" width="15" height="15" fill="#93003b"/><rect x="1654" y="592" width="15" height="15" fill="#930038"/><rect x="1668" y="592" width="15" height="15" fill="#930035"/><rect x="1682" y="592" width="15" height="15" fill="#930032"/><rect x="1696" y="592" width="15" height="15" fill="#93002f"/><rect x="1710" y="592" width="15" height="15" fill="#93002c"/><rect x="1724" y="592" width="15" height="15" fill="#930029"/><rect x="1738" y="592" width="15" height="15" fill="#930027"/><rect x="1752" y="592" width="15" height="15" fill="#930024"/><rect x="1766" y="592" width="15" height="15" fill="#930022"/><rect x="1780" y="592" width="15" height="15" fill="#930020"/><rect x="1794" y="592" width="15" height="15" fill="#93001e"/><rect x="1808" y="592" width="15" height="15" fill="#93001b"/><rect x="1822" y="592" width="15" height="15" fill="#930019"/><rect x="1150" y="606" width="15" height="15" fill="#003793"/><rect x="1164" y="606" width="15" height="15" fill="#003593"/><rect x="1178" y="606" width="15" height="15" fill="#003393"/><rect x="1192" y="606" width="15" height="15" fill="#003093"/><rect x="1206" y="606" width="15" height="15" fill="#002e93"/><rect x="1220" y="606" width="15" height="15" fill="#002b93"/><rect x="1234" y="606" width="15" height="15" fill="#002893"/><rect x="1248" y="606" width="15" height="15" fill="#002593"/><rect x="1262" y="606" width="15" height="15" fill="#002293"/><rect x="1276" y="606" width="15" height="15" fill="#001e93"/><rect x="1290" y="606" width="15" height="15" fill="#001a93"/><rect x="1304" y="606" width="15" height="15" fill="#111593"/><rect x="1318" y="606" width="15" height="15" fill="#241093"/><rect x="1332" y="606" width="15" height="15" fill="#330993"/><rect x="1346" y="606" width="15" height="15" fill="#400093"/><rect x="1360" y="606" width="15" height="15" fill="#4d0093"/><rect x="1374" y="606" width="15" height="15" fill="#590093"/><rect x="1388" y="606" width="15" height="15" fill="#650093"/><rect x="1402" y="606" width="15" height="15" fill="#710093"/><rect x="1416" y="606" width="15" height="15" fill="#7d0093"/><rect x="1430" y="606" width="15" height="15" fill="#890093"/><rect x="1444" y="606" width="15" height="15" fill="#930092"/><rect x="1458" y="606" width="15" height="15" fill="#930087"/><rect x="1472" y="606" width="15" height="15" fill="#93007d"/><rect x="1486" y="606" width="15" height="15" fill="#930075"/><rect x="1500" y="606" width="15" height="15" fill="#93006d"/><rect x="1514" y="606" width="15" height="15" fill="#930067"/><rect x="1528" y="606" width="15" height="15" fill="#930060"/><rect x="1542" y="606" width="15" height="15" fill="#93005b"/><rect x="1556" y="606" width="15" height="15" fill="#930056"/><rect x="1570" y="606" width="15" height="15" fill="#930051"/><rect x="1584" y="606" width="15" height="15" fill="#93004c"/><rect x="1598" y="606" width="15" height="15" fill="#930048"/><rect x="1612" y="606" width="15" height="15" fill="#930044"/><rect x="1626" y="606" width="15" height="15" fill="#930041"/><rect x="1640" y="606" width="15" height="15" fill="#93003d"/><rect x="1654" y="606" width="15" height="15" fill="#93003a"/><rect x="1668" y="606" width="15" height="15" fill="#930037"/><rect x="1682" y="606" width="15" height="15" fill="#930034"/><rect x="1696" y="606" width="15" height="15" fill="#930031"/><rect x="1710" y="606" width="15" height="15" fill="#93002f"/><rect x="1724" y="606" width="15" height="15" fill="#93002c"/><rect x="1738" y="606" width="15" height="15" fill="#930029"/><rect x="1752" y="606" width="15" height="15" fill="#930027"/><rect x="1766" y="606" width="15" height="15" fill="#930025"/><rect x="1780" y="606" width="15" height="15" fill="#930022"/><rect x="1794" y="606" width="15" height="15" fill="#930020"/><rect x="1808" y="606" width="15" height="15" fill="#93001e"/><rect x="1822" y="606" width="15" height="15" fill="#93001c"/><rect x="1150" y="620" width="15" height="15" fill="#002f93"/><rect x="1164" y="620" width="15" height="15" fill="#002d93"/><rect x="1178" y="620" width="15" height="15" fill="#002a93"/><rect x="1192" y="620" width="15" height="15" fill="#002893"/><rect x="1206" y="620" width="15" height="15" fill="#002593"/><rect x="1220" y="620" width="15" height="15" fill="#002293"/><rect x="1234" y="620" width="15" height="15" fill="#001e93"/><rect x="1248" y="620" width="15" height="15" fill="#001a93"/><rect x="1262" y="620" width="15" height="15" fill="#001693"/><rect x="1276" y="620" width="15" height="15" fill="#001193"/><rect x="1290" y="620" width="15" height="15" fill="#000b93"/><rect x="1304" y="620" width="15" height="15" fill="#180393"/><rect x="1318" y="620" width="15" height="15" fill="#290093"/><rect x="1332" y="620" width="15" height="15" fill="#360093"/><rect x="1346" y="620" width="15" height="15" fill="#430093"/><rect x="1360" y="620" width="15" height="15" fill="#4f0093"/><rect x="1374" y="620" width="15" height="15" fill="#5b0093"/><rect x="1388" y="620" width="15" height="15" fill="#670093"/><rect x="1402" y="620" width="15" height="15" fill="#720093"/><rect x="1416" y="620" width="15" height="15" fill="#7d0093"/><rect x="1430" y="620" width="15" height="15" fill="#890093"/><rect x="1444" y="620" width="15" height="15" fill="#930093"/><rect x="1458" y="620" width="15" height="15" fill="#930088"/><rect x="1472" y="620" width="15" height="15" fill="#93007f"/><rect x="1486" y="620" width="15" height="15" fill="#930076"/><rect x="1500" y="620" width="15" height="15" fill="#93006f"/><rect x="1514" y="620" width="15" height="15" fill="#930068"/><rect x="1528" y="620" width="15" height="15" fill="#930062"/><rect x="1542" y="620" width="15" height="15" fill="#93005d"/><rect x="1556" y="620" width="15" height="15" fill="#930058"/><rect x="1570" y="620" width="15" height="15" fill="#930053"/><rect x="1584" y="620" width="15" height="15" fill="#93004f"/><rect x="1598" y="620" width="15" height="15" fill="#93004a"/><rect x="1612" y="620" width="15" height="15" fill="#930047"/><rect x="1626" y="620" width="15" height="15" fill="#930043"/><rect x="1640" y="620" width="15" height="15" fill="#930040"/><rect x="1654" y="620" width="15" height="15" fill="#93003c"/><rect x="1668" y="620" width="15" height="15" fill="#930039"/><rect x="1682" y="620" width="15" height="15" fill="#930036"/><rect x="1696" y="620" width="15" height="15" fill="#930034"/><rect x="1710" y="620" width="15" height="15" fill="#930031"/><rect x="1724" y="620" width="15" height="15" fill="#93002e"/><rect x="1738" y="620" width="15" height="15" fill="#93002c"/><rect x="1752" y="620" width="15" height="15" fill="#930029"/><rect x="1766" y="620" width="15" height="15" fill="#930027"/><rect x="1780" y="620" width="15" height="15" fill="#930025"/><rect x="1794" y="620" width="15" height="15" fill="#930023"/><rect x="1808" y="620" width="15" height="15" fill="#930020"/><rect x="1822" y="620" width="15" height="15" fill="#93001e"/><rect x="1150" y="634" width="15" height="15" fill="#002793"/><rect x="1164" y="634" width="15" height="15" fill="#002493"/><rect x="1178" y="634" width="15" height="15" fill="#002193"/><rect x="1192" y="634" width="15" height="15" fill="#001e93"/><rect x="1206" y="634" width="15" height="15" fill="#001b93"/><rect x="1220" y="634" width="15" height="15" fill="#001793"/><rect x="1234" y="634" width="15" height="15" fill="#001393"/><rect x="1248" y="634" width="15" height="15" fill="#000e93"/><rect x="1262" y="634" width="15" height="15" fill="#000793"/><rect x="1276" y="634" width="15" height="15" fill="#000093"/><rect x="1290" y="634" width="15" height="15" fill="#0b0093"/><rect x="1304" y="634" width="15" height="15" fill="#1e0093"/><rect x="1318" y="634" width="15" height="15" fill="#2d0093"/><rect x="1332" y="634" width="15" height="15" fill="#3a0093"/><rect x="1346" y="634" width="15" height="15" fill="#460093"/><rect x="1360" y="634" width="15" height="15" fill="#510093"/><rect x="1374" y="634" width="15" height="15" fill="#5d0093"/><rect x="1388" y="634" width="15" height="15" fill="#680093"/><rect x="1402" y="634" width="15" height="15" fill="#730093"/><rect x="1416" y="634" width="15" height="15" fill="#7e0093"/><rect x="1430" y="634" width="15" height="15" fill="#880093"/><rect x="1444" y="634" width="15" height="15" fill="#930093"/><rect x="1458" y="634" width="15" height="15" fill="#930089"/><rect x="1472" y="634" width="15" height="15" fill="#930080"/><rect x="1486" y="634" width="15" height="15" fill="#930078"/><rect x="1500" y="634" width="15" height="15" fill="#930071"/><rect x="1514" y="634" width="15" height="15" fill="#93006a"/><rect x="1528" y="634" width="15" height="15" fill="#930064"/><rect x="1542" y="634" width="15" height="15" fill="#93005f"/><rect x="1556" y="634" width="15" height="15" fill="#93005a"/><rect x="1570" y="634" width="15" height="15" fill="#930055"/><rect x="1584" y="634" width="15" height="15" fill="#930051"/><rect x="1598" y="634" width="15" height="15" fill="#93004c"/><rect x="1612" y="634" width="15" height="15" fill="#930049"/><rect x="1626" y="634" width="15" height="15" fill="#930045"/><rect x="1640" y="634" width="15" height="15" fill="#930042"/><rect x="1654" y="634" width="15" height="15" fill="#93003e"/><rect x="1668" y="634" width="15" height="15" fill="#93003b"/><rect x="1682" y="634" width="15" height="15" fill="#930038"/><rect x="1696" y="634" width="15" height="15" fill="#930036"/><rect x="1710" y="634" width="15" height="15" fill="#930033"/><rect x="1724" y="634" width="15" height="15" fill="#930030"/><rect x="1738" y="634" width="15" height="15" fill="#93002e"/><rect x="1752" y="634" width="15" height="15" fill="#93002c"/><rect x="1766" y="634" width="15" height="15" fill="#930029"/><rect x="1780" y="634" width="15" height="15" fill="#930027"/><rect x="1794" y="634" width="15" height="15" fill="#930025"/><rect x="1808" y="634" width="15" height="15" fill="#930023"/><rect x="1822" y="634" width="15" height="15" fill="#930021"/><rect x="1150" y="648" width="15" height="15" fill="#001e93"/><rect x="1164" y="648" width="15" height="15" fill="#001b93"/><rect x="1178" y="648" width="15" height="15" fill="#001893"/><rect x="1192" y="648" width="15" height="15" fill="#001493"/><rect x="1206" y="648" width="15" height="15" fill="#000f93"/><rect x="1220" y="648" width="15" height="15" fill="#000a93"/><rect x="1234" y="648" width="15" height="15" fill="#000293"/><rect x="1248" y="648" width="15" height="15" fill="#000093"/><rect x="1262" y="648" width="15" height="15" fill="#000093"/><rect x="1276" y="648" width="15" height="15" fill="#000093"/><rect x="1290" y="648" width="15" height="15" fill="#130093"/><rect x="1304" y="648" width="15" height="15" fill="#230093"/><rect x="1318" y="648" width="15" height="15" fill="#310093"/><rect x="1332" y="648" width="15" height="15" fill="#3d0093"/><rect x="1346" y="648" width="15" height="15" fill="#480093"/><rect x="1360" y="648" width="15" height="15" fill="#530093"/><rect x="1374" y="648" width="15" height="15" fill="#5e0093"/><rect x="1388" y="648" width="15" height="15" fill="#690093"/><rect x="1402" y="648" width="15" height="15" fill="#730093"/><rect x="1416" y="648" width="15" height="15" fill="#7e0093"/><rect x="1430" y="648" width="15" height="15" fill="#880093"/><rect x="1444" y="648" width="15" height="15" fill="#930093"/><rect x="1458" y="648" width="15" height="15" fill="#93008a"/><rect x="1472" y="648" width="15" height="15" fill="#930081"/><rect x="1486" y="648" width="15" height="15" fill="#930079"/><rect x="1500" y="648" width="15" height="15" fill="#930072"/><rect x="1514" y="648" width="15" height="15" fill="#93006c"/><rect x="1528" y="648" width="15" height="15" fill="#930066"/><rect x="1542" y="648" width="15" height="15" fill="#930060"/><rect x="1556" y="648" width="15" height="15" fill="#93005b"/><rect x="1570" y="648" width="15" height="15" fill="#930057"/><rect x="1584" y="648" width="15" height="15" fill="#930052"/><rect x="1598" y="648" width="15" height="15" fill="#93004e"/><rect x="1612" y="648" width="15" height="15" fill="#93004b"/><rect x="1626" y="648" width="15" height="15" fill="#930047"/><rect x="1640" y="648" width="15" height="15" fill="#930044"/><rect x="1654" y="648" width="15" height="15" fill="#930040"/><rect x="1668" y="648" width="15" height="15" fill="#93003d"/><rect x="1682" y="648" width="15" height="15" fill="#93003b"/><rect x="1696" y="648" width="15" height="15" fill="#930038"/><rect x="1710" y="648" width="15" height="15" fill="#930035"/><rect x="1724" y="648" width="15" height="15" fill="#930033"/><rect x="1738" y="648" width="15" height="15" fill="#930030"/><rect x="1752" y="648" width="15" height="15" fill="#93002e"/><rect x="1766" y="648" width="15" height="15" fill="#93002c"/><rect x="1780" y="648" width="15" height="15" fill="#930029"/><rect x="1794" y="648" width="15" height="15" fill="#930027"/><rect x="1808" y="648" width="15" height="15" fill="#930025"/><rect x="1822" y="648" width="15" height="15" fill="#930023"/><rect x="1150" y="662" width="15" height="15" fill="#001593"/><rect x="1164" y="662" width="15" height="15" fill="#001193"/><rect x="1178" y="662" width="15" height="15" fill="#000c93"/><rect x="1192" y="662" width="15" height="15" fill="#000693"/><rect x="1206" y="662" width="15" height="15" fill="#000093"/><rect x="1220" y="662" width="15" height="15" fill="#000093"/><rect x="1234" y="662" width="15" height="15" fill="#000093"/><rect x="1248" y="662" width="15" height="15" fill="#000093"/><rect x="1262" y="662" width="15" height="15" fill="#000093"/><rect x="1276" y="662" width="15" height="15" fill="#050093"/><rect x="1290" y="662" width="15" height="15" fill="#190093"/><rect x="1304" y="662" width="15" height="15" fill="#270093"/><rect x="1318" y="662" width="15" height="15" fill="#340093"/><rect x="1332" y="662" width="15" height="15" fill="#3f0093"/><rect x="1346" y="662" width="15" height="15" fill="#4a0093"/><rect x="1360" y="662" width="15" height="15" fill="#550093"/><rect x="1374" y="662" width="15" height="15" fill="#5f0093"/><rect x="1388" y="662" width="15" height="15" fill="#6a0093"/><rect x="1402" y="662" width="15" height="15" fill="#740093"/><rect x="1416" y="662" width="15" height="15" fill="#7e0093"/><rect x="1430" y="662" width="15" height="15" fill="#880093"/><rect x="1444" y="662" width="15" height="15" fill="#920093"/><rect x="1458" y="662" width="15" height="15" fill="#93008b"/><rect x="1472" y="662" width="15" height="15" fill="#930082"/><rect x="1486" y="662" width="15" height="15" fill="#93007b"/><rect x="1500" y="662" width="15" height="15" fill="#930074"/><rect x="1514" y="662" width="15" height="15" fill="#93006d"/><rect x="1528" y="662" width="15" height="15" fill="#930067"/><rect x="1542" y="662" width="15" height="15" fill="#930062"/><rect x="1556" y="662" width="15" height="15" fill="#93005d"/><rect x="1570" y="662" width="15" height="15" fill="#930059"/><rect x="1584" y="662" width="15" height="15" fill="#930054"/><rect x="1598" y="662" width="15" height="15" fill="#930050"/><rect x="1612" y="662" width="15" height="15" fill="#93004c"/><rect x="1626" y="662" width="15" height="15" fill="#930049"/><rect x="1640" y="662" width="15" height="15" fill="#930046"/><rect x="1654" y="662" width="15" height="15" fill="#930042"/><rect x="1668" y="662" width="15" height="15" fill="#93003f"/><rect x="1682" y="662" width="15" height="15" fill="#93003d"/><rect x="1696" y="662" width="15" height="15" fill="#93003a"/><rect x="1710" y="662" width="15" height="15" fill="#930037"/><rect x="1724" y="662" width="15" height="15" fill="#930035"/><rect x="1738" y="662" width="15" height="15" fill="#930032"/><rect x="1752" y="662" width="15" height="15" fill="#930030"/><rect x="1766" y="662" width="15" height="15" fill="#93002e"/><rect x="1780" y="662" width="15" height="15" fill="#93002b"/><rect x="1794" y="662" width="15" height="15" fill="#930029"/><rect x="1808" y="662" width="15" height="15" fill="#930027"/><rect x="1822" y="662" width="15" height="15" fill="#930025"/><rect x="1150" y="676" width="15" height="15" fill="#001393"/><rect x="1164" y="676" width="15" height="15" fill="#000f93"/><rect x="1178" y="676" width="15" height="15" fill="#000a93"/><rect x="1192" y="676" width="15" height="15" fill="#000393"/><rect x="1206" y="676" width="15" height="15" fill="#000093"/><rect x="1220" y="676" width="15" height="15" fill="#000093"/><rect x="1234" y="676" width="15" height="15" fill="#000093"/><rect x="1248" y="676" width="15" height="15" fill="#000093"/><rect x="1262" y="676" width="15" height="15" fill="#000093"/><rect x="1276" y="676" width="15" height="15" fill="#070093"/><rect x="1290" y="676" width="15" height="15" fill="#1a0093"/><rect x="1304" y="676" width="15" height="15" fill="#280093"/><rect x="1318" y="676" width="15" height="15" fill="#340093"/><rect x="1332" y="676" width="15" height="15" fill="#400093"/><rect x="1346" y="676" width="15" height="15" fill="#4b0093"/><rect x="1360" y="676" width="15" height="15" fill="#550093"/><rect x="1374" y="676" width="15" height="15" fill="#600093"/><rect x="1388" y="676" width="15" height="15" fill="#6a0093"/><rect x="1402" y="676" width="15" height="15" fill="#740093"/><rect x="1416" y="676" width="15" height="15" fill="#7e0093"/><rect x="1430" y="676" width="15" height="15" fill="#880093"/><rect x="1444" y="676" width="15" height="15" fill="#920093"/><rect x="1458" y="676" width="15" height="15" fill="#93008b"/><rect x="1472" y="676" width="15" height="15" fill="#930082"/><rect x="1486" y="676" width="15" height="15" fill="#93007b"/><rect x="1500" y="676" width="15" height="15" fill="#930074"/><rect x="1514" y="676" width="15" height="15" fill="#93006d"/><rect x="1528" y="676" width="15" height="15" fill="#930068"/><rect x="1542" y="676" width="15" height="15" fill="#930062"/><rect x="1556" y="676" width="15" height="15" fill="#93005d"/><rect x="1570" y="676" width="15" height="15" fill="#930059"/><rect x="1584" y="676" width="15" height="15" fill="#930055"/><rect x="1598" y="676" width="15" height="15" fill="#930051"/><rect x="1612" y="676" width="15" height="15" fill="#93004d"/><rect x="1626" y="676" width="15" height="15" fill="#930049"/><rect x="1640" y="676" width="15" height="15" fill="#930046"/><rect x="1654" y="676" width="15" height="15" fill="#930043"/><rect x="1668" y="676" width="15" height="15" fill="#930040"/><rect x="1682" y="676" width="15" height="15" fill="#93003d"/><rect x="1696" y="676" width="15" height="15" fill="#93003a"/><rect x="1710" y="676" width="15" height="15" fill="#930037"/><rect x="1724" y="676" width="15" height="15" fill="#930035"/><rect x="1738" y="676" width="15" height="15" fill="#930032"/><rect x="1752" y="676" width="15" height="15" fill="#930030"/><rect x="1766" y="676" width="15" height="15" fill="#93002e"/><rect x="1780" y="676" width="15" height="15" fill="#93002c"/><rect x="1794" y="676" width="15" height="15" fill="#93002a"/><rect x="1808" y="676" width="15" height="15" fill="#930028"/><rect x="1822" y="676" width="15" height="15" fill="#930026"/></g></g>
<g clip-path="url(#cpT)"><g filter="url(#fb)"><rect x="1280" y="280" width="15" height="15" fill="#00ff48"/><rect x="1294" y="280" width="15" height="15" fill="#00ff43"/><rect x="1308" y="280" width="15" height="15" fill="#00ff3f"/><rect x="1322" y="280" width="15" height="15" fill="#00ff3a"/><rect x="1336" y="280" width="15" height="15" fill="#00ff34"/><rect x="1350" y="280" width="15" height="15" fill="#00ff2e"/><rect x="1364" y="280" width="15" height="15" fill="#00ff28"/><rect x="1378" y="280" width="15" height="15" fill="#00ff20"/><rect x="1392" y="280" width="15" height="15" fill="#00ff18"/><rect x="1406" y="280" width="15" height="15" fill="#00ff0d"/><rect x="1420" y="280" width="15" height="15" fill="#00ff00"/><rect x="1434" y="280" width="15" height="15" fill="#26ff00"/><rect x="1448" y="280" width="15" height="15" fill="#41ff00"/><rect x="1462" y="280" width="15" height="15" fill="#59ff00"/><rect x="1476" y="280" width="15" height="15" fill="#6eff00"/><rect x="1490" y="280" width="15" height="15" fill="#83ff00"/><rect x="1504" y="280" width="15" height="15" fill="#96ff00"/><rect x="1518" y="280" width="15" height="15" fill="#aaff00"/><rect x="1532" y="280" width="15" height="15" fill="#bdff00"/><rect x="1546" y="280" width="15" height="15" fill="#d0ff00"/><rect x="1560" y="280" width="15" height="15" fill="#e2ff00"/><rect x="1574" y="280" width="15" height="15" fill="#f5ff00"/><rect x="1588" y="280" width="15" height="15" fill="#fff500"/><rect x="1602" y="280" width="15" height="15" fill="#ffe400"/><rect x="1616" y="280" width="15" height="15" fill="#ffd500"/><rect x="1630" y="280" width="15" height="15" fill="#ffc800"/><rect x="1644" y="280" width="15" height="15" fill="#ffbc00"/><rect x="1658" y="280" width="15" height="15" fill="#ffb200"/><rect x="1672" y="280" width="15" height="15" fill="#ffa800"/><rect x="1686" y="280" width="15" height="15" fill="#ff9f00"/><rect x="1700" y="280" width="15" height="15" fill="#ff9600"/><rect x="1714" y="280" width="15" height="15" fill="#ff8e00"/><rect x="1728" y="280" width="15" height="15" fill="#ff8700"/><rect x="1280" y="294" width="15" height="15" fill="#00ff52"/><rect x="1294" y="294" width="15" height="15" fill="#00ff4e"/><rect x="1308" y="294" width="15" height="15" fill="#00ff4a"/><rect x="1322" y="294" width="15" height="15" fill="#00ff46"/><rect x="1336" y="294" width="15" height="15" fill="#00ff41"/><rect x="1350" y="294" width="15" height="15" fill="#00ff3b"/><rect x="1364" y="294" width="15" height="15" fill="#00ff36"/><rect x="1378" y="294" width="15" height="15" fill="#00ff2f"/><rect x="1392" y="294" width="15" height="15" fill="#00ff28"/><rect x="1406" y="294" width="15" height="15" fill="#00ff20"/><rect x="1420" y="294" width="15" height="15" fill="#0fff16"/><rect x="1434" y="294" width="15" height="15" fill="#33ff09"/><rect x="1448" y="294" width="15" height="15" fill="#4dff00"/><rect x="1462" y="294" width="15" height="15" fill="#64ff00"/><rect x="1476" y="294" width="15" height="15" fill="#7aff00"/><rect x="1490" y="294" width="15" height="15" fill="#8fff00"/><rect x="1504" y="294" width="15" height="15" fill="#a3ff00"/><rect x="1518" y="294" width="15" height="15" fill="#b7ff00"/><rect x="1532" y="294" width="15" height="15" fill="#cbff00"/><rect x="1546" y="294" width="15" height="15" fill="#deff00"/><rect x="1560" y="294" width="15" height="15" fill="#f2ff00"/><rect x="1574" y="294" width="15" height="15" fill="#fff700"/><rect x="1588" y="294" width="15" height="15" fill="#ffe600"/><rect x="1602" y="294" width="15" height="15" fill="#ffd600"/><rect x="1616" y="294" width="15" height="15" fill="#ffc800"/><rect x="1630" y="294" width="15" height="15" fill="#ffbc00"/><rect x="1644" y="294" width="15" height="15" fill="#ffb100"/><rect x="1658" y="294" width="15" height="15" fill="#ffa700"/><rect x="1672" y="294" width="15" height="15" fill="#ff9d00"/><rect x="1686" y="294" width="15" height="15" fill="#ff9500"/><rect x="1700" y="294" width="15" height="15" fill="#ff8d00"/><rect x="1714" y="294" width="15" height="15" fill="#ff8500"/><rect x="1728" y="294" width="15" height="15" fill="#ff7e00"/><rect x="1280" y="308" width="15" height="15" fill="#00ff5d"/><rect x="1294" y="308" width="15" height="15" fill="#00ff5a"/><rect x="1308" y="308" width="15" height="15" fill="#00ff56"/><rect x="1322" y="308" width="15" height="15" fill="#00ff51"/><rect x="1336" y="308" width="15" height="15" fill="#00ff4d"/><rect x="1350" y="308" width="15" height="15" fill="#00ff48"/><rect x="1364" y="308" width="15" height="15" fill="#00ff43"/><rect x="1378" y="308" width="15" height="15" fill="#00ff3d"/><rect x="1392" y="308" width="15" height="15" fill="#00ff37"/><rect x="1406" y="308" width="15" height="15" fill="#00ff30"/><rect x="1420" y="308" width="15" height="15" fill="#20ff29"/><rect x="1434" y="308" width="15" height="15" fill="#3fff20"/><rect x="1448" y="308" width="15" height="15" fill="#59ff15"/><rect x="1462" y="308" width="15" height="15" fill="#70ff05"/><rect x="1476" y="308" width="15" height="15" fill="#86ff00"/><rect x="1490" y="308" width="15" height="15" fill="#9cff00"/><rect x="1504" y="308" width="15" height="15" fill="#b0ff00"/><rect x="1518" y="308" width="15" height="15" fill="#c5ff00"/><rect x="1532" y="308" width="15" height="15" fill="#daff00"/><rect x="1546" y="308" width="15" height="15" fill="#eeff00"/><rect x="1560" y="308" width="15" height="15" fill="#fffa00"/><rect x="1574" y="308" width="15" height="15" fill="#ffe800"/><rect x="1588" y="308" width="15" height="15" fill="#ffd700"/><rect x="1602" y="308" width="15" height="15" fill="#ffc900"/><rect x="1616" y="308" width="15" height="15" fill="#ffbc00"/><rect x="1630" y="308" width="15" height="15" fill="#ffb000"/><rect x="1644" y="308" width="15" height="15" fill="#ffa500"/><rect x="1658" y="308" width="15" height="15" fill="#ff9c00"/><rect x="1672" y="308" width="15" height="15" fill="#ff9300"/><rect x="1686" y="308" width="15" height="15" fill="#ff8b00"/><rect x="1700" y="308" width="15" height="15" fill="#ff8300"/><rect x="1714" y="308" width="15" height="15" fill="#ff7c00"/><rect x="1728" y="308" width="15" height="15" fill="#ff7500"/><rect x="1280" y="322" width="15" height="15" fill="#00ff69"/><rect x="1294" y="322" width="15" height="15" fill="#00ff65"/><rect x="1308" y="322" width="15" height="15" fill="#00ff61"/><rect x="1322" y="322" width="15" height="15" fill="#00ff5d"/><rect x="1336" y="322" width="15" height="15" fill="#00ff59"/><rect x="1350" y="322" width="15" height="15" fill="#00ff55"/><rect x="1364" y="322" width="15" height="15" fill="#00ff50"/><rect x="1378" y="322" width="15" height="15" fill="#00ff4b"/><rect x="1392" y="322" width="15" height="15" fill="#00ff45"/><rect x="1406" y="322" width="15" height="15" fill="#00ff3f"/><rect x="1420" y="322" width="15" height="15" fill="#2fff39"/><rect x="1434" y="322" width="15" height="15" fill="#4cff31"/><rect x="1448" y="322" width="15" height="15" fill="#65ff29"/><rect x="1462" y="322" width="15" height="15" fill="#7dff1f"/><rect x="1476" y="322" width="15" height="15" fill="#94ff13"/><rect x="1490" y="322" width="15" height="15" fill="#a9ff00"/><rect x="1504" y="322" width="15" height="15" fill="#bfff00"/><rect x="1518" y="322" width="15" height="15" fill="#d4ff00"/><rect x="1532" y="322" width="15" height="15" fill="#eaff00"/><rect x="1546" y="322" width="15" height="15" fill="#fffd00"/><rect x="1560" y="322" width="15" height="15" fill="#ffe900"/><rect x="1574" y="322" width="15" height="15" fill="#ffd800"/><rect x="1588" y="322" width="15" height="15" fill="#ffc900"/><rect x="1602" y="322" width="15" height="15" fill="#ffbb00"/><rect x="1616" y="322" width="15" height="15" fill="#ffaf00"/><rect x="1630" y="322" width="15" height="15" fill="#ffa400"/><rect x="1644" y="322" width="15" height="15" fill="#ff9a00"/><rect x="1658" y="322" width="15" height="15" fill="#ff9100"/><rect x="1672" y="322" width="15" height="15" fill="#ff8900"/><rect x="1686" y="322" width="15" height="15" fill="#ff8100"/><rect x="1700" y="322" width="15" height="15" fill="#ff7a00"/><rect x="1714" y="322" width="15" height="15" fill="#ff7300"/><rect x="1728" y="322" width="15" height="15" fill="#ff6c00"/><rect x="1280" y="336" width="15" height="15" fill="#00ff74"/><rect x="1294" y="336" width="15" height="15" fill="#00ff71"/><rect x="1308" y="336" width="15" height="15" fill="#00ff6e"/><rect x="1322" y="336" width="15" height="15" fill="#00ff6a"/><rect x="1336" y="336" width="15" height="15" fill="#00ff66"/><rect x="1350" y="336" width="15" height="15" fill="#00ff62"/><rect x="1364" y="336" width="15" height="15" fill="#00ff5d"/><rect x="1378" y="336" width="15" height="15" fill="#00ff59"/><rect x="1392" y="336" width="15" height="15" fill="#00ff54"/><rect x="1406" y="336" width="15" height="15" fill="#19ff4e"/><rect x="1420" y="336" width="15" height="15" fill="#3dff48"/><rect x="1434" y="336" width="15" height="15" fill="#59ff42"/><rect x="1448" y="336" width="15" height="15" fill="#73ff3b"/><rect x="1462" y="336" width="15" height="15" fill="#8bff33"/><rect x="1476" y="336" width="15" height="15" fill="#a2ff2a"/><rect x="1490" y="336" width="15" height="15" fill="#b8ff1f"/><rect x="1504" y="336" width="15" height="15" fill="#cfff11"/><rect x="1518" y="336" width="15" height="15" fill="#e5ff00"/><rect x="1532" y="336" width="15" height="15" fill="#fcff00"/><rect x="1546" y="336" width="15" height="15" fill="#ffec00"/><rect x="1560" y="336" width="15" height="15" fill="#ffd900"/><rect x="1574" y="336" width="15" height="15" fill="#ffc900"/><rect x="1588" y="336" width="15" height="15" fill="#ffbb00"/><rect x="1602" y="336" width="15" height="15" fill="#ffae00"/><rect x="1616" y="336" width="15" height="15" fill="#ffa300"/><rect x="1630" y="336" width="15" height="15" fill="#ff9900"/><rect x="1644" y="336" width="15" height="15" fill="#ff8f00"/><rect x="1658" y="336" width="15" height="15" fill="#ff8700"/><rect x="1672" y="336" width="15" height="15" fill="#ff7f00"/><rect x="1686" y="336" width="15" height="15" fill="#ff7700"/><rect x="1700" y="336" width="15" height="15" fill="#ff7000"/><rect x="1714" y="336" width="15" height="15" fill="#ff6a00"/><rect x="1728" y="336" width="15" height="15" fill="#ff6300"/><rect x="1280" y="350" width="15" height="15" fill="#00ff81"/><rect x="1294" y="350" width="15" height="15" fill="#00ff7d"/><rect x="1308" y="350" width="15" height="15" fill="#00ff7a"/><rect x="1322" y="350" width="15" height="15" fill="#00ff77"/><rect x="1336" y="350" width="15" height="15" fill="#00ff73"/><rect x="1350" y="350" width="15" height="15" fill="#00ff6f"/><rect x="1364" y="350" width="15" height="15" fill="#00ff6b"/><rect x="1378" y="350" width="15" height="15" fill="#00ff67"/><rect x="1392" y="350" width="15" height="15" fill="#00ff62"/><rect x="1406" y="350" width="15" height="15" fill="#2aff5d"/><rect x="1420" y="350" width="15" height="15" fill="#4bff58"/><rect x="1434" y="350" width="15" height="15" fill="#67ff52"/><rect x="1448" y="350" width="15" height="15" fill="#81ff4c"/><rect x="1462" y="350" width="15" height="15" fill="#99ff45"/><rect x="1476" y="350" width="15" height="15" fill="#b1ff3d"/><rect x="1490" y="350" width="15" height="15" fill="#c9ff34"/><rect x="1504" y="350" width="15" height="15" fill="#e0ff2a"/><rect x="1518" y="350" width="15" height="15" fill="#f8ff1e"/><rect x="1532" y="350" width="15" height="15" fill="#ffee0c"/><rect x="1546" y="350" width="15" height="15" fill="#ffda00"/><rect x="1560" y="350" width="15" height="15" fill="#ffc900"/><rect x="1574" y="350" width="15" height="15" fill="#ffbb00"/><rect x="1588" y="350" width="15" height="15" fill="#ffad00"/><rect x="1602" y="350" width="15" height="15" fill="#ffa200"/><rect x="1616" y="350" width="15" height="15" fill="#ff9700"/><rect x="1630" y="350" width="15" height="15" fill="#ff8d00"/><rect x="1644" y="350" width="15" height="15" fill="#ff8400"/><rect x="1658" y="350" width="15" height="15" fill="#ff7c00"/><rect x="1672" y="350" width="15" height="15" fill="#ff7400"/><rect x="1686" y="350" width="15" height="15" fill="#ff6d00"/><rect x="1700" y="350" width="15" height="15" fill="#ff6600"/><rect x="1714" y="350" width="15" height="15" fill="#ff6000"/><rect x="1728" y="350" width="15" height="15" fill="#ff5a00"/><rect x="1280" y="364" width="15" height="15" fill="#00ff8d"/><rect x="1294" y="364" width="15" height="15" fill="#00ff8b"/><rect x="1308" y="364" width="15" height="15" fill="#00ff88"/><rect x="1322" y="364" width="15" height="15" fill="#00ff85"/><rect x="1336" y="364" width="15" height="15" fill="#00ff81"/><rect x="1350" y="364" width="15" height="15" fill="#00ff7e"/><rect x="1364" y="364" width="15" height="15" fill="#00ff7a"/><rect x="1378" y="364" width="15" height="15" fill="#00ff76"/><rect x="1392" y="364" width="15" height="15" fill="#0eff72"/><rect x="1406" y="364" width="15" height="15" fill="#3aff6d"/><rect x="1420" y="364" width="15" height="15" fill="#59ff68"/><rect x="1434" y="364" width="15" height="15" fill="#75ff63"/><rect x="1448" y="364" width="15" height="15" fill="#90ff5d"/><rect x="1462" y="364" width="15" height="15" fill="#a9ff57"/><rect x="1476" y="364" width="15" height="15" fill="#c2ff50"/><rect x="1490" y="364" width="15" height="15" fill="#dbff49"/><rect x="1504" y="364" width="15" height="15" fill="#f4ff40"/><rect x="1518" y="364" width="15" height="15" fill="#fff134"/><rect x="1532" y="364" width="15" height="15" fill="#ffdc25"/><rect x="1546" y="364" width="15" height="15" fill="#ffca17"/><rect x="1560" y="364" width="15" height="15" fill="#ffba05"/><rect x="1574" y="364" width="15" height="15" fill="#ffac00"/><rect x="1588" y="364" width="15" height="15" fill="#ffa000"/><rect x="1602" y="364" width="15" height="15" fill="#ff9500"/><rect x="1616" y="364" width="15" height="15" fill="#ff8b00"/><rect x="1630" y="364" width="15" height="15" fill="#ff8200"/><rect x="1644" y="364" width="15" height="15" fill="#ff7900"/><rect x="1658" y="364" width="15" height="15" fill="#ff7100"/><rect x="1672" y="364" width="15" height="15" fill="#ff6a00"/><rect x="1686" y="364" width="15" height="15" fill="#ff6300"/><rect x="1700" y="364" width="15" height="15" fill="#ff5d00"/><rect x="1714" y="364" width="15" height="15" fill="#ff5700"/><rect x="1728" y="364" width="15" height="15" fill="#ff5100"/><rect x="1280" y="378" width="15" height="15" fill="#00ff9b"/><rect x="1294" y="378" width="15" height="15" fill="#00ff98"/><rect x="1308" y="378" width="15" height="15" fill="#00ff96"/><rect x="1322" y="378" width="15" height="15" fill="#00ff93"/><rect x="1336" y="378" width="15" height="15" fill="#00ff90"/><rect x="1350" y="378" width="15" height="15" fill="#00ff8d"/><rect x="1364" y="378" width="15" height="15" fill="#00ff8a"/><rect x="1378" y="378" width="15" height="15" fill="#00ff86"/><rect x="1392" y="378" width="15" height="15" fill="#23ff82"/><rect x="1406" y="378" width="15" height="15" fill="#49ff7e"/><rect x="1420" y="378" width="15" height="15" fill="#68ff7a"/><rect x="1434" y="378" width="15" height="15" fill="#85ff75"/><rect x="1448" y="378" width="15" height="15" fill="#a0ff70"/><rect x="1462" y="378" width="15" height="15" fill="#bbff6a"/><rect x="1476" y="378" width="15" height="15" fill="#d5ff64"/><rect x="1490" y="378" width="15" height="15" fill="#efff5e"/><rect x="1504" y="378" width="15" height="15" fill="#fff452"/><rect x="1518" y="378" width="15" height="15" fill="#ffdd44"/><rect x="1532" y="378" width="15" height="15" fill="#ffca36"/><rect x="1546" y="378" width="15" height="15" fill="#ffba2a"/><rect x="1560" y="378" width="15" height="15" fill="#ffab1e"/><rect x="1574" y="378" width="15" height="15" fill="#ff9e11"/><rect x="1588" y="378" width="15" height="15" fill="#ff9300"/><rect x="1602" y="378" width="15" height="15" fill="#ff8800"/><rect x="1616" y="378" width="15" height="15" fill="#ff7f00"/><rect x="1630" y="378" width="15" height="15" fill="#ff7600"/><rect x="1644" y="378" width="15" height="15" fill="#ff6e00"/><rect x="1658" y="378" width="15" height="15" fill="#ff6700"/><rect x="1672" y="378" width="15" height="15" fill="#ff6000"/><rect x="1686" y="378" width="15" height="15" fill="#ff5900"/><rect x="1700" y="378" width="15" height="15" fill="#ff5300"/><rect x="1714" y="378" width="15" height="15" fill="#ff4d00"/><rect x="1728" y="378" width="15" height="15" fill="#ff4700"/><rect x="1280" y="392" width="15" height="15" fill="#00ffaa"/><rect x="1294" y="392" width="15" height="15" fill="#00ffa7"/><rect x="1308" y="392" width="15" height="15" fill="#00ffa5"/><rect x="1322" y="392" width="15" height="15" fill="#00ffa2"/><rect x="1336" y="392" width="15" height="15" fill="#00ffa0"/><rect x="1350" y="392" width="15" height="15" fill="#00ff9d"/><rect x="1364" y="392" width="15" height="15" fill="#00ff9a"/><rect x="1378" y="392" width="15" height="15" fill="#00ff97"/><rect x="1392" y="392" width="15" height="15" fill="#35ff94"/><rect x="1406" y="392" width="15" height="15" fill="#59ff90"/><rect x="1420" y="392" width="15" height="15" fill="#78ff8c"/><rect x="1434" y="392" width="15" height="15" fill="#96ff88"/><rect x="1448" y="392" width="15" height="15" fill="#b2ff83"/><rect x="1462" y="392" width="15" height="15" fill="#ceff7e"/><rect x="1476" y="392" width="15" height="15" fill="#eaff79"/><rect x="1490" y="392" width="15" height="15" fill="#fff770"/><rect x="1504" y="392" width="15" height="15" fill="#ffdf5f"/><rect x="1518" y="392" width="15" height="15" fill="#ffcb51"/><rect x="1532" y="392" width="15" height="15" fill="#ffb944"/><rect x="1546" y="392" width="15" height="15" fill="#ffaa38"/><rect x="1560" y="392" width="15" height="15" fill="#ff9c2d"/><rect x="1574" y="392" width="15" height="15" fill="#ff9023"/><rect x="1588" y="392" width="15" height="15" fill="#ff8618"/><rect x="1602" y="392" width="15" height="15" fill="#ff7c0c"/><rect x="1616" y="392" width="15" height="15" fill="#ff7300"/><rect x="1630" y="392" width="15" height="15" fill="#ff6b00"/><rect x="1644" y="392" width="15" height="15" fill="#ff6300"/><rect x="1658" y="392" width="15" height="15" fill="#ff5c00"/><rect x="1672" y="392" width="15" height="15" fill="#ff5500"/><rect x="1686" y="392" width="15" height="15" fill="#ff4f00"/><rect x="1700" y="392" width="15" height="15" fill="#ff4900"/><rect x="1714" y="392" width="15" height="15" fill="#ff4300"/><rect x="1728" y="392" width="15" height="15" fill="#ff3e00"/><rect x="1280" y="406" width="15" height="15" fill="#00ffb9"/><rect x="1294" y="406" width="15" height="15" fill="#00ffb7"/><rect x="1308" y="406" width="15" height="15" fill="#00ffb5"/><rect x="1322" y="406" width="15" height="15" fill="#00ffb3"/><rect x="1336" y="406" width="15" height="15" fill="#00ffb1"/><rect x="1350" y="406" width="15" height="15" fill="#00ffaf"/><rect x="1364" y="406" width="15" height="15" fill="#00ffac"/><rect x="1378" y="406" width="15" height="15" fill="#1affa9"/><rect x="1392" y="406" width="15" height="15" fill="#47ffa7"/><rect x="1406" y="406" width="15" height="15" fill="#6affa4"/><rect x="1420" y="406" width="15" height="15" fill="#8affa0"/><rect x="1434" y="406" width="15" height="15" fill="#a8ff9d"/><rect x="1448" y="406" width="15" height="15" fill="#c6ff99"/><rect x="1462" y="406" width="15" height="15" fill="#e4ff95"/><rect x="1476" y="406" width="15" height="15" fill="#fffb8e"/><rect x="1490" y="406" width="15" height="15" fill="#ffe17b"/><rect x="1504" y="406" width="15" height="15" fill="#ffcb6a"/><rect x="1518" y="406" width="15" height="15" fill="#ffb85c"/><rect x="1532" y="406" width="15" height="15" fill="#ffa850"/><rect x="1546" y="406" width="15" height="15" fill="#ff9a44"/><rect x="1560" y="406" width="15" height="15" fill="#ff8e3a"/><rect x="1574" y="406" width="15" height="15" fill="#ff8330"/><rect x="1588" y="406" width="15" height="15" fill="#ff7927"/><rect x="1602" y="406" width="15" height="15" fill="#ff6f1d"/><rect x="1616" y="406" width="15" height="15" fill="#ff6714"/><rect x="1630" y="406" width="15" height="15" fill="#ff5f08"/><rect x="1644" y="406" width="15" height="15" fill="#ff5800"/><rect x="1658" y="406" width="15" height="15" fill="#ff5100"/><rect x="1672" y="406" width="15" height="15" fill="#ff4a00"/><rect x="1686" y="406" width="15" height="15" fill="#ff4400"/><rect x="1700" y="406" width="15" height="15" fill="#ff3e00"/><rect x="1714" y="406" width="15" height="15" fill="#ff3900"/><rect x="1728" y="406" width="15" height="15" fill="#ff3300"/><rect x="1280" y="420" width="15" height="15" fill="#00ffca"/><rect x="1294" y="420" width="15" height="15" fill="#00ffc9"/><rect x="1308" y="420" width="15" height="15" fill="#00ffc7"/><rect x="1322" y="420" width="15" height="15" fill="#00ffc5"/><rect x="1336" y="420" width="15" height="15" fill="#00ffc4"/><rect x="1350" y="420" width="15" height="15" fill="#00ffc2"/><rect x="1364" y="420" width="15" height="15" fill="#00ffc0"/><rect x="1378" y="420" width="15" height="15" fill="#30ffbe"/><rect x="1392" y="420" width="15" height="15" fill="#59ffbb"/><rect x="1406" y="420" width="15" height="15" fill="#7dffb9"/><rect x="1420" y="420" width="15" height="15" fill="#9effb6"/><rect x="1434" y="420" width="15" height="15" fill="#bdffb4"/><rect x="1448" y="420" width="15" height="15" fill="#ddffb0"/><rect x="1462" y="420" width="15" height="15" fill="#fdffad"/><rect x="1476" y="420" width="15" height="15" fill="#ffe397"/><rect x="1490" y="420" width="15" height="15" fill="#ffcb84"/><rect x="1504" y="420" width="15" height="15" fill="#ffb874"/><rect x="1518" y="420" width="15" height="15" fill="#ffa766"/><rect x="1532" y="420" width="15" height="15" fill="#ff985a"/><rect x="1546" y="420" width="15" height="15" fill="#ff8b4f"/><rect x="1560" y="420" width="15" height="15" fill="#ff8044"/><rect x="1574" y="420" width="15" height="15" fill="#ff753b"/><rect x="1588" y="420" width="15" height="15" fill="#ff6c32"/><rect x="1602" y="420" width="15" height="15" fill="#ff632a"/><rect x="1616" y="420" width="15" height="15" fill="#ff5b21"/><rect x="1630" y="420" width="15" height="15" fill="#ff5319"/><rect x="1644" y="420" width="15" height="15" fill="#ff4c10"/><rect x="1658" y="420" width="15" height="15" fill="#ff4604"/><rect x="1672" y="420" width="15" height="15" fill="#ff3f00"/><rect x="1686" y="420" width="15" height="15" fill="#ff3900"/><rect x="1700" y="420" width="15" height="15" fill="#ff3300"/><rect x="1714" y="420" width="15" height="15" fill="#ff2e00"/><rect x="1728" y="420" width="15" height="15" fill="#ff2800"/><rect x="1280" y="434" width="15" height="15" fill="#00ffdd"/><rect x="1294" y="434" width="15" height="15" fill="#00ffdc"/><rect x="1308" y="434" width="15" height="15" fill="#00ffdb"/><rect x="1322" y="434" width="15" height="15" fill="#00ffda"/><rect x="1336" y="434" width="15" height="15" fill="#00ffd8"/><rect x="1350" y="434" width="15" height="15" fill="#00ffd7"/><rect x="1364" y="434" width="15" height="15" fill="#0cffd6"/><rect x="1378" y="434" width="15" height="15" fill="#44ffd4"/><rect x="1392" y="434" width="15" height="15" fill="#6dffd3"/><rect x="1406" y="434" width="15" height="15" fill="#91ffd1"/><rect x="1420" y="434" width="15" height="15" fill="#b3ffcf"/><rect x="1434" y="434" width="15" height="15" fill="#d5ffcd"/><rect x="1448" y="434" width="15" height="15" fill="#f7ffcb"/><rect x="1462" y="434" width="15" height="15" fill="#ffe6b5"/><rect x="1476" y="434" width="15" height="15" fill="#ffcc9f"/><rect x="1490" y="434" width="15" height="15" fill="#ffb78c"/><rect x="1504" y="434" width="15" height="15" fill="#ffa57d"/><rect x="1518" y="434" width="15" height="15" fill="#ff956f"/><rect x="1532" y="434" width="15" height="15" fill="#ff8863"/><rect x="1546" y="434" width="15" height="15" fill="#ff7c58"/><rect x="1560" y="434" width="15" height="15" fill="#ff714e"/><rect x="1574" y="434" width="15" height="15" fill="#ff6745"/><rect x="1588" y="434" width="15" height="15" fill="#ff5e3c"/><rect x="1602" y="434" width="15" height="15" fill="#ff5634"/><rect x="1616" y="434" width="15" height="15" fill="#ff4e2c"/><rect x="1630" y="434" width="15" height="15" fill="#ff4724"/><rect x="1644" y="434" width="15" height="15" fill="#ff401d"/><rect x="1658" y="434" width="15" height="15" fill="#ff3a15"/><rect x="1672" y="434" width="15" height="15" fill="#ff330c"/><rect x="1686" y="434" width="15" height="15" fill="#ff2d00"/><rect x="1700" y="434" width="15" height="15" fill="#ff2700"/><rect x="1714" y="434" width="15" height="15" fill="#ff2100"/><rect x="1728" y="434" width="15" height="15" fill="#ff1b00"/><rect x="1280" y="448" width="15" height="15" fill="#00fff1"/><rect x="1294" y="448" width="15" height="15" fill="#00fff1"/><rect x="1308" y="448" width="15" height="15" fill="#00fff0"/><rect x="1322" y="448" width="15" height="15" fill="#00fff0"/><rect x="1336" y="448" width="15" height="15" fill="#00ffef"/><rect x="1350" y="448" width="15" height="15" fill="#00ffef"/><rect x="1364" y="448" width="15" height="15" fill="#28ffee"/><rect x="1378" y="448" width="15" height="15" fill="#59ffee"/><rect x="1392" y="448" width="15" height="15" fill="#82ffed"/><rect x="1406" y="448" width="15" height="15" fill="#a8ffed"/><rect x="1420" y="448" width="15" height="15" fill="#ccffec"/><rect x="1434" y="448" width="15" height="15" fill="#f1ffeb"/><rect x="1448" y="448" width="15" height="15" fill="#ffe9d6"/><rect x="1462" y="448" width="15" height="15" fill="#ffcdbc"/><rect x="1476" y="448" width="15" height="15" fill="#ffb6a6"/><rect x="1490" y="448" width="15" height="15" fill="#ffa394"/><rect x="1504" y="448" width="15" height="15" fill="#ff9384"/><rect x="1518" y="448" width="15" height="15" fill="#ff8477"/><rect x="1532" y="448" width="15" height="15" fill="#ff786b"/><rect x="1546" y="448" width="15" height="15" fill="#ff6d60"/><rect x="1560" y="448" width="15" height="15" fill="#ff6356"/><rect x="1574" y="448" width="15" height="15" fill="#ff594d"/><rect x="1588" y="448" width="15" height="15" fill="#ff5145"/><rect x="1602" y="448" width="15" height="15" fill="#ff493d"/><rect x="1616" y="448" width="15" height="15" fill="#ff4135"/><rect x="1630" y="448" width="15" height="15" fill="#ff3a2e"/><rect x="1644" y="448" width="15" height="15" fill="#ff3327"/><rect x="1658" y="448" width="15" height="15" fill="#ff2d20"/><rect x="1672" y="448" width="15" height="15" fill="#ff2619"/><rect x="1686" y="448" width="15" height="15" fill="#ff2012"/><rect x="1700" y="448" width="15" height="15" fill="#ff1a09"/><rect x="1714" y="448" width="15" height="15" fill="#ff1300"/><rect x="1728" y="448" width="15" height="15" fill="#ff0b00"/><rect x="1280" y="462" width="15" height="15" fill="#00f5ff"/><rect x="1294" y="462" width="15" height="15" fill="#00f5ff"/><rect x="1308" y="462" width="15" height="15" fill="#00f5ff"/><rect x="1322" y="462" width="15" height="15" fill="#00f4ff"/><rect x="1336" y="462" width="15" height="15" fill="#00f4ff"/><rect x="1350" y="462" width="15" height="15" fill="#00f3ff"/><rect x="1364" y="462" width="15" height="15" fill="#3ef3ff"/><rect x="1378" y="462" width="15" height="15" fill="#6bf2ff"/><rect x="1392" y="462" width="15" height="15" fill="#92f2ff"/><rect x="1406" y="462" width="15" height="15" fill="#b8f1ff"/><rect x="1420" y="462" width="15" height="15" fill="#ddf1ff"/><rect x="1434" y="462" width="15" height="15" fill="#ffedfb"/><rect x="1448" y="462" width="15" height="15" fill="#ffcedb"/><rect x="1462" y="462" width="15" height="15" fill="#ffb5c1"/><rect x="1476" y="462" width="15" height="15" fill="#ffa0ac"/><rect x="1490" y="462" width="15" height="15" fill="#ff8f9a"/><rect x="1504" y="462" width="15" height="15" fill="#ff808b"/><rect x="1518" y="462" width="15" height="15" fill="#ff737e"/><rect x="1532" y="462" width="15" height="15" fill="#ff6872"/><rect x="1546" y="462" width="15" height="15" fill="#ff5d67"/><rect x="1560" y="462" width="15" height="15" fill="#ff545e"/><rect x="1574" y="462" width="15" height="15" fill="#ff4b55"/><rect x="1588" y="462" width="15" height="15" fill="#ff434c"/><rect x="1602" y="462" width="15" height="15" fill="#ff3b45"/><rect x="1616" y="462" width="15" height="15" fill="#ff343e"/><rect x="1630" y="462" width="15" height="15" fill="#ff2c37"/><rect x="1644" y="462" width="15" height="15" fill="#ff2530"/><rect x="1658" y="462" width="15" height="15" fill="#ff1f29"/><rect x="1672" y="462" width="15" height="15" fill="#ff1723"/><rect x="1686" y="462" width="15" height="15" fill="#ff101d"/><rect x="1700" y="462" width="15" height="15" fill="#ff0716"/><rect x="1714" y="462" width="15" height="15" fill="#ff000f"/><rect x="1728" y="462" width="15" height="15" fill="#ff0006"/><rect x="1280" y="476" width="15" height="15" fill="#00e0ff"/><rect x="1294" y="476" width="15" height="15" fill="#00dfff"/><rect x="1308" y="476" width="15" height="15" fill="#00ddff"/><rect x="1322" y="476" width="15" height="15" fill="#00dcff"/><rect x="1336" y="476" width="15" height="15" fill="#00dbff"/><rect x="1350" y="476" width="15" height="15" fill="#19daff"/><rect x="1364" y="476" width="15" height="15" fill="#4cd8ff"/><rect x="1378" y="476" width="15" height="15" fill="#74d7ff"/><rect x="1392" y="476" width="15" height="15" fill="#98d5ff"/><rect x="1406" y="476" width="15" height="15" fill="#bbd3ff"/><rect x="1420" y="476" width="15" height="15" fill="#ddd1ff"/><rect x="1434" y="476" width="15" height="15" fill="#ffcffe"/><rect x="1448" y="476" width="15" height="15" fill="#ffb4df"/><rect x="1462" y="476" width="15" height="15" fill="#ff9ec6"/><rect x="1476" y="476" width="15" height="15" fill="#ff8bb2"/><rect x="1490" y="476" width="15" height="15" fill="#ff7ca1"/><rect x="1504" y="476" width="15" height="15" fill="#ff6e92"/><rect x="1518" y="476" width="15" height="15" fill="#ff6284"/><rect x="1532" y="476" width="15" height="15" fill="#ff5779"/><rect x="1546" y="476" width="15" height="15" fill="#ff4d6e"/><rect x="1560" y="476" width="15" height="15" fill="#ff4465"/><rect x="1574" y="476" width="15" height="15" fill="#ff3c5c"/><rect x="1588" y="476" width="15" height="15" fill="#ff3454"/><rect x="1602" y="476" width="15" height="15" fill="#ff2c4c"/><rect x="1616" y="476" width="15" height="15" fill="#ff2445"/><rect x="1630" y="476" width="15" height="15" fill="#ff1d3e"/><rect x="1644" y="476" width="15" height="15" fill="#ff1538"/><rect x="1658" y="476" width="15" height="15" fill="#ff0c31"/><rect x="1672" y="476" width="15" height="15" fill="#ff002b"/><rect x="1686" y="476" width="15" height="15" fill="#ff0025"/><rect x="1700" y="476" width="15" height="15" fill="#ff0020"/><rect x="1714" y="476" width="15" height="15" fill="#ff001a"/><rect x="1728" y="476" width="15" height="15" fill="#ff0013"/><rect x="1280" y="490" width="15" height="15" fill="#00cbff"/><rect x="1294" y="490" width="15" height="15" fill="#00c9ff"/><rect x="1308" y="490" width="15" height="15" fill="#00c8ff"/><rect x="1322" y="490" width="15" height="15" fill="#00c6ff"/><rect x="1336" y="490" width="15" height="15" fill="#00c4ff"/><rect x="1350" y="490" width="15" height="15" fill="#2dc2ff"/><rect x="1364" y="490" width="15" height="15" fill="#58bfff"/><rect x="1378" y="490" width="15" height="15" fill="#7cbdff"/><rect x="1392" y="490" width="15" height="15" fill="#9dbaff"/><rect x="1406" y="490" width="15" height="15" fill="#bdb8ff"/><rect x="1420" y="490" width="15" height="15" fill="#ddb4ff"/><rect x="1434" y="490" width="15" height="15" fill="#fdb1ff"/><rect x="1448" y="490" width="15" height="15" fill="#ff9ae3"/><rect x="1462" y="490" width="15" height="15" fill="#ff87cb"/><rect x="1476" y="490" width="15" height="15" fill="#ff77b7"/><rect x="1490" y="490" width="15" height="15" fill="#ff68a6"/><rect x="1504" y="490" width="15" height="15" fill="#ff5c97"/><rect x="1518" y="490" width="15" height="15" fill="#ff518a"/><rect x="1532" y="490" width="15" height="15" fill="#ff467f"/><rect x="1546" y="490" width="15" height="15" fill="#ff3d74"/><rect x="1560" y="490" width="15" height="15" fill="#ff346b"/><rect x="1574" y="490" width="15" height="15" fill="#ff2b62"/><rect x="1588" y="490" width="15" height="15" fill="#ff235a"/><rect x="1602" y="490" width="15" height="15" fill="#ff1b53"/><rect x="1616" y="490" width="15" height="15" fill="#ff124c"/><rect x="1630" y="490" width="15" height="15" fill="#ff0745"/><rect x="1644" y="490" width="15" height="15" fill="#ff003f"/><rect x="1658" y="490" width="15" height="15" fill="#ff0039"/><rect x="1672" y="490" width="15" height="15" fill="#ff0033"/><rect x="1686" y="490" width="15" height="15" fill="#ff002d"/><rect x="1700" y="490" width="15" height="15" fill="#ff0028"/><rect x="1714" y="490" width="15" height="15" fill="#ff0022"/><rect x="1728" y="490" width="15" height="15" fill="#ff001c"/><rect x="1280" y="504" width="15" height="15" fill="#00b7ff"/><rect x="1294" y="504" width="15" height="15" fill="#00b5ff"/><rect x="1308" y="504" width="15" height="15" fill="#00b3ff"/><rect x="1322" y="504" width="15" height="15" fill="#00b0ff"/><rect x="1336" y="504" width="15" height="15" fill="#03aeff"/><rect x="1350" y="504" width="15" height="15" fill="#3cabff"/><rect x="1364" y="504" width="15" height="15" fill="#61a8ff"/><rect x="1378" y="504" width="15" height="15" fill="#82a5ff"/><rect x="1392" y="504" width="15" height="15" fill="#a1a1ff"/><rect x="1406" y="504" width="15" height="15" fill="#bf9dff"/><rect x="1420" y="504" width="15" height="15" fill="#dd99ff"/><rect x="1434" y="504" width="15" height="15" fill="#fb95ff"/><rect x="1448" y="504" width="15" height="15" fill="#ff82e6"/><rect x="1462" y="504" width="15" height="15" fill="#ff71cf"/><rect x="1476" y="504" width="15" height="15" fill="#ff62bc"/><rect x="1490" y="504" width="15" height="15" fill="#ff55ab"/><rect x="1504" y="504" width="15" height="15" fill="#ff499d"/><rect x="1518" y="504" width="15" height="15" fill="#ff3e90"/><rect x="1532" y="504" width="15" height="15" fill="#ff3484"/><rect x="1546" y="504" width="15" height="15" fill="#ff2b7a"/><rect x="1560" y="504" width="15" height="15" fill="#ff2171"/><rect x="1574" y="504" width="15" height="15" fill="#ff1868"/><rect x="1588" y="504" width="15" height="15" fill="#ff0d60"/><rect x="1602" y="504" width="15" height="15" fill="#ff0059"/><rect x="1616" y="504" width="15" height="15" fill="#ff0052"/><rect x="1630" y="504" width="15" height="15" fill="#ff004b"/><rect x="1644" y="504" width="15" height="15" fill="#ff0045"/><rect x="1658" y="504" width="15" height="15" fill="#ff003f"/><rect x="1672" y="504" width="15" height="15" fill="#ff0039"/><rect x="1686" y="504" width="15" height="15" fill="#ff0034"/><rect x="1700" y="504" width="15" height="15" fill="#ff002f"/><rect x="1714" y="504" width="15" height="15" fill="#ff0029"/><rect x="1728" y="504" width="15" height="15" fill="#ff0024"/><rect x="1280" y="518" width="15" height="15" fill="#00a4ff"/><rect x="1294" y="518" width="15" height="15" fill="#00a2ff"/><rect x="1308" y="518" width="15" height="15" fill="#009fff"/><rect x="1322" y="518" width="15" height="15" fill="#009cff"/><rect x="1336" y="518" width="15" height="15" fill="#1f98ff"/><rect x="1350" y="518" width="15" height="15" fill="#4895ff"/><rect x="1364" y="518" width="15" height="15" fill="#6a91ff"/><rect x="1378" y="518" width="15" height="15" fill="#888dff"/><rect x="1392" y="518" width="15" height="15" fill="#a589ff"/><rect x="1406" y="518" width="15" height="15" fill="#c184ff"/><rect x="1420" y="518" width="15" height="15" fill="#dd7fff"/><rect x="1434" y="518" width="15" height="15" fill="#fa79ff"/><rect x="1448" y="518" width="15" height="15" fill="#ff69e9"/><rect x="1462" y="518" width="15" height="15" fill="#ff5ad3"/><rect x="1476" y="518" width="15" height="15" fill="#ff4cc0"/><rect x="1490" y="518" width="15" height="15" fill="#ff40b0"/><rect x="1504" y="518" width="15" height="15" fill="#ff34a2"/><rect x="1518" y="518" width="15" height="15" fill="#ff2a95"/><rect x="1532" y="518" width="15" height="15" fill="#ff1f8a"/><rect x="1546" y="518" width="15" height="15" fill="#ff1480"/><rect x="1560" y="518" width="15" height="15" fill="#ff0776"/><rect x="1574" y="518" width="15" height="15" fill="#ff006e"/><rect x="1588" y="518" width="15" height="15" fill="#ff0066"/><rect x="1602" y="518" width="15" height="15" fill="#ff005e"/><rect x="1616" y="518" width="15" height="15" fill="#ff0058"/><rect x="1630" y="518" width="15" height="15" fill="#ff0051"/><rect x="1644" y="518" width="15" height="15" fill="#ff004b"/><rect x="1658" y="518" width="15" height="15" fill="#ff0045"/><rect x="1672" y="518" width="15" height="15" fill="#ff0040"/><rect x="1686" y="518" width="15" height="15" fill="#ff003a"/><rect x="1700" y="518" width="15" height="15" fill="#ff0035"/><rect x="1714" y="518" width="15" height="15" fill="#ff0030"/><rect x="1728" y="518" width="15" height="15" fill="#ff002b"/><rect x="1280" y="532" width="15" height="15" fill="#0092ff"/><rect x="1294" y="532" width="15" height="15" fill="#008fff"/><rect x="1308" y="532" width="15" height="15" fill="#008bff"/><rect x="1322" y="532" width="15" height="15" fill="#0088ff"/><rect x="1336" y="532" width="15" height="15" fill="#2f84ff"/><rect x="1350" y="532" width="15" height="15" fill="#5280ff"/><rect x="1364" y="532" width="15" height="15" fill="#717bff"/><rect x="1378" y="532" width="15" height="15" fill="#8d76ff"/><rect x="1392" y="532" width="15" height="15" fill="#a871ff"/><rect x="1406" y="532" width="15" height="15" fill="#c36bff"/><rect x="1420" y="532" width="15" height="15" fill="#de65ff"/><rect x="1434" y="532" width="15" height="15" fill="#f85eff"/><rect x="1448" y="532" width="15" height="15" fill="#ff50eb"/><rect x="1462" y="532" width="15" height="15" fill="#ff42d6"/><rect x="1476" y="532" width="15" height="15" fill="#ff35c4"/><rect x="1490" y="532" width="15" height="15" fill="#ff28b4"/><rect x="1504" y="532" width="15" height="15" fill="#ff1ca6"/><rect x="1518" y="532" width="15" height="15" fill="#ff0f9a"/><rect x="1532" y="532" width="15" height="15" fill="#ff008f"/><rect x="1546" y="532" width="15" height="15" fill="#ff0085"/><rect x="1560" y="532" width="15" height="15" fill="#ff007b"/><rect x="1574" y="532" width="15" height="15" fill="#ff0073"/><rect x="1588" y="532" width="15" height="15" fill="#ff006b"/><rect x="1602" y="532" width="15" height="15" fill="#ff0064"/><rect x="1616" y="532" width="15" height="15" fill="#ff005d"/><rect x="1630" y="532" width="15" height="15" fill="#ff0056"/><rect x="1644" y="532" width="15" height="15" fill="#ff0050"/><rect x="1658" y="532" width="15" height="15" fill="#ff004b"/><rect x="1672" y="532" width="15" height="15" fill="#ff0045"/><rect x="1686" y="532" width="15" height="15" fill="#ff0040"/><rect x="1700" y="532" width="15" height="15" fill="#ff003b"/><rect x="1714" y="532" width="15" height="15" fill="#ff0036"/><rect x="1728" y="532" width="15" height="15" fill="#ff0031"/><rect x="1280" y="546" width="15" height="15" fill="#0080ff"/><rect x="1294" y="546" width="15" height="15" fill="#007cff"/><rect x="1308" y="546" width="15" height="15" fill="#0078ff"/><rect x="1322" y="546" width="15" height="15" fill="#1074ff"/><rect x="1336" y="546" width="15" height="15" fill="#3b70ff"/><rect x="1350" y="546" width="15" height="15" fill="#5b6bff"/><rect x="1364" y="546" width="15" height="15" fill="#7765ff"/><rect x="1378" y="546" width="15" height="15" fill="#9260ff"/><rect x="1392" y="546" width="15" height="15" fill="#ab59ff"/><rect x="1406" y="546" width="15" height="15" fill="#c553ff"/><rect x="1420" y="546" width="15" height="15" fill="#de4bff"/><rect x="1434" y="546" width="15" height="15" fill="#f742ff"/><rect x="1448" y="546" width="15" height="15" fill="#ff35ee"/><rect x="1462" y="546" width="15" height="15" fill="#ff27d9"/><rect x="1476" y="546" width="15" height="15" fill="#ff18c7"/><rect x="1490" y="546" width="15" height="15" fill="#ff08b8"/><rect x="1504" y="546" width="15" height="15" fill="#ff00aa"/><rect x="1518" y="546" width="15" height="15" fill="#ff009e"/><rect x="1532" y="546" width="15" height="15" fill="#ff0093"/><rect x="1546" y="546" width="15" height="15" fill="#ff0089"/><rect x="1560" y="546" width="15" height="15" fill="#ff0080"/><rect x="1574" y="546" width="15" height="15" fill="#ff0078"/><rect x="1588" y="546" width="15" height="15" fill="#ff0070"/><rect x="1602" y="546" width="15" height="15" fill="#ff0069"/><rect x="1616" y="546" width="15" height="15" fill="#ff0062"/><rect x="1630" y="546" width="15" height="15" fill="#ff005c"/><rect x="1644" y="546" width="15" height="15" fill="#ff0056"/><rect x="1658" y="546" width="15" height="15" fill="#ff0050"/><rect x="1672" y="546" width="15" height="15" fill="#ff004a"/><rect x="1686" y="546" width="15" height="15" fill="#ff0045"/><rect x="1700" y="546" width="15" height="15" fill="#ff0040"/><rect x="1714" y="546" width="15" height="15" fill="#ff003b"/><rect x="1728" y="546" width="15" height="15" fill="#ff0037"/><rect x="1280" y="560" width="15" height="15" fill="#006fff"/><rect x="1294" y="560" width="15" height="15" fill="#006aff"/><rect x="1308" y="560" width="15" height="15" fill="#0066ff"/><rect x="1322" y="560" width="15" height="15" fill="#2261ff"/><rect x="1336" y="560" width="15" height="15" fill="#455bff"/><rect x="1350" y="560" width="15" height="15" fill="#6256ff"/><rect x="1364" y="560" width="15" height="15" fill="#7d4fff"/><rect x="1378" y="560" width="15" height="15" fill="#9649ff"/><rect x="1392" y="560" width="15" height="15" fill="#ae41ff"/><rect x="1406" y="560" width="15" height="15" fill="#c638ff"/><rect x="1420" y="560" width="15" height="15" fill="#de2fff"/><rect x="1434" y="560" width="15" height="15" fill="#f623ff"/><rect x="1448" y="560" width="15" height="15" fill="#ff13f0"/><rect x="1462" y="560" width="15" height="15" fill="#ff00dc"/><rect x="1476" y="560" width="15" height="15" fill="#ff00cb"/><rect x="1490" y="560" width="15" height="15" fill="#ff00bc"/><rect x="1504" y="560" width="15" height="15" fill="#ff00ae"/><rect x="1518" y="560" width="15" height="15" fill="#ff00a2"/><rect x="1532" y="560" width="15" height="15" fill="#ff0097"/><rect x="1546" y="560" width="15" height="15" fill="#ff008e"/><rect x="1560" y="560" width="15" height="15" fill="#ff0085"/><rect x="1574" y="560" width="15" height="15" fill="#ff007c"/><rect x="1588" y="560" width="15" height="15" fill="#ff0075"/><rect x="1602" y="560" width="15" height="15" fill="#ff006d"/><rect x="1616" y="560" width="15" height="15" fill="#ff0067"/><rect x="1630" y="560" width="15" height="15" fill="#ff0060"/><rect x="1644" y="560" width="15" height="15" fill="#ff005a"/><rect x="1658" y="560" width="15" height="15" fill="#ff0055"/><rect x="1672" y="560" width="15" height="15" fill="#ff004f"/><rect x="1686" y="560" width="15" height="15" fill="#ff004a"/><rect x="1700" y="560" width="15" height="15" fill="#ff0045"/><rect x="1714" y="560" width="15" height="15" fill="#ff0040"/><rect x="1728" y="560" width="15" height="15" fill="#ff003c"/><rect x="1280" y="574" width="15" height="15" fill="#005dff"/><rect x="1294" y="574" width="15" height="15" fill="#0058ff"/><rect x="1308" y="574" width="15" height="15" fill="#0053ff"/><rect x="1322" y="574" width="15" height="15" fill="#304dff"/><rect x="1336" y="574" width="15" height="15" fill="#4e47ff"/><rect x="1350" y="574" width="15" height="15" fill="#6940ff"/><rect x="1364" y="574" width="15" height="15" fill="#8238ff"/><rect x="1378" y="574" width="15" height="15" fill="#9930ff"/><rect x="1392" y="574" width="15" height="15" fill="#b026ff"/><rect x="1406" y="574" width="15" height="15" fill="#c719ff"/><rect x="1420" y="574" width="15" height="15" fill="#de08ff"/><rect x="1434" y="574" width="15" height="15" fill="#f500ff"/><rect x="1448" y="574" width="15" height="15" fill="#ff00f2"/><rect x="1462" y="574" width="15" height="15" fill="#ff00df"/><rect x="1476" y="574" width="15" height="15" fill="#ff00ce"/><rect x="1490" y="574" width="15" height="15" fill="#ff00bf"/><rect x="1504" y="574" width="15" height="15" fill="#ff00b2"/><rect x="1518" y="574" width="15" height="15" fill="#ff00a6"/><rect x="1532" y="574" width="15" height="15" fill="#ff009b"/><rect x="1546" y="574" width="15" height="15" fill="#ff0092"/><rect x="1560" y="574" width="15" height="15" fill="#ff0089"/><rect x="1574" y="574" width="15" height="15" fill="#ff0081"/><rect x="1588" y="574" width="15" height="15" fill="#ff0079"/><rect x="1602" y="574" width="15" height="15" fill="#ff0072"/><rect x="1616" y="574" width="15" height="15" fill="#ff006b"/><rect x="1630" y="574" width="15" height="15" fill="#ff0065"/><rect x="1644" y="574" width="15" height="15" fill="#ff005f"/><rect x="1658" y="574" width="15" height="15" fill="#ff0059"/><rect x="1672" y="574" width="15" height="15" fill="#ff0054"/><rect x="1686" y="574" width="15" height="15" fill="#ff004f"/><rect x="1700" y="574" width="15" height="15" fill="#ff004a"/><rect x="1714" y="574" width="15" height="15" fill="#ff0045"/><rect x="1728" y="574" width="15" height="15" fill="#ff0041"/><rect x="1280" y="588" width="15" height="15" fill="#004bff"/><rect x="1294" y="588" width="15" height="15" fill="#0045ff"/><rect x="1308" y="588" width="15" height="15" fill="#173fff"/><rect x="1322" y="588" width="15" height="15" fill="#3a38ff"/><rect x="1336" y="588" width="15" height="15" fill="#5630ff"/><rect x="1350" y="588" width="15" height="15" fill="#6f28ff"/><rect x="1364" y="588" width="15" height="15" fill="#861dff"/><rect x="1378" y="588" width="15" height="15" fill="#9d10ff"/><rect x="1392" y="588" width="15" height="15" fill="#b300ff"/><rect x="1406" y="588" width="15" height="15" fill="#c800ff"/><rect x="1420" y="588" width="15" height="15" fill="#de00ff"/><rect x="1434" y="588" width="15" height="15" fill="#f400ff"/><rect x="1448" y="588" width="15" height="15" fill="#ff00f4"/><rect x="1462" y="588" width="15" height="15" fill="#ff00e1"/><rect x="1476" y="588" width="15" height="15" fill="#ff00d1"/><rect x="1490" y="588" width="15" height="15" fill="#ff00c2"/><rect x="1504" y="588" width="15" height="15" fill="#ff00b5"/><rect x="1518" y="588" width="15" height="15" fill="#ff00aa"/><rect x="1532" y="588" width="15" height="15" fill="#ff009f"/><rect x="1546" y="588" width="15" height="15" fill="#ff0096"/><rect x="1560" y="588" width="15" height="15" fill="#ff008d"/><rect x="1574" y="588" width="15" height="15" fill="#ff0085"/><rect x="1588" y="588" width="15" height="15" fill="#ff007d"/><rect x="1602" y="588" width="15" height="15" fill="#ff0076"/><rect x="1616" y="588" width="15" height="15" fill="#ff006f"/><rect x="1630" y="588" width="15" height="15" fill="#ff0069"/><rect x="1644" y="588" width="15" height="15" fill="#ff0063"/><rect x="1658" y="588" width="15" height="15" fill="#ff005e"/><rect x="1672" y="588" width="15" height="15" fill="#ff0058"/><rect x="1686" y="588" width="15" height="15" fill="#ff0053"/><rect x="1700" y="588" width="15" height="15" fill="#ff004e"/><rect x="1714" y="588" width="15" height="15" fill="#ff004a"/><rect x="1728" y="588" width="15" height="15" fill="#ff0045"/><rect x="1280" y="602" width="15" height="15" fill="#0038ff"/><rect x="1294" y="602" width="15" height="15" fill="#0031ff"/><rect x="1308" y="602" width="15" height="15" fill="#2529ff"/><rect x="1322" y="602" width="15" height="15" fill="#4320ff"/><rect x="1336" y="602" width="15" height="15" fill="#5d15ff"/><rect x="1350" y="602" width="15" height="15" fill="#7405ff"/><rect x="1364" y="602" width="15" height="15" fill="#8a00ff"/><rect x="1378" y="602" width="15" height="15" fill="#a000ff"/><rect x="1392" y="602" width="15" height="15" fill="#b500ff"/><rect x="1406" y="602" width="15" height="15" fill="#c900ff"/><rect x="1420" y="602" width="15" height="15" fill="#de00ff"/><rect x="1434" y="602" width="15" height="15" fill="#f300ff"/><rect x="1448" y="602" width="15" height="15" fill="#ff00f6"/><rect x="1462" y="602" width="15" height="15" fill="#ff00e3"/><rect x="1476" y="602" width="15" height="15" fill="#ff00d3"/><rect x="1490" y="602" width="15" height="15" fill="#ff00c5"/><rect x="1504" y="602" width="15" height="15" fill="#ff00b9"/><rect x="1518" y="602" width="15" height="15" fill="#ff00ad"/><rect x="1532" y="602" width="15" height="15" fill="#ff00a3"/><rect x="1546" y="602" width="15" height="15" fill="#ff0099"/><rect x="1560" y="602" width="15" height="15" fill="#ff0091"/><rect x="1574" y="602" width="15" height="15" fill="#ff0088"/><rect x="1588" y="602" width="15" height="15" fill="#ff0081"/><rect x="1602" y="602" width="15" height="15" fill="#ff007a"/><rect x="1616" y="602" width="15" height="15" fill="#ff0073"/><rect x="1630" y="602" width="15" height="15" fill="#ff006d"/><rect x="1644" y="602" width="15" height="15" fill="#ff0067"/><rect x="1658" y="602" width="15" height="15" fill="#ff0062"/><rect x="1672" y="602" width="15" height="15" fill="#ff005d"/><rect x="1686" y="602" width="15" height="15" fill="#ff0057"/><rect x="1700" y="602" width="15" height="15" fill="#ff0053"/><rect x="1714" y="602" width="15" height="15" fill="#ff004e"/><rect x="1728" y="602" width="15" height="15" fill="#ff004a"/><rect x="1280" y="616" width="15" height="15" fill="#0023ff"/><rect x="1294" y="616" width="15" height="15" fill="#0a19ff"/><rect x="1308" y="616" width="15" height="15" fill="#300dff"/><rect x="1322" y="616" width="15" height="15" fill="#4b00ff"/><rect x="1336" y="616" width="15" height="15" fill="#6300ff"/><rect x="1350" y="616" width="15" height="15" fill="#7900ff"/><rect x="1364" y="616" width="15" height="15" fill="#8e00ff"/><rect x="1378" y="616" width="15" height="15" fill="#a200ff"/><rect x="1392" y="616" width="15" height="15" fill="#b600ff"/><rect x="1406" y="616" width="15" height="15" fill="#ca00ff"/><rect x="1420" y="616" width="15" height="15" fill="#de00ff"/><rect x="1434" y="616" width="15" height="15" fill="#f200ff"/><rect x="1448" y="616" width="15" height="15" fill="#ff00f7"/><rect x="1462" y="616" width="15" height="15" fill="#ff00e5"/><rect x="1476" y="616" width="15" height="15" fill="#ff00d6"/><rect x="1490" y="616" width="15" height="15" fill="#ff00c8"/><rect x="1504" y="616" width="15" height="15" fill="#ff00bc"/><rect x="1518" y="616" width="15" height="15" fill="#ff00b0"/><rect x="1532" y="616" width="15" height="15" fill="#ff00a6"/><rect x="1546" y="616" width="15" height="15" fill="#ff009d"/><rect x="1560" y="616" width="15" height="15" fill="#ff0094"/><rect x="1574" y="616" width="15" height="15" fill="#ff008c"/><rect x="1588" y="616" width="15" height="15" fill="#ff0085"/><rect x="1602" y="616" width="15" height="15" fill="#ff007e"/><rect x="1616" y="616" width="15" height="15" fill="#ff0077"/><rect x="1630" y="616" width="15" height="15" fill="#ff0071"/><rect x="1644" y="616" width="15" height="15" fill="#ff006b"/><rect x="1658" y="616" width="15" height="15" fill="#ff0066"/><rect x="1672" y="616" width="15" height="15" fill="#ff0060"/><rect x="1686" y="616" width="15" height="15" fill="#ff005b"/><rect x="1700" y="616" width="15" height="15" fill="#ff0057"/><rect x="1714" y="616" width="15" height="15" fill="#ff0052"/><rect x="1728" y="616" width="15" height="15" fill="#ff004e"/><rect x="1280" y="630" width="15" height="15" fill="#0003ff"/><rect x="1294" y="630" width="15" height="15" fill="#1b00ff"/><rect x="1308" y="630" width="15" height="15" fill="#3a00ff"/><rect x="1322" y="630" width="15" height="15" fill="#5200ff"/><rect x="1336" y="630" width="15" height="15" fill="#6800ff"/><rect x="1350" y="630" width="15" height="15" fill="#7d00ff"/><rect x="1364" y="630" width="15" height="15" fill="#9100ff"/><rect x="1378" y="630" width="15" height="15" fill="#a500ff"/><rect x="1392" y="630" width="15" height="15" fill="#b800ff"/><rect x="1406" y="630" width="15" height="15" fill="#cb00ff"/><rect x="1420" y="630" width="15" height="15" fill="#de00ff"/><rect x="1434" y="630" width="15" height="15" fill="#f100ff"/><rect x="1448" y="630" width="15" height="15" fill="#ff00f9"/><rect x="1462" y="630" width="15" height="15" fill="#ff00e7"/><rect x="1476" y="630" width="15" height="15" fill="#ff00d8"/><rect x="1490" y="630" width="15" height="15" fill="#ff00cb"/><rect x="1504" y="630" width="15" height="15" fill="#ff00be"/><rect x="1518" y="630" width="15" height="15" fill="#ff00b3"/><rect x="1532" y="630" width="15" height="15" fill="#ff00a9"/><rect x="1546" y="630" width="15" height="15" fill="#ff00a0"/><rect x="1560" y="630" width="15" height="15" fill="#ff0097"/><rect x="1574" y="630" width="15" height="15" fill="#ff0090"/><rect x="1588" y="630" width="15" height="15" fill="#ff0088"/><rect x="1602" y="630" width="15" height="15" fill="#ff0081"/><rect x="1616" y="630" width="15" height="15" fill="#ff007b"/><rect x="1630" y="630" width="15" height="15" fill="#ff0075"/><rect x="1644" y="630" width="15" height="15" fill="#ff006f"/><rect x="1658" y="630" width="15" height="15" fill="#ff0069"/><rect x="1672" y="630" width="15" height="15" fill="#ff0064"/><rect x="1686" y="630" width="15" height="15" fill="#ff005f"/><rect x="1700" y="630" width="15" height="15" fill="#ff005b"/><rect x="1714" y="630" width="15" height="15" fill="#ff0056"/><rect x="1728" y="630" width="15" height="15" fill="#ff0052"/><rect x="1280" y="644" width="15" height="15" fill="#0000ff"/><rect x="1294" y="644" width="15" height="15" fill="#2700ff"/><rect x="1308" y="644" width="15" height="15" fill="#4200ff"/><rect x="1322" y="644" width="15" height="15" fill="#5900ff"/><rect x="1336" y="644" width="15" height="15" fill="#6d00ff"/><rect x="1350" y="644" width="15" height="15" fill="#8100ff"/><rect x="1364" y="644" width="15" height="15" fill="#9400ff"/><rect x="1378" y="644" width="15" height="15" fill="#a700ff"/><rect x="1392" y="644" width="15" height="15" fill="#ba00ff"/><rect x="1406" y="644" width="15" height="15" fill="#cc00ff"/><rect x="1420" y="644" width="15" height="15" fill="#de00ff"/><rect x="1434" y="644" width="15" height="15" fill="#f000ff"/><rect x="1448" y="644" width="15" height="15" fill="#ff00fa"/><rect x="1462" y="644" width="15" height="15" fill="#ff00e9"/><rect x="1476" y="644" width="15" height="15" fill="#ff00da"/><rect x="1490" y="644" width="15" height="15" fill="#ff00cd"/><rect x="1504" y="644" width="15" height="15" fill="#ff00c1"/><rect x="1518" y="644" width="15" height="15" fill="#ff00b6"/><rect x="1532" y="644" width="15" height="15" fill="#ff00ac"/><rect x="1546" y="644" width="15" height="15" fill="#ff00a3"/><rect x="1560" y="644" width="15" height="15" fill="#ff009b"/><rect x="1574" y="644" width="15" height="15" fill="#ff0093"/><rect x="1588" y="644" width="15" height="15" fill="#ff008c"/><rect x="1602" y="644" width="15" height="15" fill="#ff0085"/><rect x="1616" y="644" width="15" height="15" fill="#ff007e"/><rect x="1630" y="644" width="15" height="15" fill="#ff0078"/><rect x="1644" y="644" width="15" height="15" fill="#ff0072"/><rect x="1658" y="644" width="15" height="15" fill="#ff006d"/><rect x="1672" y="644" width="15" height="15" fill="#ff0068"/><rect x="1686" y="644" width="15" height="15" fill="#ff0063"/><rect x="1700" y="644" width="15" height="15" fill="#ff005e"/><rect x="1714" y="644" width="15" height="15" fill="#ff005a"/><rect x="1728" y="644" width="15" height="15" fill="#ff0055"/></g></g>
</svg>
<canvas id="cie" style="left:1162px;top:137px;width:745px;height:536px"></canvas>
<canvas id="ins" style="left:1649px;top:145px;width:251px;height:199px"></canvas>
<svg width="1912" height="1040" style="left:0;top:0"><defs>
<linearGradient id="gLogo" x1="0" y1="0" x2="0" y2="1"><stop offset="0" stop-color="#e84a4a"/><stop offset="0.5" stop-color="#d82222"/><stop offset="1" stop-color="#c40c0c"/></linearGradient>
<linearGradient id="gLogoBtn" x1="0" y1="0" x2="0" y2="1"><stop offset="0" stop-color="#c01010"/><stop offset="1" stop-color="#e04848"/></linearGradient>
<linearGradient id="gRain" x1="0" y1="0" x2="1" y2="0">
 <stop offset="0" stop-color="#ff0000"/><stop offset="0.215" stop-color="#ff00ff"/><stop offset="0.36" stop-color="#7a20ff"/><stop offset="0.42" stop-color="#0040ff"/>
 <stop offset="0.52" stop-color="#00c080"/><stop offset="0.58" stop-color="#20e000"/><stop offset="0.81" stop-color="#ffff00"/><stop offset="0.9" stop-color="#ff8000"/><stop offset="1" stop-color="#ff0000"/></linearGradient>
<linearGradient id="gWid" x1="0" y1="0" x2="0" y2="1"><stop offset="0" stop-color="#4a4a4a"/><stop offset="1" stop-color="#707070"/></linearGradient>
<linearGradient id="gBtnLt" x1="0" y1="0" x2="0" y2="1"><stop offset="0" stop-color="#a0a0a0"/><stop offset="1" stop-color="#5a5a5a"/></linearGradient><linearGradient id="gCirc" x1="0" y1="0" x2="0" y2="1"><stop offset="0" stop-color="#585858"/><stop offset="1" stop-color="#909090"/></linearGradient><linearGradient id="gBtnDk" x1="0" y1="0" x2="0" y2="1"><stop offset="0" stop-color="#777"/><stop offset="1" stop-color="#444"/></linearGradient>
<linearGradient id="gDrop" x1="0" y1="0" x2="0" y2="1"><stop offset="0" stop-color="#3a3a3a"/><stop offset="1" stop-color="#7a7a7a"/></linearGradient>
<linearGradient id="gTile" x1="0" y1="0" x2="0" y2="1"><stop offset="0" stop-color="#aaaaaa"/><stop offset="0.4" stop-color="#8e8e8e"/><stop offset="0.65" stop-color="#6a6a6a"/><stop offset="1" stop-color="#565656"/></linearGradient>
<linearGradient id="gTileSel" x1="0" y1="0" x2="0" y2="1"><stop offset="0" stop-color="#1a1a1a"/><stop offset="1" stop-color="#3a3a3a"/></linearGradient>
<linearGradient id="gBar" x1="0" y1="0" x2="0" y2="1"><stop offset="0" stop-color="#3e3e3e"/><stop offset="1" stop-color="#1e1e1e"/></linearGradient>
<linearGradient id="gCtl" x1="0" y1="0" x2="0" y2="1"><stop offset="0" stop-color="#b4b4b4"/><stop offset="1" stop-color="#7c7c7c"/></linearGradient>
<linearGradient id="gCtlC" x1="0" y1="0" x2="0" y2="1"><stop offset="0" stop-color="#7a7a7a"/><stop offset="1" stop-color="#c0c0c0"/></linearGradient>
<linearGradient id="gYel" x1="0" y1="0" x2="0" y2="1"><stop offset="0" stop-color="#dcdc5a"/><stop offset="0.2" stop-color="#c2c200"/><stop offset="0.48" stop-color="#c0c000"/><stop offset="0.75" stop-color="#909008"/><stop offset="1" stop-color="#4a4800"/></linearGradient>
<linearGradient id="gGrn" x1="0" y1="0" x2="0" y2="1"><stop offset="0" stop-color="#109010"/><stop offset="1" stop-color="#006000"/></linearGradient>
<linearGradient id="gBlu" x1="0" y1="0" x2="0" y2="1"><stop offset="0" stop-color="#3030ff"/><stop offset="0.5" stop-color="#0000f0"/><stop offset="1" stop-color="#000060"/></linearGradient>
<linearGradient id="gIco" x1="0" y1="0" x2="1" y2="1"><stop offset="0" stop-color="#00d000"/><stop offset="0.5" stop-color="#ffd000"/><stop offset="1" stop-color="#d000d0"/></linearGradient><linearGradient id="hb" x1="0" y1="0" x2="1" y2="0"><stop offset="0" stop-color="#fff" stop-opacity="0.3"/><stop offset="0.18" stop-color="#fff" stop-opacity="0"/><stop offset="0.6" stop-color="#000" stop-opacity="0"/><stop offset="1" stop-color="#000" stop-opacity="0.5"/></linearGradient><linearGradient id="gWhite" x1="0" y1="0" x2="1" y2="0"><stop offset="0" stop-color="#ffffff"/><stop offset="0.5" stop-color="#f0f0f0"/><stop offset="1" stop-color="#909090"/></linearGradient><linearGradient id="fiU" x1="0" y1="0" x2="1" y2="1"><stop offset="0" stop-color="#609800"/><stop offset="0.5" stop-color="#9a9600"/><stop offset="1" stop-color="#9a7000"/></linearGradient><linearGradient id="fiL" x1="0" y1="0" x2="1" y2="1"><stop offset="0" stop-color="#b8ff00"/><stop offset="0.5" stop-color="#ffff10"/><stop offset="1" stop-color="#ffb400"/></linearGradient><clipPath id="cpH"><polygon points="1316.4,669.3 1316.4,669.3 1316.4,669.3 1316.4,669.3 1316.3,669.3 1316.3,669.3 1316.2,669.3 1316.2,669.4 1316.1,669.4 1316.1,669.4 1316.1,669.4 1316.0,669.4 1316.0,669.4 1315.9,669.4 1315.8,669.4 1315.8,669.4 1315.7,669.4 1315.6,669.4 1315.6,669.4 1315.5,669.4 1315.4,669.4 1315.4,669.4 1315.3,669.4 1315.2,669.4 1315.1,669.4 1315.0,669.4 1314.9,669.5 1314.8,669.5 1314.6,669.4 1314.5,669.4 1314.4,669.4 1314.2,669.3 1314.0,669.3 1313.8,669.2 1313.6,669.1 1313.3,668.9 1313.0,668.8 1312.8,668.7 1312.5,668.5 1312.2,668.3 1311.8,668.1 1311.4,667.9 1311.0,667.6 1310.5,667.3 1310.0,667.0 1309.5,666.7 1309.0,666.3 1308.4,666.0 1307.8,665.6 1307.1,665.1 1306.5,664.7 1305.7,664.2 1304.9,663.7 1304.0,663.2 1303.0,662.6 1302.0,661.9 1300.9,661.2 1299.7,660.5 1298.5,659.8 1297.3,659.0 1295.9,658.0 1294.5,657.1 1293.0,656.0 1291.4,654.9 1289.7,653.6 1288.0,652.2 1286.2,650.8 1284.3,649.1 1282.2,647.1 1279.9,644.8 1277.5,642.2 1274.8,639.2 1272.1,635.7 1269.1,631.8 1266.0,627.6 1262.7,622.8 1259.2,617.2 1255.5,611.0 1251.5,604.2 1247.4,596.6 1243.0,588.0 1238.2,578.6 1233.2,568.3 1228.1,557.1 1222.9,544.7 1217.8,531.3 1212.6,516.7 1207.4,501.2 1202.3,484.7 1197.2,467.1 1192.1,448.5 1187.3,429.2 1182.8,409.8 1178.8,390.0 1175.1,369.7 1171.8,349.5 1169.3,329.8 1167.3,310.5 1166.0,291.5 1165.3,273.1 1165.5,255.7 1166.5,239.0 1168.3,223.1 1170.9,208.3 1174.3,194.9 1178.7,183.0 1184.0,172.3 1190.0,163.1 1196.5,155.6 1203.6,149.9 1211.4,145.9 1219.6,143.3 1227.9,141.7 1236.5,141.4 1245.3,142.4 1254.3,144.3 1263.3,146.5 1272.3,149.1 1281.3,152.3 1290.4,155.9 1299.2,159.5 1307.8,163.1 1316.4,166.9 1324.8,170.9 1333.1,174.9 1341.3,179.1 1349.5,183.4 1357.6,187.8 1365.6,192.3 1373.7,196.9 1381.7,201.7 1389.7,206.5 1397.7,211.4 1405.7,216.4 1413.6,221.5 1421.6,226.6 1429.5,231.8 1437.4,237.0 1445.3,242.3 1453.2,247.7 1461.2,253.0 1469.1,258.5 1477.0,263.9 1485.0,269.4 1492.9,274.9 1500.8,280.5 1508.7,286.0 1516.6,291.6 1524.5,297.2 1532.4,302.7 1540.2,308.3 1548.1,313.8 1555.9,319.4 1563.6,324.9 1571.4,330.4 1579.0,335.9 1586.6,341.3 1594.2,346.7 1601.7,352.1 1609.2,357.5 1616.5,362.7 1623.8,367.9 1631.0,373.1 1638.2,378.2 1645.2,383.2 1652.1,388.2 1658.9,393.0 1665.6,397.8 1672.1,402.5 1678.5,407.0 1684.8,411.5 1690.9,415.9 1696.7,420.1 1702.3,424.1 1707.8,428.0 1713.0,431.7 1718.1,435.4 1723.0,438.9 1727.8,442.3 1732.5,445.6 1736.9,448.8 1741.1,451.8 1745.1,454.6 1748.9,457.3 1752.5,459.9 1755.9,462.3 1759.2,464.7 1762.3,466.9 1765.2,469.0 1767.9,471.0 1770.5,472.8 1773.0,474.6 1775.3,476.2 1777.5,477.8 1779.6,479.3 1781.5,480.6 1783.4,482.0 1785.1,483.2 1786.8,484.4 1788.3,485.5 1789.8,486.6 1791.3,487.7 1792.7,488.6 1794.0,489.6 1795.2,490.5 1796.4,491.4 1797.6,492.2 1798.7,492.9 1799.7,493.7 1800.7,494.4 1801.6,495.0 1802.4,495.6 1803.2,496.2 1804.0,496.7 1804.7,497.2 1805.3,497.6 1805.9,498.1 1806.5,498.5 1807.0,498.9 1807.5,499.2 1807.9,499.5 1808.4,499.8 1808.7,500.1 1809.1,500.4 1809.4,500.6 1809.7,500.8 1810.0,501.0 1810.2,501.2 1810.4,501.3 1810.6,501.5 1810.8,501.6 1811.0,501.7 1811.2,501.9 1811.5,502.1 1811.8,502.3 1812.2,502.6 1812.5,502.8 1812.7,503.0 1813.0,503.1 1813.2,503.3 1813.3,503.4 1813.5,503.5 1813.5,503.6 1813.6,503.6 1813.6,503.6"/></clipPath><clipPath id="cpT"><polygon points="1729.6,462.4 1428.1,290.5 1295.0,634.3"/></clipPath><filter id="fb" x="-5%" y="-5%" width="110%" height="110%"><feGaussianBlur stdDeviation="7"/></filter></defs>
<line x1="1156" y1="672.5" x2="1162" y2="672.5" stroke="#d0d0d0" stroke-width="2"/>
<text x="1155.5" y="678.0" font-size="16" fill="#e0e0e0" text-anchor="end" textLength="9" lengthAdjust="spacingAndGlyphs">0</text>
<line x1="1162.0" y1="672.5" x2="1162.0" y2="678.5" stroke="#d0d0d0" stroke-width="2"/>
<text x="1162.0" y="696" font-size="16" fill="#e0e0e0" text-anchor="middle" textLength="9" lengthAdjust="spacingAndGlyphs">0</text>
<line x1="1156" y1="608.84" x2="1162" y2="608.84" stroke="#d0d0d0" stroke-width="2"/>
<text x="1155.5" y="614.34" font-size="16" fill="#e0e0e0" text-anchor="end" textLength="23" lengthAdjust="spacingAndGlyphs">0,1</text>
<line x1="1250.69" y1="672.5" x2="1250.69" y2="678.5" stroke="#d0d0d0" stroke-width="2"/>
<text x="1250.69" y="696" font-size="16" fill="#e0e0e0" text-anchor="middle" textLength="23" lengthAdjust="spacingAndGlyphs">0,1</text>
<line x1="1156" y1="545.18" x2="1162" y2="545.18" stroke="#d0d0d0" stroke-width="2"/>
<text x="1155.5" y="550.68" font-size="16" fill="#e0e0e0" text-anchor="end" textLength="23" lengthAdjust="spacingAndGlyphs">0,2</text>
<line x1="1339.38" y1="672.5" x2="1339.38" y2="678.5" stroke="#d0d0d0" stroke-width="2"/>
<text x="1339.38" y="696" font-size="16" fill="#e0e0e0" text-anchor="middle" textLength="23" lengthAdjust="spacingAndGlyphs">0,2</text>
<line x1="1156" y1="481.52" x2="1162" y2="481.52" stroke="#d0d0d0" stroke-width="2"/>
<text x="1155.5" y="487.02" font-size="16" fill="#e0e0e0" text-anchor="end" textLength="23" lengthAdjust="spacingAndGlyphs">0,3</text>
<line x1="1428.07" y1="672.5" x2="1428.07" y2="678.5" stroke="#d0d0d0" stroke-width="2"/>
<text x="1428.07" y="696" font-size="16" fill="#e0e0e0" text-anchor="middle" textLength="23" lengthAdjust="spacingAndGlyphs">0,3</text>
<line x1="1156" y1="417.86" x2="1162" y2="417.86" stroke="#d0d0d0" stroke-width="2"/>
<text x="1155.5" y="423.36" font-size="16" fill="#e0e0e0" text-anchor="end" textLength="23" lengthAdjust="spacingAndGlyphs">0,4</text>
<line x1="1516.76" y1="672.5" x2="1516.76" y2="678.5" stroke="#d0d0d0" stroke-width="2"/>
<text x="1516.76" y="696" font-size="16" fill="#e0e0e0" text-anchor="middle" textLength="23" lengthAdjust="spacingAndGlyphs">0,4</text>
<line x1="1156" y1="354.2" x2="1162" y2="354.2" stroke="#d0d0d0" stroke-width="2"/>
<text x="1155.5" y="359.7" font-size="16" fill="#e0e0e0" text-anchor="end" textLength="23" lengthAdjust="spacingAndGlyphs">0,5</text>
<line x1="1605.45" y1="672.5" x2="1605.45" y2="678.5" stroke="#d0d0d0" stroke-width="2"/>
<text x="1605.45" y="696" font-size="16" fill="#e0e0e0" text-anchor="middle" textLength="23" lengthAdjust="spacingAndGlyphs">0,5</text>
<line x1="1156" y1="290.54" x2="1162" y2="290.54" stroke="#d0d0d0" stroke-width="2"/>
<text x="1155.5" y="296.04" font-size="16" fill="#e0e0e0" text-anchor="end" textLength="23" lengthAdjust="spacingAndGlyphs">0,6</text>
<line x1="1694.1399999999999" y1="672.5" x2="1694.1399999999999" y2="678.5" stroke="#d0d0d0" stroke-width="2"/>
<text x="1694.1399999999999" y="696" font-size="16" fill="#e0e0e0" text-anchor="middle" textLength="23" lengthAdjust="spacingAndGlyphs">0,6</text>
<line x1="1156" y1="226.88" x2="1162" y2="226.88" stroke="#d0d0d0" stroke-width="2"/>
<text x="1155.5" y="232.38" font-size="16" fill="#e0e0e0" text-anchor="end" textLength="23" lengthAdjust="spacingAndGlyphs">0,7</text>
<line x1="1782.83" y1="672.5" x2="1782.83" y2="678.5" stroke="#d0d0d0" stroke-width="2"/>
<text x="1782.83" y="696" font-size="16" fill="#e0e0e0" text-anchor="middle" textLength="23" lengthAdjust="spacingAndGlyphs">0,7</text>
<line x1="1156" y1="163.21999999999997" x2="1162" y2="163.21999999999997" stroke="#d0d0d0" stroke-width="2"/>
<text x="1155.5" y="168.71999999999997" font-size="16" fill="#e0e0e0" text-anchor="end" textLength="23" lengthAdjust="spacingAndGlyphs">0,8</text>
<line x1="1871.52" y1="672.5" x2="1871.52" y2="678.5" stroke="#d0d0d0" stroke-width="2"/>
<text x="1871.52" y="696" font-size="16" fill="#e0e0e0" text-anchor="middle" textLength="23" lengthAdjust="spacingAndGlyphs">0,8</text>
<rect x="1487.5" y="453.0" width="16" height="16" fill="none" stroke="#ffffff" stroke-width="2"/>
<rect x="1547.4" y="453.0" width="16" height="16" fill="none" stroke="#ffffff" stroke-width="2"/>
<rect x="1600.4" y="453.0" width="16" height="16" fill="none" stroke="#ffffff" stroke-width="2"/>
<rect x="1656.4" y="453.0" width="16" height="16" fill="none" stroke="#ffffff" stroke-width="2"/>
<rect x="1721.0" y="453.0" width="16" height="16" fill="none" stroke="#ffffff" stroke-width="2"/>
<rect x="1428.4" y="418.9" width="16" height="16" fill="none" stroke="#ffffff" stroke-width="2"/>
<rect x="1426.4" y="384.6" width="16" height="16" fill="none" stroke="#ffffff" stroke-width="2"/>
<rect x="1423.3" y="352.3" width="16" height="16" fill="none" stroke="#ffffff" stroke-width="2"/>
<rect x="1422.0" y="317.8" width="16" height="16" fill="none" stroke="#ffffff" stroke-width="2"/>
<rect x="1418.5" y="280.9" width="16" height="16" fill="none" stroke="#ffffff" stroke-width="2"/>
<rect x="1401.5" y="488.7" width="16" height="16" fill="none" stroke="#ffffff" stroke-width="2"/>
<rect x="1373.5" y="523.0" width="16" height="16" fill="none" stroke="#ffffff" stroke-width="2"/>
<rect x="1345.4" y="555.4" width="16" height="16" fill="none" stroke="#ffffff" stroke-width="2"/>
<rect x="1316.8" y="588.2" width="16" height="16" fill="none" stroke="#ffffff" stroke-width="2"/>
<rect x="1285.5" y="624.8" width="16" height="16" fill="none" stroke="#ffffff" stroke-width="2"/>
<rect x="1415.0" y="454.5" width="16" height="16" fill="none" stroke="#ffffff" stroke-width="2"/>
<rect x="1399.2" y="454.5" width="16" height="16" fill="none" stroke="#ffffff" stroke-width="2"/>
<rect x="1383.5" y="454.5" width="16" height="16" fill="none" stroke="#ffffff" stroke-width="2"/>
<rect x="1367.9" y="454.5" width="16" height="16" fill="none" stroke="#ffffff" stroke-width="2"/>
<rect x="1352.1" y="454.5" width="16" height="16" fill="none" stroke="#ffffff" stroke-width="2"/>
<rect x="1433.0" y="476.9" width="16" height="16" fill="none" stroke="#ffffff" stroke-width="2"/>
<rect x="1434.3" y="500.1" width="16" height="16" fill="none" stroke="#ffffff" stroke-width="2"/>
<rect x="1434.5" y="520.0" width="16" height="16" fill="none" stroke="#ffffff" stroke-width="2"/>
<rect x="1436.0" y="542.0" width="16" height="16" fill="none" stroke="#ffffff" stroke-width="2"/>
<rect x="1437.4" y="566.0" width="16" height="16" fill="none" stroke="#ffffff" stroke-width="2"/>
<rect x="1450.3" y="430.6" width="16" height="16" fill="none" stroke="#ffffff" stroke-width="2"/>
<rect x="1468.6" y="406.7" width="16" height="16" fill="none" stroke="#ffffff" stroke-width="2"/>
<rect x="1487.4" y="385.9" width="16" height="16" fill="none" stroke="#ffffff" stroke-width="2"/>
<rect x="1504.9" y="365.8" width="16" height="16" fill="none" stroke="#ffffff" stroke-width="2"/>
<rect x="1525.5" y="341.5" width="16" height="16" fill="none" stroke="#ffffff" stroke-width="2"/>
<rect x="1431.5" y="454.5" width="16" height="16" fill="none" stroke="#000000" stroke-width="2.4"/>
<circle cx="1491.7" cy="462.4" r="5.2" fill="#b89090" stroke="#000" stroke-width="1.6"/>
<circle cx="1556.3" cy="462.4" r="5.2" fill="#b87878" stroke="#000" stroke-width="1.6"/>
<circle cx="1611.4" cy="462.4" r="5.2" fill="#c06060" stroke="#000" stroke-width="1.6"/>
<circle cx="1669.5" cy="464.0" r="5.2" fill="#c04848" stroke="#000" stroke-width="1.6"/>
<circle cx="1725.5" cy="464.0" r="5.2" fill="#c01010" stroke="#000" stroke-width="1.6"/>
<circle cx="1433.3" cy="428.0" r="5.2" fill="#90a890" stroke="#000" stroke-width="1.6"/>
<circle cx="1431.3" cy="390.0" r="5.2" fill="#80aa80" stroke="#000" stroke-width="1.6"/>
<circle cx="1428.4" cy="351.3" r="5.2" fill="#6aaa6a" stroke="#000" stroke-width="1.6"/>
<circle cx="1425.3" cy="313.0" r="5.2" fill="#4caa4c" stroke="#000" stroke-width="1.6"/>
<circle cx="1422.5" cy="274.3" r="5.2" fill="#10c010" stroke="#000" stroke-width="1.6"/>
<circle cx="1409.5" cy="495.0" r="5.2" fill="#9a9ab8" stroke="#000" stroke-width="1.6"/>
<circle cx="1379.4" cy="532.0" r="5.2" fill="#8080b8" stroke="#000" stroke-width="1.6"/>
<circle cx="1351.5" cy="568.0" r="5.2" fill="#6868c0" stroke="#000" stroke-width="1.6"/>
<circle cx="1323.3" cy="603.6" r="5.2" fill="#5050c8" stroke="#000" stroke-width="1.6"/>
<circle cx="1296.2" cy="637.5" r="5.2" fill="#0000c8" stroke="#000" stroke-width="1.6"/>
<circle cx="1420.5" cy="462.3" r="5.2" fill="#a0b8b8" stroke="#000" stroke-width="1.6"/>
<circle cx="1406.4" cy="462.3" r="5.2" fill="#90c0bc" stroke="#000" stroke-width="1.6"/>
<circle cx="1389.5" cy="462.3" r="5.2" fill="#78bcb8" stroke="#000" stroke-width="1.6"/>
<circle cx="1372.5" cy="462.3" r="5.2" fill="#5ab8b8" stroke="#000" stroke-width="1.6"/>
<circle cx="1356.3" cy="460.9" r="5.2" fill="#00c0c0" stroke="#000" stroke-width="1.6"/>
<circle cx="1437.4" cy="485.0" r="5.2" fill="#c0a0c0" stroke="#000" stroke-width="1.6"/>
<circle cx="1439.3" cy="508.4" r="5.2" fill="#c090c0" stroke="#000" stroke-width="1.6"/>
<circle cx="1442.5" cy="531.0" r="5.2" fill="#c070c0" stroke="#000" stroke-width="1.6"/>
<circle cx="1444.6" cy="554.5" r="5.2" fill="#c050c0" stroke="#000" stroke-width="1.6"/>
<circle cx="1445.4" cy="577.1" r="5.2" fill="#c020c0" stroke="#000" stroke-width="1.6"/>
<circle cx="1454.8" cy="440.2" r="5.2" fill="#b8b898" stroke="#000" stroke-width="1.6"/>
<circle cx="1473.3" cy="414.7" r="5.2" fill="#b8b880" stroke="#000" stroke-width="1.6"/>
<circle cx="1494.3" cy="389.7" r="5.2" fill="#b8b868" stroke="#000" stroke-width="1.6"/>
<circle cx="1512.5" cy="365.6" r="5.2" fill="#c0c050" stroke="#000" stroke-width="1.6"/>
<circle cx="1531.5" cy="342.0" r="5.2" fill="#c8c820" stroke="#000" stroke-width="1.6"/>
<circle cx="1437.5" cy="461.0" r="5.2" fill="#ffffff" stroke="#000" stroke-width="1.6"/>
<rect x="1645" y="140.6" width="259" height="207.4" fill="none" stroke="#262626" stroke-width="6"/>
<rect x="1648.4" y="144.6" width="251.4" height="199.4" fill="none" stroke="#a8a8a8" stroke-width="1.6"/>
<rect x="1764.1" y="235.4" width="16.6" height="16.6" fill="none" stroke="#ffffff" stroke-width="2"/>
<circle cx="1766.5" cy="201.0" r="5.2" fill="#c8c020" stroke="#000" stroke-width="1.6"/>
<rect x="1162" y="137" width="745" height="535.5" fill="none" stroke="#a0a0a0" stroke-width="2"/>
<rect x="0" y="977.5" width="1912" height="62.5" fill="url(#gBar)"/>
<rect x="1596.5" y="977.5" width="315.5" height="62.5" fill="#262626"/>
<rect x="1" y="978" width="44.7" height="60.5" rx="4" fill="url(#gTile)"/>
<circle cx="23.7" cy="987" r="7.7" fill="#7a7a7a"/><path d="M19.5 989.5 L27.9 989.5 L23.7 984.5 Z" fill="#222"/>
<rect x="6.2" y="1004" width="34.8" height="30" rx="3" fill="#ffff00" stroke="#9a9a30" stroke-width="0.6"/>
<rect x="51.8" y="978" width="149.4" height="60.5" rx="4" fill="url(#gTile)"/>
<rect x="57.599999999999994" y="983.3" width="139.6" height="35.2" rx="3" fill="#c2c3a6" stroke="#a8a890" stroke-width="0.7"/>
<text x="126.5" y="1033.5" font-size="11" fill="#2c2c2c" text-anchor="middle" font-weight="bold">20%</text>
<rect x="203.95" y="978" width="149.4" height="60.5" rx="4" fill="url(#gTile)"/>
<rect x="209.75" y="983.3" width="139.6" height="35.2" rx="3" fill="#c3c287" stroke="#a8a890" stroke-width="0.7"/>
<text x="278.65" y="1033.5" font-size="11" fill="#2c2c2c" text-anchor="middle" font-weight="bold">40%</text>
<rect x="356.1" y="978" width="149.4" height="60.5" rx="4" fill="url(#gTile)"/>
<rect x="361.90000000000003" y="983.3" width="139.6" height="35.2" rx="3" fill="#c3c26b" stroke="#a8a890" stroke-width="0.7"/>
<text x="430.8" y="1033.5" font-size="11" fill="#2c2c2c" text-anchor="middle" font-weight="bold">60%</text>
<rect x="508.25000000000006" y="978" width="149.4" height="60.5" rx="4" fill="url(#gTile)"/>
<rect x="514.0500000000001" y="983.3" width="139.6" height="35.2" rx="3" fill="#c2c24b" stroke="#a8a890" stroke-width="0.7"/>
<text x="582.95" y="1033.5" font-size="11" fill="#2c2c2c" text-anchor="middle" font-weight="bold">80%</text>
<rect x="660.4" y="978" width="149.4" height="60.5" rx="4" fill="url(#gTileSel)"/>
<rect x="666.1999999999999" y="983.3" width="139.6" height="35.2" rx="3" fill="#c4c200" stroke="#3a3a10" stroke-width="0.7"/>
<text x="735.1" y="1033.5" font-size="11" fill="#ffffff" text-anchor="middle" font-weight="bold">100%</text>
<rect x="1597" y="978" width="48" height="66" rx="4" fill="url(#gCtl)"/>
<line x1="1597" y1="996.6" x2="1645" y2="996.6" stroke="#555" stroke-width="1.2"/>
<circle cx="1621" cy="986.5" r="6.5" fill="#8a8a8a"/><path d="M1617 989 L1625 989 L1621 984 Z" fill="#222"/>
<rect x="1606.5" y="1002.5" width="29" height="29" rx="4" fill="none" stroke="#2a2a2a" stroke-width="2.2"/><rect x="1614" y="1010.5" width="14" height="13" fill="#101010"/>
<rect x="1645.5" y="977.5" width="226.5" height="30" fill="url(#gCtl)"/>
<line x1="1692.5" y1="977.5" x2="1692.5" y2="1007.5" stroke="#3a3a3a" stroke-width="1"/>
<line x1="1737.5" y1="977.5" x2="1737.5" y2="1007.5" stroke="#3a3a3a" stroke-width="1"/>
<line x1="1782.3" y1="977.5" x2="1782.3" y2="1007.5" stroke="#3a3a3a" stroke-width="1"/>
<line x1="1827" y1="977.5" x2="1827" y2="1007.5" stroke="#3a3a3a" stroke-width="1"/>
<circle cx="1668.9" cy="992.8" r="10" fill="url(#gCtlC)" opacity="0.85"/>
<circle cx="1714.9" cy="992.8" r="10" fill="url(#gCtlC)" opacity="0.85"/>
<circle cx="1759.9" cy="992.8" r="10" fill="url(#gCtlC)" opacity="0.85"/>
<circle cx="1804.9" cy="992.8" r="10" fill="url(#gCtlC)" opacity="0.85"/>
<circle cx="1849.7" cy="992.8" r="10" fill="url(#gCtlC)" opacity="0.85"/>
<rect x="1665" y="989" width="8" height="8" fill="#1e1e1e"/>
<path d="M1712 988 L1719.5 992.8 L1712 997.6 Z" fill="#1e1e1e"/>
<path d="M1756.5 987.5 H1755 V998 H1756.5 M1763.5 987.5 H1765 V998 H1763.5" fill="none" stroke="#1e1e1e" stroke-width="1.6"/><circle cx="1758.6" cy="992.8" r="0.9" fill="#1e1e1e"/><circle cx="1761.4" cy="992.8" r="0.9" fill="#1e1e1e"/>
<path d="M1804.9 992.8 C1802 989 1797.5 989.5 1797.5 992.8 C1797.5 996 1802 996.5 1804.9 992.8 C1807.8 989 1812.3 989.5 1812.3 992.8 C1812.3 996 1807.8 996.5 1804.9 992.8 Z" fill="none" stroke="#1e1e1e" stroke-width="1.6"/>
<path d="M1844.8 991.5 A5.3 5.3 0 0 1 1853.5 988.5 M1854.6 994 A5.3 5.3 0 0 1 1846 997.2" fill="none" stroke="#1e1e1e" stroke-width="1.8"/><path d="M1852 986 L1856 986.5 L1855 990.5 Z M1847.5 999.6 L1843.6 999 L1844.6 995 Z" fill="#1e1e1e"/>
<circle cx="1896" cy="992.8" r="10" fill="#333"/>
<rect x="1645.5" y="1009.3" width="136.5" height="31" fill="url(#gCtl)"/>
<rect x="1782.5" y="1009.3" width="129.5" height="31" fill="url(#gCtl)"/>
<line x1="1782" y1="1009.3" x2="1782" y2="1040" stroke="#555" stroke-width="1"/>
<circle cx="1676.7" cy="1024" r="10" fill="url(#gCtlC)" opacity="0.85"/><circle cx="1890.3" cy="1024" r="10" fill="url(#gCtlC)" opacity="0.85"/>
<path d="M1676.5 1019.5 L1672 1024 L1676.5 1028.5 M1680.5 1019.5 L1676 1024 L1680.5 1028.5" fill="none" stroke="#1e1e1e" stroke-width="1.6"/>
<path d="M1886.5 1019.5 L1891 1024 L1886.5 1028.5 M1890.5 1019.5 L1895 1024 L1890.5 1028.5" fill="none" stroke="#1e1e1e" stroke-width="1.6"/>
<text x="1703.6" y="1032" font-size="22" fill="#222" textLength="52" lengthAdjust="spacingAndGlyphs">Back</text>
<text x="1810" y="1032" font-size="22" fill="#222" textLength="52" lengthAdjust="spacingAndGlyphs">Next</text>
</svg>
<script>
(function(){
var L0=[[0.1741,0.0050],[0.1740,0.0050],[0.1738,0.0049],[0.1736,0.0049],[0.1733,0.0048],[0.1730,0.0048],[0.1726,0.0048],[0.1721,0.0048],[0.1714,0.0051],[0.1703,0.0058],[0.1689,0.0069],[0.1669,0.0086],[0.1644,0.0109],[0.1611,0.0138],[0.1566,0.0177],[0.1510,0.0227],[0.1440,0.0297],[0.1355,0.0399],[0.1241,0.0578],[0.1096,0.0868],[0.0913,0.1327],[0.0687,0.2007],[0.0454,0.2950],[0.0235,0.4127],[0.0082,0.5384],[0.0039,0.6548],[0.0139,0.7502],[0.0389,0.8120],[0.0743,0.8338],[0.1142,0.8262],[0.1547,0.8059],[0.1929,0.7816],[0.2296,0.7543],[0.2658,0.7243],[0.3016,0.6923],[0.3373,0.6589],[0.3731,0.6245],[0.4087,0.5896],[0.4441,0.5547],[0.4788,0.5202],[0.5125,0.4866],[0.5448,0.4544],[0.5752,0.4242],[0.6029,0.3965],[0.6270,0.3725],[0.6482,0.3514],[0.6658,0.3340],[0.6801,0.3197],[0.6915,0.3083],[0.7006,0.2993],[0.7079,0.2920],[0.7140,0.2859],[0.7190,0.2809],[0.7230,0.2770],[0.7260,0.2740],[0.7283,0.2717],[0.7300,0.2700],[0.7311,0.2689],[0.7320,0.2680],[0.7334,0.2666],[0.7344,0.2656],[0.7347,0.2653]];
var LO=[];
(function(){var n=L0.length;for(var i=0;i<n-1;i++){var p0=L0[Math.max(i-1,0)],p1=L0[i],p2=L0[i+1],p3=L0[Math.min(i+2,n-1)];
 for(var t=0;t<1;t+=0.125){var t2=t*t,t3=t2*t;
  var x=0.5*((2*p1[0])+(-p0[0]+p2[0])*t+(2*p0[0]-5*p1[0]+4*p2[0]-p3[0])*t2+(-p0[0]+3*p1[0]-3*p2[0]+p3[0])*t3);
  var y=0.5*((2*p1[1])+(-p0[1]+p2[1])*t+(2*p0[1]-5*p1[1]+4*p2[1]-p3[1])*t2+(-p0[1]+3*p1[1]-3*p2[1]+p3[1])*t3);
  LO.push([x,y]);}}LO.push(L0[n-1]);})();
var TRI=[[0.64,0.33],[0.30,0.60],[0.15,0.06]];
var DARK=0.58;
function gam(v){return Math.pow(v,GAM);}
var GAM=1/1.5;
function col(x,y,inside){
  if(y<0.002)y=0.002;
  var X=x/y,Z=(1-x-y)/y;
  var r=3.2406*X-1.5372-0.4986*Z,g=-0.9689*X+1.8758+0.0415*Z,b=0.0557*X-0.2040+1.0570*Z;
  if(r<0)r=0;if(g<0)g=0;if(b<0)b=0;
  var m=Math.max(r,g,b);if(m<=0)return [0,0,0];
  r=gam(r/m);g=gam(g/m);b=gam(b/m);
  var k=inside?255:255*DARK;
  return [r*k,g*k,b*k];
}
function field(W,H,inv,inside){
  var c=document.createElement('canvas');c.width=W;c.height=H;
  var cx=c.getContext('2d');var im=cx.createImageData(W,H);var d=im.data;
  for(var j=0;j<H;j++){for(var i=0;i<W;i++){
    var p=inv(i+0.5,j+0.5);var q=col(p[0],p[1],inside);var o=(j*W+i)*4;
    d[o]=q[0];d[o+1]=q[1];d[o+2]=q[2];d[o+3]=255;}}
  cx.putImageData(im,0,0);return c;
}
function draw(id,W,H,S,fw,inv,fwd){
  var cv=document.getElementById(id);cv.width=W*S;cv.height=H*S;
  var ctx=cv.getContext('2d');
  var invS=function(i,j){return inv(i/S,j/S);};
  var A=field(W*S,H*S,invS,false),Bf=field(W*S,H*S,invS,true);
  ctx.fillStyle=ctx.createPattern(A,'no-repeat');
  ctx.beginPath();
  for(var k=0;k<LO.length;k++){var p=fwd(LO[k][0],LO[k][1]);if(k==0)ctx.moveTo(p[0]*S,p[1]*S);else ctx.lineTo(p[0]*S,p[1]*S);}
  ctx.closePath();ctx.fill();
  ctx.fillStyle=ctx.createPattern(Bf,'no-repeat');
  ctx.beginPath();
  for(var k=0;k<3;k++){var p=fwd(TRI[k][0],TRI[k][1]);if(k==0)ctx.moveTo(p[0]*S,p[1]*S);else ctx.lineTo(p[0]*S,p[1]*S);}
  ctx.closePath();ctx.fill();
}
try{
draw('cie',745,536,2,0,function(i,j){return [i/886.9,(535.5-j)/636.6];},function(x,y){return [x*886.9,535.5-y*636.6];});
draw('ins',251,199,2,0,function(i,j){return [0.4193+(i+1649-1772.4)/3800,0.5053-(j+145-243.7)/2983];},function(x,y){return [(x-0.4193)*3800+1772.4-1649,243.7-(y-0.5053)*2983-145];});
}catch(e){}
})();
</script>
</body></html>
